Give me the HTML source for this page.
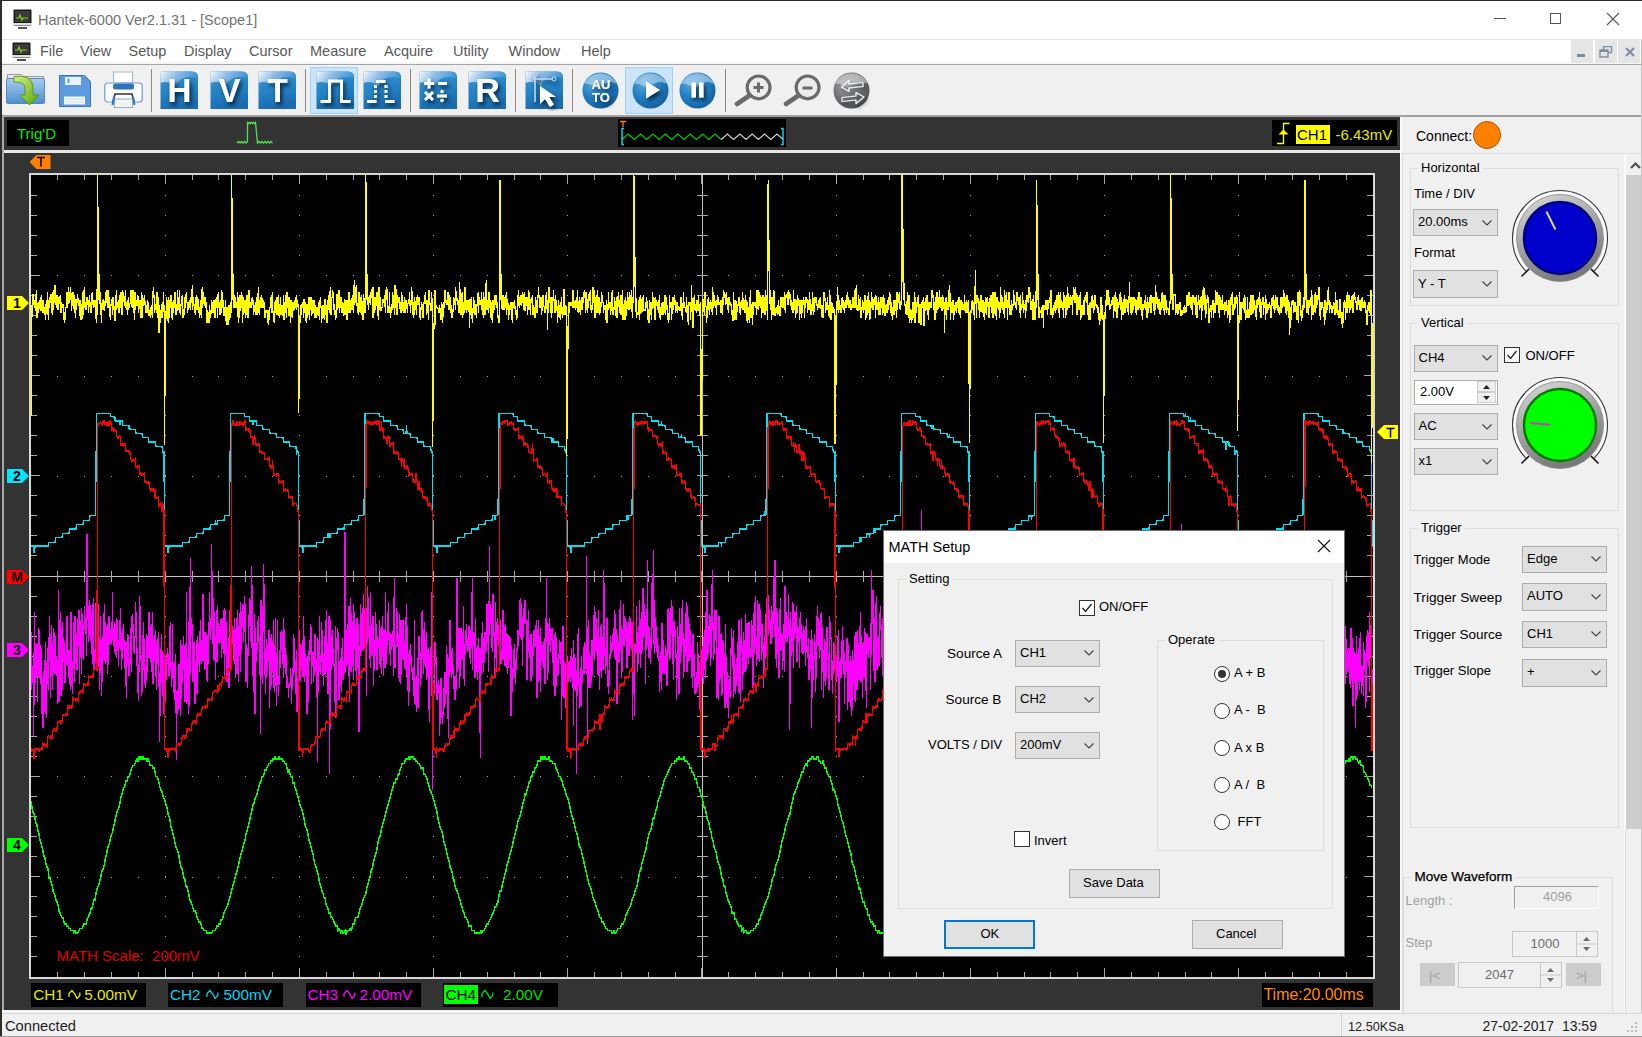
<!DOCTYPE html>
<html><head><meta charset="utf-8"><title>Hantek-6000</title>
<style>
html,body{margin:0;padding:0;width:1642px;height:1037px;overflow:hidden;background:#f0f0f0;}
body{position:relative;font-family:'Liberation Sans', sans-serif;}
.t{position:absolute;white-space:pre;line-height:1.15;font-family:'Liberation Sans', sans-serif;}
</style></head><body>
<div style="position:absolute;left:0px;top:0px;width:1642px;height:1px;background:#2c2c2c"></div>
<div style="position:absolute;left:0px;top:0px;width:2px;height:1037px;background:#2c2c2c"></div>
<div style="position:absolute;left:2px;top:1px;width:1640px;height:39px;background:#fff"></div>
<div style="position:absolute;left:2px;top:39px;width:1640px;height:1px;background:#e3e3e3"></div>
<svg style="position:absolute;left:13px;top:9px" width="19" height="20" viewBox="0 0 19 20">
<rect x="0.5" y="0.5" width="18" height="16" rx="1" fill="#1a1a1a"/><rect x="2" y="2" width="15" height="11" fill="#3a3a3a"/>
<path d="M3 9h3l1-3 2 5 1-2h5" stroke="#7dd321" stroke-width="1.2" fill="none"/><rect x="0" y="14" width="19" height="2" fill="#e0e0e0"/>
<rect x="5" y="18" width="9" height="2" fill="#555"/></svg>
<div class="t" style="left:38px;top:11.9px;font-size:14.5px;color:#737373;">Hantek-6000 Ver2.1.31 - [Scope1]</div>
<div style="position:absolute;left:1494px;top:18px;width:12px;height:1px;background:#555"></div>
<div style="position:absolute;left:1550px;top:13px;width:11px;height:11px;border:1px solid #555;box-sizing:border-box"></div>
<svg style="position:absolute;left:1606px;top:12px" width="14" height="14"><path d="M1 1L13 13M13 1L1 13" stroke="#555" stroke-width="1.1"/></svg>
<div style="position:absolute;left:2px;top:40px;width:1640px;height:24px;background:linear-gradient(#fff 85%,#f3f3f3)"></div>
<svg style="position:absolute;left:12px;top:42px" width="19" height="20" viewBox="0 0 19 20">
<rect x="0.5" y="0.5" width="18" height="15" rx="1" fill="#1a1a1a"/><rect x="2" y="2" width="15" height="10" fill="#3a3a3a"/>
<path d="M3 8h3l1-3 2 5 1-2h5" stroke="#7dd321" stroke-width="1.2" fill="none"/><rect x="0" y="13" width="19" height="2" fill="#e0e0e0"/>
<rect x="5" y="17" width="9" height="2" fill="#555"/></svg>
<div class="t" style="left:40px;top:43.4px;font-size:14.5px;color:#585858;">File</div>
<div class="t" style="left:80px;top:43.4px;font-size:14.5px;color:#585858;">View</div>
<div class="t" style="left:128.5px;top:43.4px;font-size:14.5px;color:#585858;">Setup</div>
<div class="t" style="left:184px;top:43.4px;font-size:14.5px;color:#585858;">Display</div>
<div class="t" style="left:249px;top:43.4px;font-size:14.5px;color:#585858;">Cursor</div>
<div class="t" style="left:310px;top:43.4px;font-size:14.5px;color:#585858;">Measure</div>
<div class="t" style="left:384px;top:43.4px;font-size:14.5px;color:#585858;">Acquire</div>
<div class="t" style="left:453px;top:43.4px;font-size:14.5px;color:#585858;">Utility</div>
<div class="t" style="left:508.5px;top:43.4px;font-size:14.5px;color:#585858;">Window</div>
<div class="t" style="left:581px;top:43.4px;font-size:14.5px;color:#585858;">Help</div>
<div style="position:absolute;left:1571px;top:40px;width:22px;height:23px;background:#e6e6e6"></div>
<div style="position:absolute;left:1595px;top:40px;width:22px;height:23px;background:#e6e6e6"></div>
<div style="position:absolute;left:1618px;top:40px;width:22px;height:23px;background:#e6e6e6"></div>
<div style="position:absolute;left:1577px;top:54px;width:8px;height:2.5px;background:#7b8da0"></div>
<svg style="position:absolute;left:1599px;top:46px" width="14" height="14"><rect x="4.5" y="0.5" width="8" height="6" fill="none" stroke="#7b8da0" stroke-width="1.4"/><rect x="1" y="4" width="8" height="7" fill="#e6e6e6" stroke="#7b8da0" stroke-width="1.4"/><rect x="1" y="4" width="8" height="2" fill="#7b8da0"/></svg>
<svg style="position:absolute;left:1625px;top:47px" width="10" height="10"><path d="M1 1L9 9M9 1L1 9" stroke="#7b8da0" stroke-width="2.2"/></svg>
<div style="position:absolute;left:2px;top:64px;width:1640px;height:52px;background:#f0f0f0"></div>
<div style="position:absolute;left:2px;top:64px;width:1640px;height:1px;background:#a5a5a5"></div>
<div style="position:absolute;left:2px;top:115px;width:1640px;height:2px;background:#a0a0a0"></div>
<div style="position:absolute;left:151px;top:69px;width:1px;height:43px;background:#8a8a8a"></div>
<div style="position:absolute;left:305px;top:69px;width:1px;height:43px;background:#8a8a8a"></div>
<div style="position:absolute;left:410px;top:69px;width:1px;height:43px;background:#8a8a8a"></div>
<div style="position:absolute;left:515px;top:69px;width:1px;height:43px;background:#8a8a8a"></div>
<div style="position:absolute;left:571.5px;top:69px;width:1px;height:43px;background:#8a8a8a"></div>
<div style="position:absolute;left:725px;top:69px;width:1px;height:43px;background:#8a8a8a"></div>
<svg style="position:absolute;left:5px;top:72px" width="42" height="36" viewBox="0 0 42 36">
<defs><linearGradient id="fold" x1="0" y1="0" x2="0" y2="1"><stop offset="0" stop-color="#a8cdee"/><stop offset="1" stop-color="#4d8fd1"/></linearGradient>
<linearGradient id="arr" x1="0" y1="0" x2="1" y2="1"><stop offset="0" stop-color="#d6f08a"/><stop offset="1" stop-color="#5aa800"/></linearGradient></defs>
<path d="M2.5 2.5h14l2 2h20v5h-36z" fill="#e8e8e8" stroke="#9a9a9a"/>
<rect x="1.5" y="6.5" width="38" height="25" rx="1.5" fill="url(#fold)" stroke="#5b86b8"/>
<path d="M9 4.5Q27 2 28 15V23H34L24.5 33L15 23H20V15.5Q19.5 9.5 9 10z" fill="url(#arr)" stroke="#4c8f00" stroke-width="0.8"/>
</svg>
<svg style="position:absolute;left:59px;top:75px" width="33" height="33" viewBox="0 0 33 33">
<path d="M0.5 0.5h25l6 6v25h-31z" fill="#5d9be0" stroke="#3a74c4"/>
<rect x="6" y="2" width="16" height="8" fill="#eaf2fb"/><rect x="8.5" y="3.5" width="2" height="4.5" fill="#5d9be0"/>
<rect x="5" y="21.5" width="21" height="8" fill="#f4f8fc"/><path d="M6 24h19M6 27h19" stroke="#c8d8ea" stroke-width="0.8"/>
</svg>
<svg style="position:absolute;left:104px;top:71px" width="39" height="38" viewBox="0 0 39 38">
<rect x="9.5" y="1" width="19" height="11" fill="#fff" stroke="#9bb8d8"/>
<rect x="0.8" y="12" width="37.4" height="19" rx="3" fill="#fbfbfb" stroke="#6c9fd4" stroke-width="1.2"/>
<rect x="9" y="12.5" width="21" height="6" rx="2.5" fill="#2d73bf"/>
<path d="M9 31l2-8h17l2 8" fill="#fff" stroke="#333" stroke-width="1.6"/>
<rect x="10.5" y="28" width="18" height="8.5" fill="#f3f3f3" stroke="#8fb0d6"/>
<path d="M10 26l-1.5 8M29 26l1.5 8" stroke="#2d73bf" stroke-width="2"/>
</svg>
<div style="position:absolute;left:310px;top:67px;width:48px;height:47px;background:#cce4f7;border:1px solid #99d1ff;box-sizing:border-box"></div>
<div style="position:absolute;left:625px;top:67px;width:48px;height:47px;background:#cce4f7;border:1px solid #99d1ff;box-sizing:border-box"></div>
<svg width="0" height="0" style="position:absolute"><defs>
<linearGradient id="sqbg" x1="0" y1="0" x2="0.3" y2="1"><stop offset="0" stop-color="#3d95d6"/><stop offset="0.6" stop-color="#2381c4"/><stop offset="1" stop-color="#1a6cb0"/></linearGradient>
<linearGradient id="sqhl" x1="0" y1="0" x2="1" y2="0.3"><stop offset="0" stop-color="#f4f8fc"/><stop offset="0.45" stop-color="#8dbde6"/><stop offset="1" stop-color="#3a93d4"/></linearGradient>
<filter id="gsh" x="-30%" y="-30%" width="160%" height="160%"><feGaussianBlur in="SourceAlpha" stdDeviation="2"/><feOffset dx="2.2" dy="2.8" result="b"/><feFlood flood-color="#041e36" flood-opacity="0.95"/><feComposite in2="b" operator="in"/><feMerge><feMergeNode/><feMergeNode in="SourceGraphic"/></feMerge></filter>
<radialGradient id="cbg" cx="0.35" cy="0.3" r="0.8"><stop offset="0" stop-color="#5aaae0"/><stop offset="0.5" stop-color="#2480c3"/><stop offset="1" stop-color="#0f5a9a"/></radialGradient>
</defs></svg>
<svg style="position:absolute;left:160px;top:71px" width="40" height="40" viewBox="0 0 40 40"><path d="M0.5 1.5Q0.5 0.5 1.5 0.5H32Q38 0.5 38 6.5V38H0.5z" fill="url(#sqbg)"/><path d="M0.5 1.5Q0.5 0.5 1.5 0.5H32Q38 0.5 38 6.5V7Q20 3 16 15Q8 9 0.5 12z" fill="url(#sqhl)"/><g filter="url(#gsh)"><text x="19.5" y="30.5" text-anchor="middle" font-family="Liberation Sans" font-weight="bold" font-size="33" fill="#fff">H</text></g></svg>
<svg style="position:absolute;left:209.5px;top:71px" width="40" height="40" viewBox="0 0 40 40"><path d="M0.5 1.5Q0.5 0.5 1.5 0.5H32Q38 0.5 38 6.5V38H0.5z" fill="url(#sqbg)"/><path d="M0.5 1.5Q0.5 0.5 1.5 0.5H32Q38 0.5 38 6.5V7Q20 3 16 15Q8 9 0.5 12z" fill="url(#sqhl)"/><g filter="url(#gsh)"><text x="19.5" y="30.5" text-anchor="middle" font-family="Liberation Sans" font-weight="bold" font-size="33" fill="#fff">V</text></g></svg>
<svg style="position:absolute;left:258px;top:71px" width="40" height="40" viewBox="0 0 40 40"><path d="M0.5 1.5Q0.5 0.5 1.5 0.5H32Q38 0.5 38 6.5V38H0.5z" fill="url(#sqbg)"/><path d="M0.5 1.5Q0.5 0.5 1.5 0.5H32Q38 0.5 38 6.5V7Q20 3 16 15Q8 9 0.5 12z" fill="url(#sqhl)"/><g filter="url(#gsh)"><text x="19.5" y="30.5" text-anchor="middle" font-family="Liberation Sans" font-weight="bold" font-size="33" fill="#fff">T</text></g></svg>
<svg style="position:absolute;left:316px;top:71px" width="40" height="40" viewBox="0 0 40 40"><path d="M0.5 1.5Q0.5 0.5 1.5 0.5H32Q38 0.5 38 6.5V38H0.5z" fill="url(#sqbg)"/><path d="M0.5 1.5Q0.5 0.5 1.5 0.5H32Q38 0.5 38 6.5V7Q20 3 16 15Q8 9 0.5 12z" fill="url(#sqhl)"/><g filter="url(#gsh)"><path d="M4.5 30.5h9V10h12v20.5h9" stroke="#fff" stroke-width="3" fill="none"/></g></svg>
<svg style="position:absolute;left:363px;top:71px" width="40" height="40" viewBox="0 0 40 40"><path d="M0.5 1.5Q0.5 0.5 1.5 0.5H32Q38 0.5 38 6.5V38H0.5z" fill="url(#sqbg)"/><path d="M0.5 1.5Q0.5 0.5 1.5 0.5H32Q38 0.5 38 6.5V7Q20 3 16 15Q8 9 0.5 12z" fill="url(#sqhl)"/><g filter="url(#gsh)"><path d="M4 30.5h9.5M22 30.5h9.5M13 10.5h9.5" stroke="#fff" stroke-width="3" fill="none"/><path d="M12.5 14v14M23 14v14" stroke="#fff" stroke-width="3" stroke-dasharray="3 2" fill="none"/></g></svg>
<svg style="position:absolute;left:419px;top:71px" width="40" height="40" viewBox="0 0 40 40"><path d="M0.5 1.5Q0.5 0.5 1.5 0.5H32Q38 0.5 38 6.5V38H0.5z" fill="url(#sqbg)"/><path d="M0.5 1.5Q0.5 0.5 1.5 0.5H32Q38 0.5 38 6.5V7Q20 3 16 15Q8 9 0.5 12z" fill="url(#sqhl)"/><g filter="url(#gsh)"><path d="M5 12.5h10M10 7.5v10M19 12.5h9M6 21l8 8M14 21l-8 8M18 25h10" stroke="#fff" stroke-width="3" fill="none"/><circle cx="23" cy="20.5" r="1.8" fill="#fff"/><circle cx="23" cy="29.5" r="1.8" fill="#fff"/></g></svg>
<svg style="position:absolute;left:468px;top:71px" width="40" height="40" viewBox="0 0 40 40"><path d="M0.5 1.5Q0.5 0.5 1.5 0.5H32Q38 0.5 38 6.5V38H0.5z" fill="url(#sqbg)"/><path d="M0.5 1.5Q0.5 0.5 1.5 0.5H32Q38 0.5 38 6.5V7Q20 3 16 15Q8 9 0.5 12z" fill="url(#sqhl)"/><g filter="url(#gsh)"><text x="19.5" y="31" text-anchor="middle" font-family="Liberation Sans" font-weight="bold" font-size="34" fill="#fff">R</text></g></svg>
<svg style="position:absolute;left:525px;top:71px" width="40" height="40" viewBox="0 0 40 40"><path d="M0.5 1.5Q0.5 0.5 1.5 0.5H32Q38 0.5 38 6.5V38H0.5z" fill="url(#sqbg)"/><path d="M0.5 1.5Q0.5 0.5 1.5 0.5H32Q38 0.5 38 6.5V7Q20 3 16 15Q8 9 0.5 12z" fill="url(#sqhl)"/><g filter="url(#gsh)"><path d="M8 8h20M10 4v27" stroke="#b8d4ea" stroke-width="1.6" fill="none"/><circle cx="10" cy="4" r="2" fill="none" stroke="#b8d4ea"/><circle cx="29" cy="8" r="2" fill="none" stroke="#b8d4ea"/><path d="M15 15v18l5-5 5 8 4-2.5-5-7.5h7z" fill="#fff"/></g></svg>
<svg width="0" height="0" style="position:absolute"><defs><radialGradient id="cgray" cx="0.4" cy="0.35" r="0.75"><stop offset="0" stop-color="#b0b0b0"/><stop offset="0.6" stop-color="#6e6e6e"/><stop offset="1" stop-color="#4a4a4a"/></radialGradient></defs></svg>
<svg style="position:absolute;left:582px;top:72px" width="40" height="40" viewBox="0 0 40 40"><circle cx="18.5" cy="18.5" r="18" fill="url(#cbg)"/><path d="M2 12A18 18 0 0 1 35 12Q25 6 16 17Q8 11 2 12z" fill="#cfe4f5" opacity="0.55"/><g filter="url(#gsh)"><text x="19" y="17" text-anchor="middle" font-family="Liberation Sans" font-weight="bold" font-size="13" fill="#fff">AU</text><text x="19" y="29.5" text-anchor="middle" font-family="Liberation Sans" font-weight="bold" font-size="13" fill="#fff">TO</text></g></svg>
<svg style="position:absolute;left:631.5px;top:72px" width="40" height="40" viewBox="0 0 40 40"><circle cx="18.5" cy="18.5" r="18" fill="url(#cbg)"/><path d="M2 12A18 18 0 0 1 35 12Q25 6 16 17Q8 11 2 12z" fill="#cfe4f5" opacity="0.55"/><g filter="url(#gsh)"><path d="M14 9.5v17l14-8.5z" fill="#fff"/></g></svg>
<svg style="position:absolute;left:679px;top:72px" width="40" height="40" viewBox="0 0 40 40"><circle cx="18.5" cy="18.5" r="18" fill="url(#cbg)"/><path d="M2 12A18 18 0 0 1 35 12Q25 6 16 17Q8 11 2 12z" fill="#cfe4f5" opacity="0.55"/><g filter="url(#gsh)"><rect x="12.5" y="10.5" width="4.5" height="15" fill="#fff"/><rect x="20" y="10.5" width="4.5" height="15" fill="#fff"/></g></svg>
<svg style="position:absolute;left:734px;top:73px" width="42" height="36"><circle cx="24.6" cy="14.4" r="11.4" fill="#ececec" stroke="#6a6a6a" stroke-width="3.2"/><path d="M19.5 14.5h10M24.5 9.5v10" stroke="#6a6a6a" stroke-width="3"/><path d="M15.5 22.5L3 31" stroke="#6a6a6a" stroke-width="4.6" stroke-linecap="round"/></svg>
<svg style="position:absolute;left:783px;top:73px" width="42" height="36"><circle cx="24.6" cy="14.4" r="11.4" fill="#ececec" stroke="#6a6a6a" stroke-width="3.2"/><path d="M19.5 15h10" stroke="#6a6a6a" stroke-width="3"/><path d="M15.5 22.5L3 31" stroke="#6a6a6a" stroke-width="4.6" stroke-linecap="round"/></svg>
<svg style="position:absolute;left:833px;top:72px" width="40" height="40" viewBox="0 0 40 40"><circle cx="18.5" cy="18.5" r="18" fill="url(#cgray)"/><path d="M2 12A18 18 0 0 1 35 12Q25 6 16 17Q8 11 2 12z" fill="#e0e0e0" opacity="0.55"/><g filter="url(#gsh)"><path d="M8.5 15L16 8.5V12L30 10.5V14.5L16 16V19.5z" fill="none" stroke="#f4f4f4" stroke-width="1.2" stroke-linejoin="round"/><path d="M31 25L23 31.5V28L9 29.5V25.5L23 24V20.5z" fill="none" stroke="#f4f4f4" stroke-width="1.2" stroke-linejoin="round"/></g></svg>
<div style="position:absolute;left:2px;top:117px;width:1400px;height:896px;background:#333"></div>
<div style="position:absolute;left:2px;top:117px;width:2px;height:895px;background:#a9a9a9"></div>
<div style="position:absolute;left:4px;top:150px;width:1397px;height:3px;background:#e6e6e6"></div>
<div style="position:absolute;left:1400px;top:117px;width:2px;height:896px;background:#f8f8f8"></div>
<div style="position:absolute;left:2px;top:1010px;width:1400px;height:3px;background:#f4f4f4"></div>
<div style="position:absolute;left:7px;top:120px;width:62px;height:26px;background:#000"></div>
<div class="t" style="left:17px;top:125.4px;font-size:15px;color:#00ee00;">Trig'D</div>
<svg style="position:absolute;left:236px;top:121px" width="40" height="25"><path d="M1 22l1.5-1.5 1.5 1.5 1.5-1.5 1.5 1.5 1.5-1.5 1.5 1.5 1.5-1.5L11.5 1.5l1 1 1-1 1 1 1-1 1 1 1-1 1 1 1-1L21.5 22l1.5-1.5 1.5 1.5 1.5-1.5 1.5 1.5 1.5-1.5 1.5 1.5 1.5-1.5 1.5 1.5 1.5-1.5 1.5 1.5" stroke="#55e055" stroke-width="1.3" fill="none"/></svg>
<div style="position:absolute;left:618px;top:119px;width:168px;height:28px;background:#000"></div>
<svg style="position:absolute;left:0;top:0" width="1642" height="200"><path d="M622.0 139.5L628.2 134L634.4 139.5L640.6 134L646.8 139.5L653.0 134L659.2 139.5L665.4 134L671.6 139.5L677.8 134L684.0 139.5L690.2 134L696.4 139.5L702.6 134L708.8 139.5L715.0 134L721.2 139.5" stroke="#00cc00" stroke-width="1.2" fill="none"/><path d="M721.2 139.5L727.4 134L733.6 139.5L739.8 134L746.0 139.5L752.2 134L758.4 139.5L764.6 134L770.8 139.5L777.0 134L783.2 139.5" stroke="#d0d0d0" stroke-width="1.2" fill="none"/><path d="M624 128.5h-2v16h2M781 128.5h2v16h-2" stroke="#00e5ff" stroke-width="1.4" fill="none"/><path d="M620 121.5h6M623 121.5v5.5" stroke="#ff7f00" stroke-width="1.3"/></svg>
<div style="position:absolute;left:1272px;top:120px;width:125px;height:26px;background:#000"></div>
<svg style="position:absolute;left:1276px;top:122px" width="16" height="24"><path d="M1 21.5h6.5V1.5h6" stroke="#ffff00" stroke-width="1.3" fill="none"/><path d="M2.5 12.5l5-5 5 5z" fill="#ffff00"/></svg>
<div style="position:absolute;left:1295.5px;top:125px;width:34.5px;height:19px;background:#ffff00"></div>
<div class="t" style="left:1297px;top:126.2px;font-size:15px;color:#000;">CH1</div>
<div class="t" style="left:1335.5px;top:126.2px;font-size:15px;color:#e8e800;">-6.43mV</div>
<svg style="position:absolute;left:28px;top:154px" width="24" height="16"><path d="M1.5 8L8.5 1h14v14h-14z" fill="#ff8000"/><path d="M9 3.5h8M13 3.5v9" stroke="#000" stroke-width="1.5"/></svg>
<svg style="position:absolute;left:0;top:0" width="1642" height="1037" shape-rendering="crispEdges"><rect x="30" y="174" width="1344" height="804" fill="#000"/>
<line x1="702.5" y1="175" x2="702.5" y2="977" stroke="#c4c4c4" stroke-width="1"/>
<line x1="31" y1="576.5" x2="1373" y2="576.5" stroke="#c4c4c4" stroke-width="1"/>
<path d="M57.5 175v5M57.5 977v-5M57.5 571v11M84.5 175v5M84.5 977v-5M84.5 571v11M111.5 175v5M111.5 977v-5M111.5 571v11M138.5 175v5M138.5 977v-5M138.5 571v11M165.5 175v9M165.5 977v-9M165.5 571v11M192.5 175v5M192.5 977v-5M192.5 571v11M218.5 175v5M218.5 977v-5M218.5 571v11M245.5 175v5M245.5 977v-5M245.5 571v11M272.5 175v5M272.5 977v-5M272.5 571v11M299.5 175v9M299.5 977v-9M299.5 571v11M326.5 175v5M326.5 977v-5M326.5 571v11M353.5 175v5M353.5 977v-5M353.5 571v11M379.5 175v5M379.5 977v-5M379.5 571v11M406.5 175v5M406.5 977v-5M406.5 571v11M433.5 175v9M433.5 977v-9M433.5 571v11M460.5 175v5M460.5 977v-5M460.5 571v11M487.5 175v5M487.5 977v-5M487.5 571v11M514.5 175v5M514.5 977v-5M514.5 571v11M540.5 175v5M540.5 977v-5M540.5 571v11M567.5 175v9M567.5 977v-9M567.5 571v11M594.5 175v5M594.5 977v-5M594.5 571v11M621.5 175v5M621.5 977v-5M621.5 571v11M648.5 175v5M648.5 977v-5M648.5 571v11M675.5 175v5M675.5 977v-5M675.5 571v11M701.5 175v9M701.5 977v-9M701.5 571v11M728.5 175v5M728.5 977v-5M728.5 571v11M755.5 175v5M755.5 977v-5M755.5 571v11M782.5 175v5M782.5 977v-5M782.5 571v11M809.5 175v5M809.5 977v-5M809.5 571v11M836.5 175v9M836.5 977v-9M836.5 571v11M863.5 175v5M863.5 977v-5M863.5 571v11M889.5 175v5M889.5 977v-5M889.5 571v11M916.5 175v5M916.5 977v-5M916.5 571v11M943.5 175v5M943.5 977v-5M943.5 571v11M970.5 175v9M970.5 977v-9M970.5 571v11M997.5 175v5M997.5 977v-5M997.5 571v11M1024.5 175v5M1024.5 977v-5M1024.5 571v11M1050.5 175v5M1050.5 977v-5M1050.5 571v11M1077.5 175v5M1077.5 977v-5M1077.5 571v11M1104.5 175v9M1104.5 977v-9M1104.5 571v11M1131.5 175v5M1131.5 977v-5M1131.5 571v11M1158.5 175v5M1158.5 977v-5M1158.5 571v11M1185.5 175v5M1185.5 977v-5M1185.5 571v11M1211.5 175v5M1211.5 977v-5M1211.5 571v11M1238.5 175v9M1238.5 977v-9M1238.5 571v11M1265.5 175v5M1265.5 977v-5M1265.5 571v11M1292.5 175v5M1292.5 977v-5M1292.5 571v11M1319.5 175v5M1319.5 977v-5M1319.5 571v11M1346.5 175v5M1346.5 977v-5M1346.5 571v11M31 195.5h6M1373 195.5h-6M697 195.5h11M31 215.5h6M1373 215.5h-6M697 215.5h11M31 235.5h6M1373 235.5h-6M697 235.5h11M31 255.5h6M1373 255.5h-6M697 255.5h11M31 275.5h9M1373 275.5h-9M697 275.5h11M31 295.5h6M1373 295.5h-6M697 295.5h11M31 315.5h6M1373 315.5h-6M697 315.5h11M31 335.5h6M1373 335.5h-6M697 335.5h11M31 355.5h6M1373 355.5h-6M697 355.5h11M31 375.5h9M1373 375.5h-9M697 375.5h11M31 395.5h6M1373 395.5h-6M697 395.5h11M31 415.5h6M1373 415.5h-6M697 415.5h11M31 435.5h6M1373 435.5h-6M697 435.5h11M31 455.5h6M1373 455.5h-6M697 455.5h11M31 475.5h9M1373 475.5h-9M697 475.5h11M31 495.5h6M1373 495.5h-6M697 495.5h11M31 515.5h6M1373 515.5h-6M697 515.5h11M31 535.5h6M1373 535.5h-6M697 535.5h11M31 555.5h6M1373 555.5h-6M697 555.5h11M31 576.5h9M1373 576.5h-9M697 576.5h11M31 596.5h6M1373 596.5h-6M697 596.5h11M31 616.5h6M1373 616.5h-6M697 616.5h11M31 636.5h6M1373 636.5h-6M697 636.5h11M31 656.5h6M1373 656.5h-6M697 656.5h11M31 676.5h9M1373 676.5h-9M697 676.5h11M31 696.5h6M1373 696.5h-6M697 696.5h11M31 716.5h6M1373 716.5h-6M697 716.5h11M31 736.5h6M1373 736.5h-6M697 736.5h11M31 756.5h6M1373 756.5h-6M697 756.5h11M31 776.5h9M1373 776.5h-9M697 776.5h11M31 796.5h6M1373 796.5h-6M697 796.5h11M31 816.5h6M1373 816.5h-6M697 816.5h11M31 836.5h6M1373 836.5h-6M697 836.5h11M31 856.5h6M1373 856.5h-6M697 856.5h11M31 876.5h9M1373 876.5h-9M697 876.5h11M31 896.5h6M1373 896.5h-6M697 896.5h11M31 916.5h6M1373 916.5h-6M697 916.5h11M31 936.5h6M1373 936.5h-6M697 936.5h11M31 956.5h6M1373 956.5h-6M697 956.5h11" stroke="#a8a8a8" stroke-width="1" fill="none"/>
<path d="M57.0 275h1M57.0 376h1M57.0 476h1M57.0 576h1M57.0 676h1M57.0 776h1M57.0 877h1M84.0 275h1M84.0 376h1M84.0 476h1M84.0 576h1M84.0 676h1M84.0 776h1M84.0 877h1M111.0 275h1M111.0 376h1M111.0 476h1M111.0 576h1M111.0 676h1M111.0 776h1M111.0 877h1M138.0 275h1M138.0 376h1M138.0 476h1M138.0 576h1M138.0 676h1M138.0 776h1M138.0 877h1M165.0 275h1M165.0 376h1M165.0 476h1M165.0 576h1M165.0 676h1M165.0 776h1M165.0 877h1M192.0 275h1M192.0 376h1M192.0 476h1M192.0 576h1M192.0 676h1M192.0 776h1M192.0 877h1M218.0 275h1M218.0 376h1M218.0 476h1M218.0 576h1M218.0 676h1M218.0 776h1M218.0 877h1M245.0 275h1M245.0 376h1M245.0 476h1M245.0 576h1M245.0 676h1M245.0 776h1M245.0 877h1M272.0 275h1M272.0 376h1M272.0 476h1M272.0 576h1M272.0 676h1M272.0 776h1M272.0 877h1M299.0 275h1M299.0 376h1M299.0 476h1M299.0 576h1M299.0 676h1M299.0 776h1M299.0 877h1M326.0 275h1M326.0 376h1M326.0 476h1M326.0 576h1M326.0 676h1M326.0 776h1M326.0 877h1M353.0 275h1M353.0 376h1M353.0 476h1M353.0 576h1M353.0 676h1M353.0 776h1M353.0 877h1M379.0 275h1M379.0 376h1M379.0 476h1M379.0 576h1M379.0 676h1M379.0 776h1M379.0 877h1M406.0 275h1M406.0 376h1M406.0 476h1M406.0 576h1M406.0 676h1M406.0 776h1M406.0 877h1M433.0 275h1M433.0 376h1M433.0 476h1M433.0 576h1M433.0 676h1M433.0 776h1M433.0 877h1M460.0 275h1M460.0 376h1M460.0 476h1M460.0 576h1M460.0 676h1M460.0 776h1M460.0 877h1M487.0 275h1M487.0 376h1M487.0 476h1M487.0 576h1M487.0 676h1M487.0 776h1M487.0 877h1M514.0 275h1M514.0 376h1M514.0 476h1M514.0 576h1M514.0 676h1M514.0 776h1M514.0 877h1M540.0 275h1M540.0 376h1M540.0 476h1M540.0 576h1M540.0 676h1M540.0 776h1M540.0 877h1M567.0 275h1M567.0 376h1M567.0 476h1M567.0 576h1M567.0 676h1M567.0 776h1M567.0 877h1M594.0 275h1M594.0 376h1M594.0 476h1M594.0 576h1M594.0 676h1M594.0 776h1M594.0 877h1M621.0 275h1M621.0 376h1M621.0 476h1M621.0 576h1M621.0 676h1M621.0 776h1M621.0 877h1M648.0 275h1M648.0 376h1M648.0 476h1M648.0 576h1M648.0 676h1M648.0 776h1M648.0 877h1M675.0 275h1M675.0 376h1M675.0 476h1M675.0 576h1M675.0 676h1M675.0 776h1M675.0 877h1M701.0 275h1M701.0 376h1M701.0 476h1M701.0 576h1M701.0 676h1M701.0 776h1M701.0 877h1M728.0 275h1M728.0 376h1M728.0 476h1M728.0 576h1M728.0 676h1M728.0 776h1M728.0 877h1M755.0 275h1M755.0 376h1M755.0 476h1M755.0 576h1M755.0 676h1M755.0 776h1M755.0 877h1M782.0 275h1M782.0 376h1M782.0 476h1M782.0 576h1M782.0 676h1M782.0 776h1M782.0 877h1M809.0 275h1M809.0 376h1M809.0 476h1M809.0 576h1M809.0 676h1M809.0 776h1M809.0 877h1M836.0 275h1M836.0 376h1M836.0 476h1M836.0 576h1M836.0 676h1M836.0 776h1M836.0 877h1M863.0 275h1M863.0 376h1M863.0 476h1M863.0 576h1M863.0 676h1M863.0 776h1M863.0 877h1M889.0 275h1M889.0 376h1M889.0 476h1M889.0 576h1M889.0 676h1M889.0 776h1M889.0 877h1M916.0 275h1M916.0 376h1M916.0 476h1M916.0 576h1M916.0 676h1M916.0 776h1M916.0 877h1M943.0 275h1M943.0 376h1M943.0 476h1M943.0 576h1M943.0 676h1M943.0 776h1M943.0 877h1M970.0 275h1M970.0 376h1M970.0 476h1M970.0 576h1M970.0 676h1M970.0 776h1M970.0 877h1M997.0 275h1M997.0 376h1M997.0 476h1M997.0 576h1M997.0 676h1M997.0 776h1M997.0 877h1M1024.0 275h1M1024.0 376h1M1024.0 476h1M1024.0 576h1M1024.0 676h1M1024.0 776h1M1024.0 877h1M1050.0 275h1M1050.0 376h1M1050.0 476h1M1050.0 576h1M1050.0 676h1M1050.0 776h1M1050.0 877h1M1077.0 275h1M1077.0 376h1M1077.0 476h1M1077.0 576h1M1077.0 676h1M1077.0 776h1M1077.0 877h1M1104.0 275h1M1104.0 376h1M1104.0 476h1M1104.0 576h1M1104.0 676h1M1104.0 776h1M1104.0 877h1M1131.0 275h1M1131.0 376h1M1131.0 476h1M1131.0 576h1M1131.0 676h1M1131.0 776h1M1131.0 877h1M1158.0 275h1M1158.0 376h1M1158.0 476h1M1158.0 576h1M1158.0 676h1M1158.0 776h1M1158.0 877h1M1185.0 275h1M1185.0 376h1M1185.0 476h1M1185.0 576h1M1185.0 676h1M1185.0 776h1M1185.0 877h1M1211.0 275h1M1211.0 376h1M1211.0 476h1M1211.0 576h1M1211.0 676h1M1211.0 776h1M1211.0 877h1M1238.0 275h1M1238.0 376h1M1238.0 476h1M1238.0 576h1M1238.0 676h1M1238.0 776h1M1238.0 877h1M1265.0 275h1M1265.0 376h1M1265.0 476h1M1265.0 576h1M1265.0 676h1M1265.0 776h1M1265.0 877h1M1292.0 275h1M1292.0 376h1M1292.0 476h1M1292.0 576h1M1292.0 676h1M1292.0 776h1M1292.0 877h1M1319.0 275h1M1319.0 376h1M1319.0 476h1M1319.0 576h1M1319.0 676h1M1319.0 776h1M1319.0 877h1M1346.0 275h1M1346.0 376h1M1346.0 476h1M1346.0 576h1M1346.0 676h1M1346.0 776h1M1346.0 877h1M165 195.0v1M299 195.0v1M433 195.0v1M567 195.0v1M702 195.0v1M836 195.0v1M970 195.0v1M1104 195.0v1M1238 195.0v1M165 215.0v1M299 215.0v1M433 215.0v1M567 215.0v1M702 215.0v1M836 215.0v1M970 215.0v1M1104 215.0v1M1238 215.0v1M165 235.0v1M299 235.0v1M433 235.0v1M567 235.0v1M702 235.0v1M836 235.0v1M970 235.0v1M1104 235.0v1M1238 235.0v1M165 255.0v1M299 255.0v1M433 255.0v1M567 255.0v1M702 255.0v1M836 255.0v1M970 255.0v1M1104 255.0v1M1238 255.0v1M165 275.0v1M299 275.0v1M433 275.0v1M567 275.0v1M702 275.0v1M836 275.0v1M970 275.0v1M1104 275.0v1M1238 275.0v1M165 295.0v1M299 295.0v1M433 295.0v1M567 295.0v1M702 295.0v1M836 295.0v1M970 295.0v1M1104 295.0v1M1238 295.0v1M165 315.0v1M299 315.0v1M433 315.0v1M567 315.0v1M702 315.0v1M836 315.0v1M970 315.0v1M1104 315.0v1M1238 315.0v1M165 335.0v1M299 335.0v1M433 335.0v1M567 335.0v1M702 335.0v1M836 335.0v1M970 335.0v1M1104 335.0v1M1238 335.0v1M165 355.0v1M299 355.0v1M433 355.0v1M567 355.0v1M702 355.0v1M836 355.0v1M970 355.0v1M1104 355.0v1M1238 355.0v1M165 375.0v1M299 375.0v1M433 375.0v1M567 375.0v1M702 375.0v1M836 375.0v1M970 375.0v1M1104 375.0v1M1238 375.0v1M165 395.0v1M299 395.0v1M433 395.0v1M567 395.0v1M702 395.0v1M836 395.0v1M970 395.0v1M1104 395.0v1M1238 395.0v1M165 415.0v1M299 415.0v1M433 415.0v1M567 415.0v1M702 415.0v1M836 415.0v1M970 415.0v1M1104 415.0v1M1238 415.0v1M165 435.0v1M299 435.0v1M433 435.0v1M567 435.0v1M702 435.0v1M836 435.0v1M970 435.0v1M1104 435.0v1M1238 435.0v1M165 455.0v1M299 455.0v1M433 455.0v1M567 455.0v1M702 455.0v1M836 455.0v1M970 455.0v1M1104 455.0v1M1238 455.0v1M165 475.0v1M299 475.0v1M433 475.0v1M567 475.0v1M702 475.0v1M836 475.0v1M970 475.0v1M1104 475.0v1M1238 475.0v1M165 495.0v1M299 495.0v1M433 495.0v1M567 495.0v1M702 495.0v1M836 495.0v1M970 495.0v1M1104 495.0v1M1238 495.0v1M165 515.0v1M299 515.0v1M433 515.0v1M567 515.0v1M702 515.0v1M836 515.0v1M970 515.0v1M1104 515.0v1M1238 515.0v1M165 535.0v1M299 535.0v1M433 535.0v1M567 535.0v1M702 535.0v1M836 535.0v1M970 535.0v1M1104 535.0v1M1238 535.0v1M165 555.0v1M299 555.0v1M433 555.0v1M567 555.0v1M702 555.0v1M836 555.0v1M970 555.0v1M1104 555.0v1M1238 555.0v1M165 576.0v1M299 576.0v1M433 576.0v1M567 576.0v1M702 576.0v1M836 576.0v1M970 576.0v1M1104 576.0v1M1238 576.0v1M165 596.0v1M299 596.0v1M433 596.0v1M567 596.0v1M702 596.0v1M836 596.0v1M970 596.0v1M1104 596.0v1M1238 596.0v1M165 616.0v1M299 616.0v1M433 616.0v1M567 616.0v1M702 616.0v1M836 616.0v1M970 616.0v1M1104 616.0v1M1238 616.0v1M165 636.0v1M299 636.0v1M433 636.0v1M567 636.0v1M702 636.0v1M836 636.0v1M970 636.0v1M1104 636.0v1M1238 636.0v1M165 656.0v1M299 656.0v1M433 656.0v1M567 656.0v1M702 656.0v1M836 656.0v1M970 656.0v1M1104 656.0v1M1238 656.0v1M165 676.0v1M299 676.0v1M433 676.0v1M567 676.0v1M702 676.0v1M836 676.0v1M970 676.0v1M1104 676.0v1M1238 676.0v1M165 696.0v1M299 696.0v1M433 696.0v1M567 696.0v1M702 696.0v1M836 696.0v1M970 696.0v1M1104 696.0v1M1238 696.0v1M165 716.0v1M299 716.0v1M433 716.0v1M567 716.0v1M702 716.0v1M836 716.0v1M970 716.0v1M1104 716.0v1M1238 716.0v1M165 736.0v1M299 736.0v1M433 736.0v1M567 736.0v1M702 736.0v1M836 736.0v1M970 736.0v1M1104 736.0v1M1238 736.0v1M165 756.0v1M299 756.0v1M433 756.0v1M567 756.0v1M702 756.0v1M836 756.0v1M970 756.0v1M1104 756.0v1M1238 756.0v1M165 776.0v1M299 776.0v1M433 776.0v1M567 776.0v1M702 776.0v1M836 776.0v1M970 776.0v1M1104 776.0v1M1238 776.0v1M165 796.0v1M299 796.0v1M433 796.0v1M567 796.0v1M702 796.0v1M836 796.0v1M970 796.0v1M1104 796.0v1M1238 796.0v1M165 816.0v1M299 816.0v1M433 816.0v1M567 816.0v1M702 816.0v1M836 816.0v1M970 816.0v1M1104 816.0v1M1238 816.0v1M165 836.0v1M299 836.0v1M433 836.0v1M567 836.0v1M702 836.0v1M836 836.0v1M970 836.0v1M1104 836.0v1M1238 836.0v1M165 856.0v1M299 856.0v1M433 856.0v1M567 856.0v1M702 856.0v1M836 856.0v1M970 856.0v1M1104 856.0v1M1238 856.0v1M165 876.0v1M299 876.0v1M433 876.0v1M567 876.0v1M702 876.0v1M836 876.0v1M970 876.0v1M1104 876.0v1M1238 876.0v1M165 896.0v1M299 896.0v1M433 896.0v1M567 896.0v1M702 896.0v1M836 896.0v1M970 896.0v1M1104 896.0v1M1238 896.0v1M165 916.0v1M299 916.0v1M433 916.0v1M567 916.0v1M702 916.0v1M836 916.0v1M970 916.0v1M1104 916.0v1M1238 916.0v1M165 936.0v1M299 936.0v1M433 936.0v1M567 936.0v1M702 936.0v1M836 936.0v1M970 936.0v1M1104 936.0v1M1238 936.0v1M165 956.0v1M299 956.0v1M433 956.0v1M567 956.0v1M702 956.0v1M836 956.0v1M970 956.0v1M1104 956.0v1M1238 956.0v1" stroke="#a0a0a0" stroke-width="1" fill="none"/></svg>
<svg style="position:absolute;left:0;top:0" width="1642" height="1037" shape-rendering="crispEdges"><polyline points="31.0,800.8 32.0,807.4 33.0,811.8 34.0,814.0 35.0,818.4 36.0,822.8 37.0,825.0 38.0,831.6 39.0,833.8 40.0,840.4 41.0,842.6 42.0,847.0 43.0,851.4 44.0,855.8 45.0,858.0 46.0,864.6 47.0,866.8 48.0,869.0 49.0,877.8 50.0,877.8 51.0,882.2 52.0,884.4 53.0,891.0 54.0,893.2 55.0,895.4 56.0,899.8 57.0,902.0 58.0,904.2 59.0,910.8 60.0,913.0 61.0,915.2 62.0,917.4 63.0,917.4 64.0,921.8 65.0,924.0 66.0,924.0 67.0,926.2 68.0,926.2 69.0,928.4 70.0,928.4 71.0,930.6 72.0,930.6 73.0,930.6 74.0,932.8 75.0,930.6 76.0,932.8 77.0,932.8 78.0,932.8 79.0,930.6 80.0,928.4 81.0,928.4 82.0,928.4 83.0,926.2 84.0,924.0 85.0,924.0 86.0,924.0 87.0,919.6 88.0,917.4 89.0,915.2 90.0,913.0 91.0,908.6 92.0,908.6 93.0,904.2 94.0,899.8 95.0,899.8 96.0,893.2 97.0,888.8 98.0,886.6 99.0,884.4 100.0,880.0 101.0,875.6 102.0,871.2 103.0,869.0 104.0,866.8 105.0,860.2 106.0,855.8 107.0,851.4 108.0,847.0 109.0,844.8 110.0,840.4 111.0,836.0 112.0,833.8 113.0,829.4 114.0,825.0 115.0,820.6 116.0,816.2 117.0,811.8 118.0,809.6 119.0,807.4 120.0,803.0 121.0,796.4 122.0,794.2 123.0,789.8 124.0,787.6 125.0,785.4 126.0,781.0 127.0,781.0 128.0,776.6 129.0,776.6 130.0,774.4 131.0,770.0 132.0,767.8 133.0,765.6 134.0,765.6 135.0,763.4 136.0,761.2 137.0,759.0 138.0,761.2 139.0,756.8 140.0,759.0 141.0,756.8 142.0,759.0 143.0,756.8 144.0,759.0 145.0,759.0 146.0,759.0 147.0,761.2 148.0,759.0 149.0,761.2 150.0,765.6 151.0,765.6 152.0,765.6 153.0,767.8 154.0,767.8 155.0,772.2 156.0,776.6 157.0,776.6 158.0,778.8 159.0,783.2 160.0,787.6 161.0,789.8 162.0,792.0 163.0,796.4 164.0,798.6 165.0,800.8 166.0,805.2 167.0,807.4 168.0,814.0 169.0,816.2 170.0,820.6 171.0,827.2 172.0,829.4 173.0,833.8 174.0,838.2 175.0,842.6 176.0,847.0 177.0,849.2 178.0,851.4 179.0,855.8 180.0,862.4 181.0,866.8 182.0,869.0 183.0,873.4 184.0,877.8 185.0,880.0 186.0,886.6 187.0,886.6 188.0,891.0 189.0,895.4 190.0,899.8 191.0,902.0 192.0,904.2 193.0,908.6 194.0,910.8 195.0,910.8 196.0,913.0 197.0,917.4 198.0,919.6 199.0,921.8 200.0,921.8 201.0,924.0 202.0,928.4 203.0,928.4 204.0,930.6 205.0,930.6 206.0,930.6 207.0,932.8 208.0,932.8 209.0,932.8 210.0,932.8 211.0,932.8 212.0,932.8 213.0,930.6 214.0,930.6 215.0,930.6 216.0,928.4 217.0,926.2 218.0,926.2 219.0,924.0 220.0,924.0 221.0,919.6 222.0,919.6 223.0,917.4 224.0,913.0 225.0,910.8 226.0,908.6 227.0,906.4 228.0,904.2 229.0,899.8 230.0,897.6 231.0,893.2 232.0,888.8 233.0,884.4 234.0,882.2 235.0,877.8 236.0,873.4 237.0,871.2 238.0,866.8 239.0,862.4 240.0,858.0 241.0,853.6 242.0,851.4 243.0,847.0 244.0,842.6 245.0,840.4 246.0,833.8 247.0,831.6 248.0,827.2 249.0,822.8 250.0,818.4 251.0,814.0 252.0,809.6 253.0,805.2 254.0,803.0 255.0,798.6 256.0,796.4 257.0,794.2 258.0,789.8 259.0,785.4 260.0,783.2 261.0,781.0 262.0,776.6 263.0,776.6 264.0,774.4 265.0,770.0 266.0,770.0 267.0,767.8 268.0,765.6 269.0,763.4 270.0,763.4 271.0,761.2 272.0,761.2 273.0,759.0 274.0,759.0 275.0,756.8 276.0,759.0 277.0,759.0 278.0,759.0 279.0,756.8 280.0,759.0 281.0,759.0 282.0,759.0 283.0,761.2 284.0,761.2 285.0,763.4 286.0,763.4 287.0,767.8 288.0,772.2 289.0,770.0 290.0,774.4 291.0,776.6 292.0,776.6 293.0,783.2 294.0,783.2 295.0,787.6 296.0,789.8 297.0,794.2 298.0,796.4 299.0,800.8 300.0,805.2 301.0,807.4 302.0,809.6 303.0,814.0 304.0,818.4 305.0,825.0 306.0,827.2 307.0,829.4 308.0,833.8 309.0,840.4 310.0,842.6 311.0,847.0 312.0,851.4 313.0,853.6 314.0,860.2 315.0,864.6 316.0,866.8 317.0,871.2 318.0,873.4 319.0,880.0 320.0,884.4 321.0,886.6 322.0,891.0 323.0,893.2 324.0,897.6 325.0,897.6 326.0,904.2 327.0,906.4 328.0,908.6 329.0,913.0 330.0,913.0 331.0,917.4 332.0,917.4 333.0,919.6 334.0,921.8 335.0,924.0 336.0,926.2 337.0,926.2 338.0,930.6 339.0,928.4 340.0,930.6 341.0,932.8 342.0,930.6 343.0,932.8 344.0,932.8 345.0,930.6 346.0,935.0 347.0,930.6 348.0,930.6 349.0,930.6 350.0,928.4 351.0,930.6 352.0,928.4 353.0,924.0 354.0,924.0 355.0,919.6 356.0,917.4 357.0,917.4 358.0,917.4 359.0,913.0 360.0,908.6 361.0,906.4 362.0,904.2 363.0,899.8 364.0,897.6 365.0,895.4 366.0,893.2 367.0,886.6 368.0,884.4 369.0,880.0 370.0,877.8 371.0,871.2 372.0,869.0 373.0,864.6 374.0,860.2 375.0,855.8 376.0,853.6 377.0,849.2 378.0,842.6 379.0,838.2 380.0,836.0 381.0,831.6 382.0,827.2 383.0,822.8 384.0,820.6 385.0,816.2 386.0,811.8 387.0,807.4 388.0,805.2 389.0,800.8 390.0,798.6 391.0,794.2 392.0,789.8 393.0,787.6 394.0,783.2 395.0,783.2 396.0,778.8 397.0,778.8 398.0,774.4 399.0,774.4 400.0,770.0 401.0,767.8 402.0,763.4 403.0,763.4 404.0,763.4 405.0,761.2 406.0,759.0 407.0,759.0 408.0,759.0 409.0,756.8 410.0,759.0 411.0,756.8 412.0,756.8 413.0,756.8 414.0,759.0 415.0,759.0 416.0,761.2 417.0,761.2 418.0,763.4 419.0,763.4 420.0,765.6 421.0,767.8 422.0,767.8 423.0,767.8 424.0,774.4 425.0,774.4 426.0,776.6 427.0,778.8 428.0,783.2 429.0,785.4 430.0,789.8 431.0,792.0 432.0,794.2 433.0,798.6 434.0,800.8 435.0,805.2 436.0,807.4 437.0,811.8 438.0,818.4 439.0,822.8 440.0,827.2 441.0,829.4 442.0,831.6 443.0,836.0 444.0,842.6 445.0,844.8 446.0,849.2 447.0,853.6 448.0,858.0 449.0,860.2 450.0,866.8 451.0,869.0 452.0,871.2 453.0,877.8 454.0,880.0 455.0,886.6 456.0,888.8 457.0,891.0 458.0,893.2 459.0,897.6 460.0,899.8 461.0,904.2 462.0,906.4 463.0,910.8 464.0,913.0 465.0,917.4 466.0,917.4 467.0,919.6 468.0,921.8 469.0,926.2 470.0,926.2 471.0,926.2 472.0,930.6 473.0,930.6 474.0,930.6 475.0,932.8 476.0,932.8 477.0,932.8 478.0,932.8 479.0,932.8 480.0,932.8 481.0,930.6 482.0,932.8 483.0,930.6 484.0,930.6 485.0,928.4 486.0,926.2 487.0,924.0 488.0,924.0 489.0,921.8 490.0,919.6 491.0,917.4 492.0,915.2 493.0,913.0 494.0,910.8 495.0,906.4 496.0,906.4 497.0,904.2 498.0,902.0 499.0,895.4 500.0,891.0 501.0,891.0 502.0,886.6 503.0,882.2 504.0,877.8 505.0,873.4 506.0,871.2 507.0,864.6 508.0,862.4 509.0,858.0 510.0,853.6 511.0,851.4 512.0,847.0 513.0,842.6 514.0,838.2 515.0,833.8 516.0,829.4 517.0,827.2 518.0,820.6 519.0,818.4 520.0,816.2 521.0,811.8 522.0,807.4 523.0,803.0 524.0,800.8 525.0,794.2 526.0,794.2 527.0,789.8 528.0,787.6 529.0,783.2 530.0,781.0 531.0,776.6 532.0,776.6 533.0,772.2 534.0,772.2 535.0,767.8 536.0,767.8 537.0,765.6 538.0,761.2 539.0,761.2 540.0,761.2 541.0,756.8 542.0,759.0 543.0,756.8 544.0,759.0 545.0,756.8 546.0,759.0 547.0,759.0 548.0,759.0 549.0,756.8 550.0,761.2 551.0,761.2 552.0,761.2 553.0,763.4 554.0,763.4 555.0,763.4 556.0,767.8 557.0,770.0 558.0,772.2 559.0,776.6 560.0,776.6 561.0,778.8 562.0,781.0 563.0,785.4 564.0,787.6 565.0,789.8 566.0,794.2 567.0,796.4 568.0,798.6 569.0,803.0 570.0,807.4 571.0,811.8 572.0,816.2 573.0,818.4 574.0,822.8 575.0,827.2 576.0,831.6 577.0,833.8 578.0,838.2 579.0,844.8 580.0,847.0 581.0,849.2 582.0,853.6 583.0,858.0 584.0,862.4 585.0,866.8 586.0,871.2 587.0,875.6 588.0,880.0 589.0,884.4 590.0,886.6 591.0,888.8 592.0,893.2 593.0,897.6 594.0,899.8 595.0,902.0 596.0,906.4 597.0,908.6 598.0,910.8 599.0,915.2 600.0,917.4 601.0,917.4 602.0,921.8 603.0,921.8 604.0,924.0 605.0,926.2 606.0,928.4 607.0,928.4 608.0,930.6 609.0,930.6 610.0,930.6 611.0,930.6 612.0,932.8 613.0,932.8 614.0,930.6 615.0,932.8 616.0,932.8 617.0,930.6 618.0,928.4 619.0,928.4 620.0,928.4 621.0,926.2 622.0,924.0 623.0,924.0 624.0,921.8 625.0,919.6 626.0,915.2 627.0,913.0 628.0,910.8 629.0,908.6 630.0,906.4 631.0,904.2 632.0,899.8 633.0,897.6 634.0,895.4 635.0,891.0 636.0,888.8 637.0,886.6 638.0,880.0 639.0,875.6 640.0,871.2 641.0,869.0 642.0,862.4 643.0,860.2 644.0,855.8 645.0,851.4 646.0,849.2 647.0,842.6 648.0,838.2 649.0,833.8 650.0,831.6 651.0,829.4 652.0,825.0 653.0,818.4 654.0,818.4 655.0,814.0 656.0,809.6 657.0,807.4 658.0,800.8 659.0,798.6 660.0,796.4 661.0,792.0 662.0,787.6 663.0,785.4 664.0,781.0 665.0,778.8 666.0,776.6 667.0,774.4 668.0,772.2 669.0,770.0 670.0,767.8 671.0,765.6 672.0,763.4 673.0,763.4 674.0,763.4 675.0,761.2 676.0,761.2 677.0,759.0 678.0,759.0 679.0,756.8 680.0,759.0 681.0,759.0 682.0,759.0 683.0,759.0 684.0,756.8 685.0,761.2 686.0,761.2 687.0,761.2 688.0,763.4 689.0,763.4 690.0,767.8 691.0,767.8 692.0,772.2 693.0,772.2 694.0,774.4 695.0,778.8 696.0,778.8 697.0,783.2 698.0,787.6 699.0,787.6 700.0,789.8 701.0,796.4 702.0,796.4 703.0,803.0 704.0,807.4 705.0,807.4 706.0,811.8 707.0,818.4 708.0,820.6 709.0,822.8 710.0,829.4 711.0,831.6 712.0,838.2 713.0,840.4 714.0,847.0 715.0,849.2 716.0,851.4 717.0,858.0 718.0,862.4 719.0,864.6 720.0,866.8 721.0,873.4 722.0,877.8 723.0,880.0 724.0,886.6 725.0,886.6 726.0,893.2 727.0,895.4 728.0,899.8 729.0,902.0 730.0,904.2 731.0,906.4 732.0,913.0 733.0,913.0 734.0,913.0 735.0,919.6 736.0,919.6 737.0,921.8 738.0,924.0 739.0,926.2 740.0,926.2 741.0,926.2 742.0,930.6 743.0,928.4 744.0,932.8 745.0,930.6 746.0,930.6 747.0,932.8 748.0,932.8 749.0,932.8 750.0,932.8 751.0,930.6 752.0,930.6 753.0,930.6 754.0,928.4 755.0,928.4 756.0,926.2 757.0,924.0 758.0,924.0 759.0,919.6 760.0,919.6 761.0,915.2 762.0,913.0 763.0,910.8 764.0,906.4 765.0,904.2 766.0,902.0 767.0,899.8 768.0,897.6 769.0,893.2 770.0,888.8 771.0,886.6 772.0,880.0 773.0,877.8 774.0,875.6 775.0,869.0 776.0,864.6 777.0,862.4 778.0,860.2 779.0,855.8 780.0,851.4 781.0,847.0 782.0,840.4 783.0,838.2 784.0,833.8 785.0,829.4 786.0,825.0 787.0,822.8 788.0,818.4 789.0,816.2 790.0,814.0 791.0,807.4 792.0,803.0 793.0,798.6 794.0,794.2 795.0,792.0 796.0,789.8 797.0,787.6 798.0,783.2 799.0,781.0 800.0,778.8 801.0,774.4 802.0,772.2 803.0,772.2 804.0,767.8 805.0,765.6 806.0,763.4 807.0,765.6 808.0,761.2 809.0,761.2 810.0,759.0 811.0,759.0 812.0,756.8 813.0,756.8 814.0,759.0 815.0,759.0 816.0,759.0 817.0,756.8 818.0,756.8 819.0,761.2 820.0,761.2 821.0,763.4 822.0,763.4 823.0,761.2 824.0,765.6 825.0,767.8 826.0,767.8 827.0,772.2 828.0,774.4 829.0,776.6 830.0,776.6 831.0,781.0 832.0,783.2 833.0,789.8 834.0,789.8 835.0,792.0 836.0,796.4 837.0,798.6 838.0,805.2 839.0,807.4 840.0,811.8 841.0,816.2 842.0,820.6 843.0,822.8 844.0,827.2 845.0,831.6 846.0,836.0 847.0,838.2 848.0,842.6 849.0,847.0 850.0,851.4 851.0,853.6 852.0,862.4 853.0,864.6 854.0,866.8 855.0,871.2 856.0,875.6 857.0,880.0 858.0,882.2 859.0,888.8 860.0,888.8 861.0,893.2 862.0,897.6 863.0,902.0 864.0,902.0 865.0,906.4 866.0,908.6 867.0,908.6 868.0,915.2 869.0,915.2 870.0,919.6 871.0,921.8 872.0,921.8 873.0,924.0 874.0,926.2 875.0,926.2 876.0,930.6 877.0,930.6 878.0,932.8 879.0,930.6 880.0,932.8 881.0,932.8 882.0,932.8 883.0,932.8 884.0,930.6 885.0,930.6 886.0,930.6 887.0,928.4 888.0,928.4 889.0,928.4 890.0,928.4 891.0,926.2 892.0,921.8 893.0,921.8 894.0,921.8 895.0,917.4 896.0,915.2 897.0,910.8 898.0,910.8 899.0,906.4 900.0,902.0 901.0,902.0 902.0,899.8 903.0,893.2 904.0,893.2 905.0,886.6 906.0,884.4 907.0,880.0 908.0,875.6 909.0,871.2 910.0,869.0 911.0,862.4 912.0,860.2 913.0,855.8 914.0,851.4 915.0,849.2 916.0,847.0 917.0,840.4 918.0,836.0 919.0,831.6 920.0,829.4 921.0,825.0 922.0,820.6 923.0,816.2 924.0,811.8 925.0,809.6 926.0,807.4 927.0,800.8 928.0,796.4 929.0,792.0 930.0,792.0 931.0,787.6 932.0,783.2 933.0,783.2 934.0,778.8 935.0,774.4 936.0,774.4 937.0,774.4 938.0,770.0 939.0,767.8 940.0,765.6 941.0,765.6 942.0,763.4 943.0,763.4 944.0,761.2 945.0,759.0 946.0,759.0 947.0,759.0 948.0,756.8 949.0,759.0 950.0,756.8 951.0,759.0 952.0,759.0 953.0,756.8 954.0,759.0 955.0,761.2 956.0,763.4 957.0,763.4 958.0,763.4 959.0,767.8 960.0,767.8 961.0,770.0 962.0,770.0 963.0,774.4 964.0,778.8 965.0,778.8 966.0,783.2 967.0,785.4 968.0,787.6 969.0,792.0 970.0,792.0 971.0,796.4 972.0,803.0 973.0,805.2 974.0,809.6 975.0,814.0 976.0,816.2 977.0,820.6 978.0,822.8 979.0,829.4 980.0,831.6 981.0,836.0 982.0,840.4 983.0,844.8 984.0,849.2 985.0,851.4 986.0,858.0 987.0,864.6 988.0,864.6 989.0,869.0 990.0,873.4 991.0,877.8 992.0,882.2 993.0,884.4 994.0,888.8 995.0,891.0 996.0,895.4 997.0,899.8 998.0,902.0 999.0,902.0 1000.0,908.6 1001.0,910.8 1002.0,913.0 1003.0,915.2 1004.0,919.6 1005.0,919.6 1006.0,921.8 1007.0,924.0 1008.0,926.2 1009.0,926.2 1010.0,930.6 1011.0,928.4 1012.0,932.8 1013.0,928.4 1014.0,932.8 1015.0,932.8 1016.0,935.0 1017.0,935.0 1018.0,930.6 1019.0,930.6 1020.0,930.6 1021.0,930.6 1022.0,930.6 1023.0,928.4 1024.0,926.2 1025.0,926.2 1026.0,926.2 1027.0,921.8 1028.0,919.6 1029.0,915.2 1030.0,917.4 1031.0,913.0 1032.0,910.8 1033.0,908.6 1034.0,904.2 1035.0,904.2 1036.0,899.8 1037.0,895.4 1038.0,893.2 1039.0,888.8 1040.0,884.4 1041.0,882.2 1042.0,877.8 1043.0,875.6 1044.0,869.0 1045.0,866.8 1046.0,862.4 1047.0,858.0 1048.0,853.6 1049.0,849.2 1050.0,847.0 1051.0,842.6 1052.0,836.0 1053.0,833.8 1054.0,831.6 1055.0,825.0 1056.0,822.8 1057.0,818.4 1058.0,816.2 1059.0,811.8 1060.0,805.2 1061.0,803.0 1062.0,800.8 1063.0,794.2 1064.0,794.2 1065.0,789.8 1066.0,785.4 1067.0,783.2 1068.0,781.0 1069.0,778.8 1070.0,776.6 1071.0,770.0 1072.0,770.0 1073.0,770.0 1074.0,765.6 1075.0,763.4 1076.0,763.4 1077.0,763.4 1078.0,761.2 1079.0,761.2 1080.0,761.2 1081.0,759.0 1082.0,756.8 1083.0,756.8 1084.0,759.0 1085.0,756.8 1086.0,759.0 1087.0,759.0 1088.0,761.2 1089.0,761.2 1090.0,761.2 1091.0,763.4 1092.0,765.6 1093.0,765.6 1094.0,767.8 1095.0,770.0 1096.0,772.2 1097.0,772.2 1098.0,774.4 1099.0,778.8 1100.0,778.8 1101.0,785.4 1102.0,785.4 1103.0,789.8 1104.0,794.2 1105.0,796.4 1106.0,800.8 1107.0,803.0 1108.0,807.4 1109.0,811.8 1110.0,816.2 1111.0,818.4 1112.0,820.6 1113.0,827.2 1114.0,831.6 1115.0,836.0 1116.0,838.2 1117.0,844.8 1118.0,847.0 1119.0,851.4 1120.0,855.8 1121.0,860.2 1122.0,866.8 1123.0,866.8 1124.0,873.4 1125.0,875.6 1126.0,880.0 1127.0,882.2 1128.0,886.6 1129.0,888.8 1130.0,895.4 1131.0,897.6 1132.0,899.8 1133.0,904.2 1134.0,906.4 1135.0,908.6 1136.0,910.8 1137.0,915.2 1138.0,917.4 1139.0,919.6 1140.0,921.8 1141.0,924.0 1142.0,926.2 1143.0,926.2 1144.0,928.4 1145.0,928.4 1146.0,930.6 1147.0,930.6 1148.0,932.8 1149.0,932.8 1150.0,932.8 1151.0,932.8 1152.0,930.6 1153.0,930.6 1154.0,935.0 1155.0,930.6 1156.0,930.6 1157.0,928.4 1158.0,926.2 1159.0,928.4 1160.0,926.2 1161.0,924.0 1162.0,921.8 1163.0,919.6 1164.0,917.4 1165.0,915.2 1166.0,913.0 1167.0,910.8 1168.0,908.6 1169.0,904.2 1170.0,902.0 1171.0,897.6 1172.0,895.4 1173.0,891.0 1174.0,888.8 1175.0,884.4 1176.0,880.0 1177.0,877.8 1178.0,871.2 1179.0,866.8 1180.0,864.6 1181.0,860.2 1182.0,855.8 1183.0,851.4 1184.0,849.2 1185.0,844.8 1186.0,840.4 1187.0,833.8 1188.0,831.6 1189.0,827.2 1190.0,822.8 1191.0,820.6 1192.0,816.2 1193.0,811.8 1194.0,807.4 1195.0,805.2 1196.0,803.0 1197.0,796.4 1198.0,794.2 1199.0,789.8 1200.0,787.6 1201.0,783.2 1202.0,783.2 1203.0,781.0 1204.0,776.6 1205.0,774.4 1206.0,772.2 1207.0,770.0 1208.0,770.0 1209.0,765.6 1210.0,763.4 1211.0,763.4 1212.0,761.2 1213.0,761.2 1214.0,761.2 1215.0,756.8 1216.0,759.0 1217.0,759.0 1218.0,759.0 1219.0,756.8 1220.0,756.8 1221.0,759.0 1222.0,759.0 1223.0,761.2 1224.0,761.2 1225.0,761.2 1226.0,761.2 1227.0,765.6 1228.0,767.8 1229.0,767.8 1230.0,770.0 1231.0,772.2 1232.0,774.4 1233.0,778.8 1234.0,781.0 1235.0,783.2 1236.0,787.6 1237.0,787.6 1238.0,792.0 1239.0,796.4 1240.0,798.6 1241.0,800.8 1242.0,805.2 1243.0,809.6 1244.0,811.8 1245.0,816.2 1246.0,820.6 1247.0,825.0 1248.0,829.4 1249.0,831.6 1250.0,836.0 1251.0,842.6 1252.0,844.8 1253.0,849.2 1254.0,853.6 1255.0,855.8 1256.0,862.4 1257.0,862.4 1258.0,869.0 1259.0,873.4 1260.0,877.8 1261.0,882.2 1262.0,884.4 1263.0,888.8 1264.0,891.0 1265.0,897.6 1266.0,899.8 1267.0,902.0 1268.0,904.2 1269.0,906.4 1270.0,910.8 1271.0,913.0 1272.0,917.4 1273.0,915.2 1274.0,921.8 1275.0,921.8 1276.0,924.0 1277.0,924.0 1278.0,928.4 1279.0,930.6 1280.0,930.6 1281.0,930.6 1282.0,932.8 1283.0,930.6 1284.0,930.6 1285.0,932.8 1286.0,930.6 1287.0,932.8 1288.0,932.8 1289.0,932.8 1290.0,930.6 1291.0,930.6 1292.0,928.4 1293.0,926.2 1294.0,926.2 1295.0,924.0 1296.0,921.8 1297.0,919.6 1298.0,919.6 1299.0,915.2 1300.0,913.0 1301.0,913.0 1302.0,908.6 1303.0,904.2 1304.0,902.0 1305.0,899.8 1306.0,895.4 1307.0,893.2 1308.0,888.8 1309.0,886.6 1310.0,882.2 1311.0,875.6 1312.0,873.4 1313.0,871.2 1314.0,866.8 1315.0,862.4 1316.0,860.2 1317.0,855.8 1318.0,849.2 1319.0,849.2 1320.0,842.6 1321.0,838.2 1322.0,836.0 1323.0,831.6 1324.0,825.0 1325.0,820.6 1326.0,820.6 1327.0,816.2 1328.0,809.6 1329.0,807.4 1330.0,805.2 1331.0,800.8 1332.0,796.4 1333.0,792.0 1334.0,789.8 1335.0,785.4 1336.0,785.4 1337.0,781.0 1338.0,778.8 1339.0,776.6 1340.0,772.2 1341.0,772.2 1342.0,770.0 1343.0,765.6 1344.0,763.4 1345.0,763.4 1346.0,761.2 1347.0,761.2 1348.0,761.2 1349.0,759.0 1350.0,761.2 1351.0,756.8 1352.0,756.8 1353.0,759.0 1354.0,756.8 1355.0,756.8 1356.0,759.0 1357.0,759.0 1358.0,761.2 1359.0,763.4 1360.0,761.2 1361.0,765.6 1362.0,765.6 1363.0,765.6 1364.0,772.2 1365.0,772.2 1366.0,774.4 1367.0,776.6 1368.0,778.8 1369.0,781.0 1370.0,785.4 1371.0,785.4 1372.0,787.6" fill="none" stroke="#00ff00" stroke-width="1.5"/>
<polyline points="31.0,686.0 31.4,632.0 31.8,690.0 32.2,666.0 32.6,680.0 33.0,668.0 33.4,666.0 33.8,736.0 34.2,632.0 34.6,612.0 35.0,652.0 35.4,682.0 35.8,682.0 36.2,660.0 36.6,644.0 37.0,646.0 37.4,702.0 37.8,644.0 38.2,660.0 38.6,628.0 39.0,678.0 39.4,662.0 39.8,630.0 40.2,684.0 40.6,650.0 41.0,648.0 41.4,670.0 41.8,692.0 42.2,720.0 42.6,678.0 43.0,728.0 43.4,680.0 43.8,712.0 44.2,660.0 44.6,712.0 45.0,686.0 45.4,642.0 45.8,700.0 46.2,718.0 46.6,662.0 47.0,684.0 47.4,648.0 47.8,682.0 48.2,658.0 48.6,690.0 49.0,646.0 49.4,616.0 49.8,644.0 50.2,664.0 50.6,698.0 51.0,638.0 51.4,626.0 51.8,626.0 52.2,690.0 52.6,680.0 53.0,646.0 53.4,672.0 53.8,628.0 54.2,642.0 54.6,668.0 55.0,674.0 55.4,636.0 55.8,658.0 56.2,676.0 56.6,656.0 57.0,674.0 57.4,676.0 57.8,704.0 58.2,650.0 58.6,590.0 59.0,702.0 59.4,620.0 59.8,674.0 60.2,612.0 60.6,650.0 61.0,696.0 61.4,666.0 61.8,644.0 62.2,622.0 62.6,690.0 63.0,654.0 63.4,650.0 63.8,638.0 64.2,648.0 64.6,682.0 65.0,682.0 65.4,656.0 65.8,670.0 66.2,648.0 66.6,636.0 67.0,616.0 67.4,666.0 67.8,642.0 68.2,670.0 68.6,668.0 69.0,678.0 69.4,650.0 69.8,662.0 70.2,690.0 70.6,632.0 71.0,612.0 71.4,674.0 71.8,664.0 72.2,692.0 72.6,694.0 73.0,662.0 73.4,664.0 73.8,634.0 74.2,618.0 74.6,682.0 75.0,616.0 75.4,642.0 75.8,664.0 76.2,660.0 76.6,634.0 77.0,670.0 77.4,652.0 77.8,638.0 78.2,614.0 78.6,646.0 79.0,610.0 79.4,684.0 79.8,666.0 80.2,628.0 80.6,658.0 81.0,626.0 81.4,608.0 81.8,674.0 82.2,614.0 82.6,624.0 83.0,656.0 83.4,660.0 83.8,630.0 84.2,624.0 84.6,606.0 85.0,624.0 85.4,630.0 85.8,618.0 86.2,638.0 86.6,656.0 87.0,534.0 87.4,594.0 87.8,608.0 88.2,622.0 88.6,642.0 89.0,606.0 89.4,636.0 89.8,600.0 90.2,616.0 90.6,606.0 91.0,636.0 91.4,654.0 91.8,614.0 92.2,614.0 92.6,664.0 93.0,606.0 93.4,598.0 93.8,672.0 94.2,650.0 94.6,670.0 95.0,650.0 95.4,662.0 95.8,636.0 96.2,594.0 96.6,634.0 97.0,654.0 97.4,666.0 97.8,592.0 98.2,636.0 98.6,612.0 99.0,658.0 99.4,690.0 99.8,644.0 100.2,638.0 100.6,616.0 101.0,664.0 101.4,696.0 101.8,640.0 102.2,682.0 102.6,652.0 103.0,636.0 103.4,660.0 103.8,646.0 104.2,604.0 104.6,648.0 105.0,660.0 105.4,664.0 105.8,622.0 106.2,640.0 106.6,658.0 107.0,662.0 107.4,624.0 107.8,674.0 108.2,642.0 108.6,646.0 109.0,616.0 109.4,644.0 109.8,636.0 110.2,634.0 110.6,630.0 111.0,644.0 111.4,622.0 111.8,628.0 112.2,636.0 112.6,592.0 113.0,638.0 113.4,646.0 113.8,642.0 114.2,636.0 114.6,622.0 115.0,652.0 115.4,624.0 115.8,642.0 116.2,658.0 116.6,618.0 117.0,620.0 117.4,638.0 117.8,644.0 118.2,650.0 118.6,666.0 119.0,642.0 119.4,636.0 119.8,620.0 120.2,650.0 120.6,608.0 121.0,640.0 121.4,634.0 121.8,670.0 122.2,634.0 122.6,640.0 123.0,630.0 123.4,624.0 123.8,634.0 124.2,654.0 124.6,668.0 125.0,660.0 125.4,646.0 125.8,642.0 126.2,698.0 126.6,642.0 127.0,664.0 127.4,648.0 127.8,634.0 128.2,638.0 128.6,674.0 129.0,676.0 129.4,664.0 129.8,660.0 130.2,664.0 130.6,628.0 131.0,642.0 131.4,672.0 131.8,624.0 132.2,614.0 132.6,632.0 133.0,624.0 133.4,638.0 133.8,644.0 134.2,654.0 134.6,644.0 135.0,636.0 135.4,638.0 135.8,602.0 136.2,636.0 136.6,652.0 137.0,666.0 137.4,648.0 137.8,664.0 138.2,700.0 138.6,700.0 139.0,664.0 139.4,670.0 139.8,596.0 140.2,632.0 140.6,634.0 141.0,660.0 141.4,664.0 141.8,696.0 142.2,680.0 142.6,652.0 143.0,636.0 143.4,632.0 143.8,622.0 144.2,684.0 144.6,652.0 145.0,670.0 145.4,672.0 145.8,688.0 146.2,662.0 146.6,634.0 147.0,636.0 147.4,672.0 147.8,660.0 148.2,650.0 148.6,646.0 149.0,612.0 149.4,658.0 149.8,616.0 150.2,660.0 150.6,626.0 151.0,662.0 151.4,648.0 151.8,672.0 152.2,612.0 152.6,664.0 153.0,684.0 153.4,674.0 153.8,640.0 154.2,640.0 154.6,662.0 155.0,636.0 155.4,634.0 155.8,630.0 156.2,690.0 156.6,662.0 157.0,642.0 157.4,660.0 157.8,664.0 158.2,632.0 158.6,682.0 159.0,686.0 159.4,686.0 159.8,742.0 160.2,656.0 160.6,650.0 161.0,650.0 161.4,658.0 161.8,634.0 162.2,696.0 162.6,690.0 163.0,660.0 163.4,714.0 163.8,654.0 164.2,682.0 164.6,666.0 165.0,702.0 165.4,694.0 165.8,676.0 166.2,654.0 166.6,680.0 167.0,660.0 167.4,648.0 167.8,658.0 168.2,654.0 168.6,670.0 169.0,676.0 169.4,660.0 169.8,640.0 170.2,622.0 170.6,668.0 171.0,662.0 171.4,686.0 171.8,686.0 172.2,662.0 172.6,624.0 173.0,676.0 173.4,668.0 173.8,666.0 174.2,700.0 174.6,684.0 175.0,666.0 175.4,654.0 175.8,682.0 176.2,722.0 176.6,760.0 177.0,692.0 177.4,690.0 177.8,714.0 178.2,700.0 178.6,698.0 179.0,664.0 179.4,680.0 179.8,680.0 180.2,716.0 180.6,640.0 181.0,646.0 181.4,686.0 181.8,698.0 182.2,646.0 182.6,680.0 183.0,666.0 183.4,668.0 183.8,636.0 184.2,670.0 184.6,646.0 185.0,702.0 185.4,676.0 185.8,644.0 186.2,704.0 186.6,592.0 187.0,678.0 187.4,662.0 187.8,658.0 188.2,714.0 188.6,622.0 189.0,654.0 189.4,674.0 189.8,706.0 190.2,558.0 190.6,674.0 191.0,622.0 191.4,636.0 191.8,618.0 192.2,638.0 192.6,674.0 193.0,682.0 193.4,646.0 193.8,642.0 194.2,692.0 194.6,642.0 195.0,704.0 195.4,662.0 195.8,684.0 196.2,680.0 196.6,640.0 197.0,694.0 197.4,684.0 197.8,636.0 198.2,664.0 198.6,652.0 199.0,648.0 199.4,642.0 199.8,672.0 200.2,620.0 200.6,662.0 201.0,640.0 201.4,664.0 201.8,658.0 202.2,640.0 202.6,660.0 203.0,594.0 203.4,660.0 203.8,644.0 204.2,666.0 204.6,670.0 205.0,632.0 205.4,642.0 205.8,632.0 206.2,680.0 206.6,634.0 207.0,662.0 207.4,682.0 207.8,636.0 208.2,664.0 208.6,638.0 209.0,634.0 209.4,592.0 209.8,616.0 210.2,624.0 210.6,640.0 211.0,626.0 211.4,628.0 211.8,544.0 212.2,644.0 212.6,618.0 213.0,598.0 213.4,660.0 213.8,638.0 214.2,620.0 214.6,612.0 215.0,654.0 215.4,680.0 215.8,638.0 216.2,638.0 216.6,610.0 217.0,662.0 217.4,606.0 217.8,648.0 218.2,624.0 218.6,624.0 219.0,636.0 219.4,644.0 219.8,626.0 220.2,642.0 220.6,640.0 221.0,620.0 221.4,620.0 221.8,658.0 222.2,628.0 222.6,644.0 223.0,618.0 223.4,654.0 223.8,618.0 224.2,608.0 224.6,676.0 225.0,644.0 225.4,642.0 225.8,610.0 226.2,666.0 226.6,622.0 227.0,682.0 227.4,680.0 227.8,680.0 228.2,638.0 228.6,642.0 229.0,688.0 229.4,610.0 229.8,628.0 230.2,638.0 230.6,664.0 231.0,626.0 231.4,630.0 231.8,634.0 232.2,626.0 232.6,644.0 233.0,632.0 233.4,630.0 233.8,648.0 234.2,664.0 234.6,618.0 235.0,638.0 235.4,630.0 235.8,678.0 236.2,666.0 236.6,618.0 237.0,642.0 237.4,610.0 237.8,644.0 238.2,682.0 238.6,626.0 239.0,638.0 239.4,648.0 239.8,656.0 240.2,602.0 240.6,672.0 241.0,644.0 241.4,646.0 241.8,636.0 242.2,604.0 242.6,616.0 243.0,620.0 243.4,630.0 243.8,642.0 244.2,596.0 244.6,632.0 245.0,604.0 245.4,682.0 245.8,654.0 246.2,644.0 246.6,658.0 247.0,680.0 247.4,688.0 247.8,660.0 248.2,644.0 248.6,646.0 249.0,620.0 249.4,602.0 249.8,598.0 250.2,606.0 250.6,606.0 251.0,638.0 251.4,648.0 251.8,566.0 252.2,634.0 252.6,650.0 253.0,676.0 253.4,662.0 253.8,642.0 254.2,706.0 254.6,614.0 255.0,714.0 255.4,628.0 255.8,664.0 256.2,658.0 256.6,644.0 257.0,644.0 257.4,650.0 257.8,638.0 258.2,616.0 258.6,638.0 259.0,638.0 259.4,652.0 259.8,674.0 260.2,674.0 260.6,734.0 261.0,600.0 261.4,678.0 261.8,658.0 262.2,684.0 262.6,606.0 263.0,632.0 263.4,624.0 263.8,564.0 264.2,638.0 264.6,636.0 265.0,672.0 265.4,684.0 265.8,694.0 266.2,640.0 266.6,640.0 267.0,654.0 267.4,664.0 267.8,670.0 268.2,638.0 268.6,640.0 269.0,630.0 269.4,678.0 269.8,708.0 270.2,648.0 270.6,638.0 271.0,686.0 271.4,634.0 271.8,662.0 272.2,672.0 272.6,658.0 273.0,650.0 273.4,620.0 273.8,672.0 274.2,692.0 274.6,646.0 275.0,686.0 275.4,618.0 275.8,662.0 276.2,654.0 276.6,706.0 277.0,672.0 277.4,620.0 277.8,684.0 278.2,676.0 278.6,696.0 279.0,680.0 279.4,678.0 279.8,650.0 280.2,668.0 280.6,632.0 281.0,650.0 281.4,636.0 281.8,630.0 282.2,638.0 282.6,656.0 283.0,658.0 283.4,678.0 283.8,618.0 284.2,656.0 284.6,630.0 285.0,666.0 285.4,674.0 285.8,648.0 286.2,672.0 286.6,688.0 287.0,680.0 287.4,676.0 287.8,682.0 288.2,690.0 288.6,698.0 289.0,684.0 289.4,686.0 289.8,686.0 290.2,682.0 290.6,668.0 291.0,678.0 291.4,704.0 291.8,690.0 292.2,688.0 292.6,680.0 293.0,674.0 293.4,654.0 293.8,634.0 294.2,658.0 294.6,638.0 295.0,666.0 295.4,686.0 295.8,694.0 296.2,692.0 296.6,650.0 297.0,712.0 297.4,682.0 297.8,678.0 298.2,692.0 298.6,662.0 299.0,680.0 299.4,632.0 299.8,630.0 300.2,682.0 300.6,666.0 301.0,668.0 301.4,650.0 301.8,666.0 302.2,640.0 302.6,676.0 303.0,676.0 303.4,616.0 303.8,650.0 304.2,636.0 304.6,682.0 305.0,654.0 305.4,658.0 305.8,654.0 306.2,680.0 306.6,658.0 307.0,714.0 307.4,656.0 307.8,686.0 308.2,702.0 308.6,696.0 309.0,652.0 309.4,648.0 309.8,640.0 310.2,654.0 310.6,624.0 311.0,628.0 311.4,684.0 311.8,660.0 312.2,658.0 312.6,666.0 313.0,652.0 313.4,666.0 313.8,682.0 314.2,654.0 314.6,676.0 315.0,634.0 315.4,638.0 315.8,652.0 316.2,676.0 316.6,682.0 317.0,672.0 317.4,762.0 317.8,638.0 318.2,646.0 318.6,692.0 319.0,666.0 319.4,616.0 319.8,664.0 320.2,672.0 320.6,674.0 321.0,656.0 321.4,652.0 321.8,622.0 322.2,650.0 322.6,636.0 323.0,676.0 323.4,654.0 323.8,686.0 324.2,648.0 324.6,658.0 325.0,636.0 325.4,674.0 325.8,620.0 326.2,672.0 326.6,610.0 327.0,654.0 327.4,646.0 327.8,694.0 328.2,636.0 328.6,694.0 329.0,616.0 329.4,686.0 329.8,774.0 330.2,620.0 330.6,658.0 331.0,658.0 331.4,670.0 331.8,636.0 332.2,664.0 332.6,630.0 333.0,654.0 333.4,662.0 333.8,664.0 334.2,666.0 334.6,674.0 335.0,702.0 335.4,626.0 335.8,718.0 336.2,674.0 336.6,640.0 337.0,638.0 337.4,650.0 337.8,628.0 338.2,652.0 338.6,632.0 339.0,700.0 339.4,668.0 339.8,676.0 340.2,658.0 340.6,686.0 341.0,660.0 341.4,692.0 341.8,668.0 342.2,642.0 342.6,638.0 343.0,678.0 343.4,670.0 343.8,680.0 344.2,656.0 344.6,640.0 345.0,532.0 345.4,672.0 345.8,632.0 346.2,630.0 346.6,666.0 347.0,636.0 347.4,652.0 347.8,624.0 348.2,676.0 348.6,610.0 349.0,606.0 349.4,616.0 349.8,702.0 350.2,598.0 350.6,668.0 351.0,662.0 351.4,672.0 351.8,614.0 352.2,642.0 352.6,642.0 353.0,660.0 353.4,680.0 353.8,604.0 354.2,632.0 354.6,650.0 355.0,626.0 355.4,646.0 355.8,626.0 356.2,684.0 356.6,640.0 357.0,618.0 357.4,668.0 357.8,654.0 358.2,624.0 358.6,634.0 359.0,732.0 359.4,646.0 359.8,658.0 360.2,652.0 360.6,604.0 361.0,634.0 361.4,652.0 361.8,636.0 362.2,608.0 362.6,628.0 363.0,650.0 363.4,612.0 363.8,594.0 364.2,648.0 364.6,628.0 365.0,640.0 365.4,582.0 365.8,644.0 366.2,618.0 366.6,696.0 367.0,608.0 367.4,642.0 367.8,586.0 368.2,624.0 368.6,604.0 369.0,638.0 369.4,634.0 369.8,628.0 370.2,668.0 370.6,592.0 371.0,644.0 371.4,624.0 371.8,656.0 372.2,650.0 372.6,624.0 373.0,616.0 373.4,686.0 373.8,684.0 374.2,640.0 374.6,666.0 375.0,654.0 375.4,624.0 375.8,612.0 376.2,654.0 376.6,642.0 377.0,670.0 377.4,640.0 377.8,636.0 378.2,648.0 378.6,644.0 379.0,642.0 379.4,664.0 379.8,620.0 380.2,648.0 380.6,642.0 381.0,668.0 381.4,626.0 381.8,674.0 382.2,616.0 382.6,632.0 383.0,630.0 383.4,676.0 383.8,644.0 384.2,660.0 384.6,630.0 385.0,668.0 385.4,592.0 385.8,666.0 386.2,638.0 386.6,664.0 387.0,640.0 387.4,612.0 387.8,632.0 388.2,622.0 388.6,602.0 389.0,640.0 389.4,632.0 389.8,654.0 390.2,636.0 390.6,666.0 391.0,634.0 391.4,640.0 391.8,650.0 392.2,638.0 392.6,632.0 393.0,632.0 393.4,638.0 393.8,676.0 394.2,578.0 394.6,628.0 395.0,668.0 395.4,662.0 395.8,648.0 396.2,646.0 396.6,608.0 397.0,646.0 397.4,612.0 397.8,632.0 398.2,640.0 398.6,678.0 399.0,672.0 399.4,682.0 399.8,614.0 400.2,684.0 400.6,656.0 401.0,620.0 401.4,630.0 401.8,674.0 402.2,620.0 402.6,640.0 403.0,620.0 403.4,654.0 403.8,632.0 404.2,668.0 404.6,650.0 405.0,648.0 405.4,646.0 405.8,670.0 406.2,604.0 406.6,676.0 407.0,636.0 407.4,626.0 407.8,638.0 408.2,706.0 408.6,654.0 409.0,662.0 409.4,692.0 409.8,666.0 410.2,644.0 410.6,664.0 411.0,656.0 411.4,662.0 411.8,672.0 412.2,668.0 412.6,680.0 413.0,678.0 413.4,672.0 413.8,666.0 414.2,704.0 414.6,620.0 415.0,702.0 415.4,688.0 415.8,678.0 416.2,712.0 416.6,676.0 417.0,696.0 417.4,658.0 417.8,708.0 418.2,656.0 418.6,708.0 419.0,636.0 419.4,644.0 419.8,650.0 420.2,662.0 420.6,686.0 421.0,676.0 421.4,656.0 421.8,612.0 422.2,646.0 422.6,610.0 423.0,658.0 423.4,630.0 423.8,674.0 424.2,642.0 424.6,622.0 425.0,652.0 425.4,660.0 425.8,668.0 426.2,632.0 426.6,680.0 427.0,652.0 427.4,678.0 427.8,656.0 428.2,648.0 428.6,710.0 429.0,656.0 429.4,722.0 429.8,688.0 430.2,648.0 430.6,648.0 431.0,670.0 431.4,696.0 431.8,592.0 432.2,700.0 432.6,790.0 433.0,690.0 433.4,680.0 433.8,690.0 434.2,694.0 434.6,690.0 435.0,642.0 435.4,662.0 435.8,652.0 436.2,668.0 436.6,668.0 437.0,700.0 437.4,690.0 437.8,698.0 438.2,680.0 438.6,690.0 439.0,686.0 439.4,694.0 439.8,736.0 440.2,694.0 440.6,696.0 441.0,678.0 441.4,690.0 441.8,710.0 442.2,720.0 442.6,724.0 443.0,714.0 443.4,708.0 443.8,688.0 444.2,700.0 444.6,708.0 445.0,672.0 445.4,698.0 445.8,704.0 446.2,670.0 446.6,646.0 447.0,664.0 447.4,668.0 447.8,654.0 448.2,738.0 448.6,684.0 449.0,674.0 449.4,620.0 449.8,628.0 450.2,620.0 450.6,672.0 451.0,650.0 451.4,652.0 451.8,678.0 452.2,648.0 452.6,666.0 453.0,674.0 453.4,666.0 453.8,684.0 454.2,690.0 454.6,676.0 455.0,700.0 455.4,696.0 455.8,676.0 456.2,690.0 456.6,660.0 457.0,578.0 457.4,620.0 457.8,672.0 458.2,634.0 458.6,668.0 459.0,628.0 459.4,670.0 459.8,688.0 460.2,652.0 460.6,672.0 461.0,628.0 461.4,660.0 461.8,658.0 462.2,658.0 462.6,656.0 463.0,644.0 463.4,606.0 463.8,654.0 464.2,686.0 464.6,650.0 465.0,646.0 465.4,638.0 465.8,654.0 466.2,624.0 466.6,626.0 467.0,646.0 467.4,638.0 467.8,652.0 468.2,646.0 468.6,632.0 469.0,626.0 469.4,638.0 469.8,658.0 470.2,640.0 470.6,664.0 471.0,630.0 471.4,648.0 471.8,646.0 472.2,578.0 472.6,670.0 473.0,638.0 473.4,642.0 473.8,632.0 474.2,636.0 474.6,652.0 475.0,678.0 475.4,618.0 475.8,662.0 476.2,666.0 476.6,672.0 477.0,648.0 477.4,680.0 477.8,672.0 478.2,638.0 478.6,672.0 479.0,652.0 479.4,684.0 479.8,648.0 480.2,758.0 480.6,660.0 481.0,648.0 481.4,650.0 481.8,674.0 482.2,622.0 482.6,644.0 483.0,660.0 483.4,672.0 483.8,638.0 484.2,662.0 484.6,632.0 485.0,636.0 485.4,632.0 485.8,640.0 486.2,652.0 486.6,622.0 487.0,604.0 487.4,642.0 487.8,626.0 488.2,642.0 488.6,672.0 489.0,624.0 489.4,546.0 489.8,632.0 490.2,604.0 490.6,624.0 491.0,614.0 491.4,608.0 491.8,648.0 492.2,616.0 492.6,652.0 493.0,594.0 493.4,634.0 493.8,630.0 494.2,638.0 494.6,678.0 495.0,650.0 495.4,602.0 495.8,608.0 496.2,672.0 496.6,622.0 497.0,636.0 497.4,630.0 497.8,618.0 498.2,646.0 498.6,626.0 499.0,636.0 499.4,598.0 499.8,614.0 500.2,634.0 500.6,630.0 501.0,664.0 501.4,650.0 501.8,664.0 502.2,648.0 502.6,654.0 503.0,610.0 503.4,626.0 503.8,632.0 504.2,666.0 504.6,626.0 505.0,666.0 505.4,624.0 505.8,656.0 506.2,668.0 506.6,652.0 507.0,634.0 507.4,658.0 507.8,674.0 508.2,654.0 508.6,640.0 509.0,636.0 509.4,660.0 509.8,654.0 510.2,638.0 510.6,674.0 511.0,716.0 511.4,646.0 511.8,692.0 512.2,684.0 512.6,692.0 513.0,674.0 513.4,654.0 513.8,666.0 514.2,644.0 514.6,646.0 515.0,670.0 515.4,684.0 515.8,676.0 516.2,654.0 516.6,650.0 517.0,650.0 517.4,642.0 517.8,630.0 518.2,636.0 518.6,646.0 519.0,632.0 519.4,626.0 519.8,610.0 520.2,598.0 520.6,638.0 521.0,606.0 521.4,638.0 521.8,604.0 522.2,650.0 522.6,666.0 523.0,630.0 523.4,636.0 523.8,614.0 524.2,606.0 524.6,624.0 525.0,600.0 525.4,614.0 525.8,620.0 526.2,622.0 526.6,634.0 527.0,680.0 527.4,662.0 527.8,664.0 528.2,610.0 528.6,652.0 529.0,642.0 529.4,640.0 529.8,658.0 530.2,634.0 530.6,680.0 531.0,680.0 531.4,668.0 531.8,634.0 532.2,676.0 532.6,648.0 533.0,656.0 533.4,630.0 533.8,646.0 534.2,630.0 534.6,646.0 535.0,646.0 535.4,634.0 535.8,642.0 536.2,620.0 536.6,646.0 537.0,698.0 537.4,634.0 537.8,664.0 538.2,620.0 538.6,682.0 539.0,658.0 539.4,654.0 539.8,636.0 540.2,692.0 540.6,628.0 541.0,654.0 541.4,656.0 541.8,642.0 542.2,664.0 542.6,646.0 543.0,664.0 543.4,668.0 543.8,652.0 544.2,640.0 544.6,638.0 545.0,684.0 545.4,632.0 545.8,618.0 546.2,638.0 546.6,578.0 547.0,636.0 547.4,658.0 547.8,680.0 548.2,656.0 548.6,636.0 549.0,624.0 549.4,626.0 549.8,618.0 550.2,652.0 550.6,630.0 551.0,634.0 551.4,640.0 551.8,632.0 552.2,628.0 552.6,634.0 553.0,654.0 553.4,686.0 553.8,660.0 554.2,634.0 554.6,676.0 555.0,696.0 555.4,664.0 555.8,632.0 556.2,652.0 556.6,686.0 557.0,660.0 557.4,666.0 557.8,676.0 558.2,668.0 558.6,670.0 559.0,654.0 559.4,658.0 559.8,640.0 560.2,648.0 560.6,650.0 561.0,642.0 561.4,720.0 561.8,686.0 562.2,664.0 562.6,696.0 563.0,626.0 563.4,672.0 563.8,698.0 564.2,694.0 564.6,662.0 565.0,694.0 565.4,708.0 565.8,674.0 566.2,662.0 566.6,710.0 567.0,704.0 567.4,672.0 567.8,656.0 568.2,678.0 568.6,682.0 569.0,670.0 569.4,670.0 569.8,678.0 570.2,656.0 570.6,682.0 571.0,676.0 571.4,674.0 571.8,648.0 572.2,684.0 572.6,688.0 573.0,664.0 573.4,726.0 573.8,640.0 574.2,690.0 574.6,676.0 575.0,658.0 575.4,672.0 575.8,660.0 576.2,700.0 576.6,774.0 577.0,676.0 577.4,680.0 577.8,656.0 578.2,628.0 578.6,662.0 579.0,684.0 579.4,692.0 579.8,708.0 580.2,674.0 580.6,668.0 581.0,706.0 581.4,656.0 581.8,666.0 582.2,682.0 582.6,682.0 583.0,672.0 583.4,670.0 583.8,666.0 584.2,642.0 584.6,674.0 585.0,660.0 585.4,668.0 585.8,668.0 586.2,638.0 586.6,556.0 587.0,648.0 587.4,744.0 587.8,686.0 588.2,620.0 588.6,640.0 589.0,688.0 589.4,662.0 589.8,652.0 590.2,688.0 590.6,656.0 591.0,658.0 591.4,682.0 591.8,642.0 592.2,640.0 592.6,676.0 593.0,650.0 593.4,624.0 593.8,648.0 594.2,606.0 594.6,660.0 595.0,612.0 595.4,614.0 595.8,634.0 596.2,654.0 596.6,618.0 597.0,632.0 597.4,638.0 597.8,668.0 598.2,676.0 598.6,610.0 599.0,668.0 599.4,652.0 599.8,690.0 600.2,626.0 600.6,656.0 601.0,660.0 601.4,678.0 601.8,624.0 602.2,670.0 602.6,668.0 603.0,670.0 603.4,650.0 603.8,570.0 604.2,616.0 604.6,656.0 605.0,654.0 605.4,648.0 605.8,674.0 606.2,646.0 606.6,664.0 607.0,618.0 607.4,636.0 607.8,660.0 608.2,694.0 608.6,682.0 609.0,686.0 609.4,672.0 609.8,662.0 610.2,652.0 610.6,636.0 611.0,654.0 611.4,646.0 611.8,642.0 612.2,644.0 612.6,634.0 613.0,650.0 613.4,628.0 613.8,648.0 614.2,648.0 614.6,610.0 615.0,656.0 615.4,660.0 615.8,614.0 616.2,668.0 616.6,674.0 617.0,704.0 617.4,636.0 617.8,662.0 618.2,642.0 618.6,646.0 619.0,662.0 619.4,642.0 619.8,642.0 620.2,600.0 620.6,628.0 621.0,640.0 621.4,678.0 621.8,626.0 622.2,660.0 622.6,672.0 623.0,638.0 623.4,610.0 623.8,604.0 624.2,646.0 624.6,634.0 625.0,638.0 625.4,628.0 625.8,618.0 626.2,632.0 626.6,634.0 627.0,668.0 627.4,656.0 627.8,646.0 628.2,622.0 628.6,634.0 629.0,656.0 629.4,638.0 629.8,616.0 630.2,622.0 630.6,626.0 631.0,644.0 631.4,650.0 631.8,628.0 632.2,622.0 632.6,720.0 633.0,636.0 633.4,652.0 633.8,618.0 634.2,716.0 634.6,654.0 635.0,644.0 635.4,654.0 635.8,648.0 636.2,652.0 636.6,606.0 637.0,640.0 637.4,642.0 637.8,672.0 638.2,644.0 638.6,626.0 639.0,636.0 639.4,650.0 639.8,600.0 640.2,668.0 640.6,654.0 641.0,630.0 641.4,612.0 641.8,654.0 642.2,644.0 642.6,634.0 643.0,588.0 643.4,624.0 643.8,638.0 644.2,604.0 644.6,614.0 645.0,616.0 645.4,684.0 645.8,648.0 646.2,650.0 646.6,632.0 647.0,630.0 647.4,560.0 647.8,646.0 648.2,636.0 648.6,626.0 649.0,658.0 649.4,648.0 649.8,628.0 650.2,660.0 650.6,664.0 651.0,644.0 651.4,632.0 651.8,620.0 652.2,574.0 652.6,626.0 653.0,628.0 653.4,550.0 653.8,644.0 654.2,600.0 654.6,654.0 655.0,646.0 655.4,626.0 655.8,618.0 656.2,646.0 656.6,652.0 657.0,638.0 657.4,658.0 657.8,642.0 658.2,652.0 658.6,654.0 659.0,656.0 659.4,672.0 659.8,692.0 660.2,658.0 660.6,652.0 661.0,658.0 661.4,690.0 661.8,624.0 662.2,624.0 662.6,674.0 663.0,640.0 663.4,672.0 663.8,658.0 664.2,656.0 664.6,672.0 665.0,674.0 665.4,662.0 665.8,646.0 666.2,660.0 666.6,668.0 667.0,686.0 667.4,638.0 667.8,612.0 668.2,608.0 668.6,618.0 669.0,654.0 669.4,612.0 669.8,660.0 670.2,654.0 670.6,608.0 671.0,634.0 671.4,606.0 671.8,600.0 672.2,620.0 672.6,664.0 673.0,634.0 673.4,680.0 673.8,624.0 674.2,622.0 674.6,622.0 675.0,632.0 675.4,650.0 675.8,658.0 676.2,654.0 676.6,700.0 677.0,672.0 677.4,626.0 677.8,666.0 678.2,666.0 678.6,636.0 679.0,694.0 679.4,608.0 679.8,664.0 680.2,662.0 680.6,632.0 681.0,624.0 681.4,652.0 681.8,640.0 682.2,600.0 682.6,644.0 683.0,636.0 683.4,634.0 683.8,678.0 684.2,658.0 684.6,640.0 685.0,640.0 685.4,654.0 685.8,656.0 686.2,602.0 686.6,662.0 687.0,672.0 687.4,610.0 687.8,606.0 688.2,646.0 688.6,660.0 689.0,660.0 689.4,624.0 689.8,644.0 690.2,630.0 690.6,648.0 691.0,648.0 691.4,678.0 691.8,660.0 692.2,664.0 692.6,688.0 693.0,634.0 693.4,640.0 693.8,674.0 694.2,676.0 694.6,654.0 695.0,694.0 695.4,678.0 695.8,694.0 696.2,692.0 696.6,692.0 697.0,672.0 697.4,688.0 697.8,642.0 698.2,684.0 698.6,676.0 699.0,662.0 699.4,684.0 699.8,710.0 700.2,702.0 700.6,682.0 701.0,704.0 701.4,660.0 701.8,662.0 702.2,646.0 702.6,676.0 703.0,678.0 703.4,636.0 703.8,684.0 704.2,636.0 704.6,630.0 705.0,646.0 705.4,612.0 705.8,678.0 706.2,622.0 706.6,658.0 707.0,590.0 707.4,658.0 707.8,624.0 708.2,630.0 708.6,654.0 709.0,640.0 709.4,638.0 709.8,614.0 710.2,620.0 710.6,666.0 711.0,656.0 711.4,652.0 711.8,638.0 712.2,570.0 712.6,598.0 713.0,628.0 713.4,636.0 713.8,660.0 714.2,638.0 714.6,654.0 715.0,610.0 715.4,636.0 715.8,640.0 716.2,610.0 716.6,650.0 717.0,698.0 717.4,648.0 717.8,686.0 718.2,700.0 718.6,644.0 719.0,616.0 719.4,680.0 719.8,682.0 720.2,668.0 720.6,652.0 721.0,634.0 721.4,696.0 721.8,672.0 722.2,640.0 722.6,694.0 723.0,642.0 723.4,662.0 723.8,644.0 724.2,678.0 724.6,680.0 725.0,708.0 725.4,624.0 725.8,652.0 726.2,668.0 726.6,684.0 727.0,704.0 727.4,700.0 727.8,672.0 728.2,718.0 728.6,684.0 729.0,680.0 729.4,696.0 729.8,678.0 730.2,698.0 730.6,654.0 731.0,654.0 731.4,634.0 731.8,628.0 732.2,658.0 732.6,668.0 733.0,658.0 733.4,630.0 733.8,698.0 734.2,672.0 734.6,654.0 735.0,686.0 735.4,682.0 735.8,694.0 736.2,658.0 736.6,686.0 737.0,674.0 737.4,668.0 737.8,642.0 738.2,692.0 738.6,640.0 739.0,620.0 739.4,672.0 739.8,664.0 740.2,702.0 740.6,684.0 741.0,644.0 741.4,618.0 741.8,644.0 742.2,648.0 742.6,690.0 743.0,670.0 743.4,632.0 743.8,636.0 744.2,650.0 744.6,668.0 745.0,672.0 745.4,614.0 745.8,672.0 746.2,662.0 746.6,624.0 747.0,624.0 747.4,646.0 747.8,634.0 748.2,664.0 748.6,632.0 749.0,622.0 749.4,642.0 749.8,646.0 750.2,658.0 750.6,654.0 751.0,656.0 751.4,642.0 751.8,620.0 752.2,636.0 752.6,644.0 753.0,688.0 753.4,644.0 753.8,658.0 754.2,602.0 754.6,654.0 755.0,612.0 755.4,596.0 755.8,632.0 756.2,650.0 756.6,666.0 757.0,658.0 757.4,624.0 757.8,600.0 758.2,658.0 758.6,650.0 759.0,604.0 759.4,662.0 759.8,638.0 760.2,632.0 760.6,610.0 761.0,626.0 761.4,660.0 761.8,648.0 762.2,624.0 762.6,628.0 763.0,648.0 763.4,662.0 763.8,688.0 764.2,636.0 764.6,670.0 765.0,646.0 765.4,658.0 765.8,614.0 766.2,640.0 766.6,656.0 767.0,598.0 767.4,662.0 767.8,580.0 768.2,634.0 768.6,634.0 769.0,620.0 769.4,610.0 769.8,630.0 770.2,620.0 770.6,624.0 771.0,644.0 771.4,606.0 771.8,614.0 772.2,620.0 772.6,638.0 773.0,616.0 773.4,602.0 773.8,578.0 774.2,636.0 774.6,612.0 775.0,560.0 775.4,620.0 775.8,626.0 776.2,668.0 776.6,608.0 777.0,624.0 777.4,612.0 777.8,620.0 778.2,664.0 778.6,628.0 779.0,678.0 779.4,648.0 779.8,654.0 780.2,598.0 780.6,646.0 781.0,650.0 781.4,634.0 781.8,640.0 782.2,634.0 782.6,670.0 783.0,636.0 783.4,628.0 783.8,624.0 784.2,672.0 784.6,616.0 785.0,586.0 785.4,628.0 785.8,638.0 786.2,632.0 786.6,612.0 787.0,642.0 787.4,616.0 787.8,622.0 788.2,620.0 788.6,594.0 789.0,628.0 789.4,656.0 789.8,730.0 790.2,644.0 790.6,612.0 791.0,646.0 791.4,628.0 791.8,656.0 792.2,642.0 792.6,602.0 793.0,604.0 793.4,668.0 793.8,648.0 794.2,618.0 794.6,632.0 795.0,612.0 795.4,632.0 795.8,612.0 796.2,634.0 796.6,606.0 797.0,662.0 797.4,628.0 797.8,626.0 798.2,632.0 798.6,636.0 799.0,632.0 799.4,668.0 799.8,642.0 800.2,612.0 800.6,638.0 801.0,632.0 801.4,624.0 801.8,644.0 802.2,654.0 802.6,634.0 803.0,636.0 803.4,626.0 803.8,654.0 804.2,644.0 804.6,630.0 805.0,634.0 805.4,626.0 805.8,666.0 806.2,618.0 806.6,652.0 807.0,646.0 807.4,650.0 807.8,658.0 808.2,642.0 808.6,638.0 809.0,680.0 809.4,660.0 809.8,654.0 810.2,670.0 810.6,660.0 811.0,640.0 811.4,728.0 811.8,630.0 812.2,662.0 812.6,698.0 813.0,664.0 813.4,680.0 813.8,662.0 814.2,654.0 814.6,634.0 815.0,644.0 815.4,658.0 815.8,692.0 816.2,644.0 816.6,630.0 817.0,620.0 817.4,606.0 817.8,638.0 818.2,646.0 818.6,618.0 819.0,624.0 819.4,624.0 819.8,658.0 820.2,630.0 820.6,614.0 821.0,624.0 821.4,690.0 821.8,612.0 822.2,666.0 822.6,672.0 823.0,668.0 823.4,650.0 823.8,698.0 824.2,640.0 824.6,640.0 825.0,642.0 825.4,686.0 825.8,660.0 826.2,658.0 826.6,678.0 827.0,628.0 827.4,628.0 827.8,652.0 828.2,660.0 828.6,674.0 829.0,690.0 829.4,680.0 829.8,616.0 830.2,636.0 830.6,632.0 831.0,638.0 831.4,640.0 831.8,680.0 832.2,668.0 832.6,694.0 833.0,668.0 833.4,642.0 833.8,652.0 834.2,654.0 834.6,644.0 835.0,670.0 835.4,646.0 835.8,644.0 836.2,682.0 836.6,656.0 837.0,676.0 837.4,672.0 837.8,656.0 838.2,630.0 838.6,652.0 839.0,722.0 839.4,678.0 839.8,662.0 840.2,678.0 840.6,670.0 841.0,664.0 841.4,646.0 841.8,678.0 842.2,632.0 842.6,626.0 843.0,662.0 843.4,650.0 843.8,640.0 844.2,684.0 844.6,704.0 845.0,662.0 845.4,670.0 845.8,678.0 846.2,658.0 846.6,662.0 847.0,638.0 847.4,710.0 847.8,696.0 848.2,644.0 848.6,690.0 849.0,702.0 849.4,672.0 849.8,686.0 850.2,656.0 850.6,684.0 851.0,704.0 851.4,716.0 851.8,712.0 852.2,650.0 852.6,710.0 853.0,678.0 853.4,668.0 853.8,682.0 854.2,654.0 854.6,636.0 855.0,700.0 855.4,632.0 855.8,702.0 856.2,632.0 856.6,652.0 857.0,690.0 857.4,630.0 857.8,654.0 858.2,644.0 858.6,658.0 859.0,680.0 859.4,634.0 859.8,626.0 860.2,658.0 860.6,612.0 861.0,682.0 861.4,640.0 861.8,636.0 862.2,664.0 862.6,698.0 863.0,672.0 863.4,654.0 863.8,642.0 864.2,678.0 864.6,628.0 865.0,670.0 865.4,682.0 865.8,632.0 866.2,708.0 866.6,672.0 867.0,634.0 867.4,646.0 867.8,640.0 868.2,658.0 868.6,642.0 869.0,638.0 869.4,650.0 869.8,638.0 870.2,650.0 870.6,690.0 871.0,646.0 871.4,570.0 871.8,612.0 872.2,624.0 872.6,594.0 873.0,590.0 873.4,652.0 873.8,670.0 874.2,670.0 874.6,618.0 875.0,682.0 875.4,642.0 875.8,632.0 876.2,596.0 876.6,638.0 877.0,670.0 877.4,654.0 877.8,650.0 878.2,636.0 878.6,648.0 879.0,666.0 879.4,634.0 879.8,640.0 880.2,606.0 880.6,630.0 881.0,626.0 881.4,638.0 881.8,658.0 882.2,626.0 882.6,618.0 883.0,676.0 883.4,632.0 883.8,602.0 884.2,666.0 884.6,622.0 885.0,656.0 885.4,646.0 885.8,634.0 886.2,632.0 886.6,630.0 887.0,598.0 887.4,616.0 887.8,628.0 888.2,602.0 888.6,636.0 889.0,620.0 889.4,642.0 889.8,626.0 890.2,628.0 890.6,600.0 891.0,626.0 891.4,686.0 891.8,596.0 892.2,648.0 892.6,682.0 893.0,654.0 893.4,644.0 893.8,646.0 894.2,644.0 894.6,624.0 895.0,666.0 895.4,646.0 895.8,628.0 896.2,646.0 896.6,632.0 897.0,678.0 897.4,620.0 897.8,670.0 898.2,642.0 898.6,602.0 899.0,634.0 899.4,638.0 899.8,624.0 900.2,628.0 900.6,596.0 901.0,640.0 901.4,656.0 901.8,632.0 902.2,632.0 902.6,648.0 903.0,660.0 903.4,642.0 903.8,600.0 904.2,650.0 904.6,604.0 905.0,616.0 905.4,586.0 905.8,622.0 906.2,610.0 906.6,646.0 907.0,616.0 907.4,634.0 907.8,626.0 908.2,614.0 908.6,620.0 909.0,628.0 909.4,646.0 909.8,634.0 910.2,620.0 910.6,640.0 911.0,606.0 911.4,612.0 911.8,596.0 912.2,640.0 912.6,612.0 913.0,604.0 913.4,632.0 913.8,614.0 914.2,644.0 914.6,634.0 915.0,658.0 915.4,668.0 915.8,588.0 916.2,642.0 916.6,654.0 917.0,616.0 917.4,666.0 917.8,632.0 918.2,652.0 918.6,614.0 919.0,640.0 919.4,650.0 919.8,658.0 920.2,654.0 920.6,644.0 921.0,626.0 921.4,510.0 921.8,596.0 922.2,610.0 922.6,666.0 923.0,630.0 923.4,640.0 923.8,646.0 924.2,632.0 924.6,646.0 925.0,640.0 925.4,604.0 925.8,632.0 926.2,628.0 926.6,618.0 927.0,628.0 927.4,622.0 927.8,570.0 928.2,670.0 928.6,616.0 929.0,632.0 929.4,616.0 929.8,650.0 930.2,628.0 930.6,622.0 931.0,646.0 931.4,620.0 931.8,614.0 932.2,632.0 932.6,654.0 933.0,642.0 933.4,632.0 933.8,624.0 934.2,666.0 934.6,634.0 935.0,630.0 935.4,650.0 935.8,602.0 936.2,644.0 936.6,664.0 937.0,616.0 937.4,638.0 937.8,660.0 938.2,676.0 938.6,640.0 939.0,636.0 939.4,652.0 939.8,664.0 940.2,656.0 940.6,672.0 941.0,650.0 941.4,624.0 941.8,652.0 942.2,628.0 942.6,678.0 943.0,658.0 943.4,670.0 943.8,570.0 944.2,636.0 944.6,666.0 945.0,698.0 945.4,678.0 945.8,680.0 946.2,648.0 946.6,606.0 947.0,690.0 947.4,690.0 947.8,682.0 948.2,642.0 948.6,646.0 949.0,680.0 949.4,646.0 949.8,628.0 950.2,630.0 950.6,632.0 951.0,680.0 951.4,672.0 951.8,698.0 952.2,660.0 952.6,696.0 953.0,646.0 953.4,678.0 953.8,704.0 954.2,688.0 954.6,644.0 955.0,642.0 955.4,668.0 955.8,708.0 956.2,658.0 956.6,626.0 957.0,666.0 957.4,660.0 957.8,692.0 958.2,682.0 958.6,680.0 959.0,666.0 959.4,698.0 959.8,690.0 960.2,678.0 960.6,692.0 961.0,696.0 961.4,670.0 961.8,650.0 962.2,652.0 962.6,660.0 963.0,652.0 963.4,630.0 963.8,670.0 964.2,650.0 964.6,642.0 965.0,700.0 965.4,682.0 965.8,680.0 966.2,652.0 966.6,652.0 967.0,656.0 967.4,696.0 967.8,658.0 968.2,658.0 968.6,652.0 969.0,644.0 969.4,658.0 969.8,656.0 970.2,636.0 970.6,646.0 971.0,638.0 971.4,648.0 971.8,682.0 972.2,658.0 972.6,670.0 973.0,668.0 973.4,766.0 973.8,668.0 974.2,690.0 974.6,646.0 975.0,710.0 975.4,642.0 975.8,714.0 976.2,692.0 976.6,702.0 977.0,678.0 977.4,628.0 977.8,674.0 978.2,676.0 978.6,700.0 979.0,660.0 979.4,670.0 979.8,662.0 980.2,650.0 980.6,672.0 981.0,658.0 981.4,710.0 981.8,684.0 982.2,646.0 982.6,672.0 983.0,636.0 983.4,640.0 983.8,692.0 984.2,630.0 984.6,808.0 985.0,646.0 985.4,682.0 985.8,638.0 986.2,672.0 986.6,602.0 987.0,700.0 987.4,672.0 987.8,674.0 988.2,666.0 988.6,710.0 989.0,654.0 989.4,672.0 989.8,686.0 990.2,684.0 990.6,636.0 991.0,682.0 991.4,642.0 991.8,694.0 992.2,700.0 992.6,644.0 993.0,578.0 993.4,648.0 993.8,644.0 994.2,658.0 994.6,646.0 995.0,640.0 995.4,704.0 995.8,664.0 996.2,642.0 996.6,628.0 997.0,688.0 997.4,652.0 997.8,634.0 998.2,630.0 998.6,632.0 999.0,698.0 999.4,676.0 999.8,642.0 1000.2,694.0 1000.6,706.0 1001.0,738.0 1001.4,658.0 1001.8,662.0 1002.2,652.0 1002.6,624.0 1003.0,650.0 1003.4,694.0 1003.8,650.0 1004.2,636.0 1004.6,628.0 1005.0,602.0 1005.4,670.0 1005.8,638.0 1006.2,664.0 1006.6,692.0 1007.0,636.0 1007.4,650.0 1007.8,674.0 1008.2,670.0 1008.6,636.0 1009.0,622.0 1009.4,718.0 1009.8,682.0 1010.2,778.0 1010.6,646.0 1011.0,630.0 1011.4,662.0 1011.8,676.0 1012.2,668.0 1012.6,656.0 1013.0,622.0 1013.4,584.0 1013.8,642.0 1014.2,618.0 1014.6,694.0 1015.0,668.0 1015.4,666.0 1015.8,608.0 1016.2,638.0 1016.6,676.0 1017.0,654.0 1017.4,600.0 1017.8,648.0 1018.2,650.0 1018.6,674.0 1019.0,630.0 1019.4,642.0 1019.8,664.0 1020.2,656.0 1020.6,612.0 1021.0,594.0 1021.4,584.0 1021.8,614.0 1022.2,608.0 1022.6,624.0 1023.0,634.0 1023.4,606.0 1023.8,598.0 1024.2,618.0 1024.6,654.0 1025.0,654.0 1025.4,612.0 1025.8,708.0 1026.2,638.0 1026.6,660.0 1027.0,600.0 1027.4,684.0 1027.8,658.0 1028.2,650.0 1028.6,618.0 1029.0,668.0 1029.4,632.0 1029.8,670.0 1030.2,664.0 1030.6,652.0 1031.0,638.0 1031.4,696.0 1031.8,662.0 1032.2,650.0 1032.6,680.0 1033.0,686.0 1033.4,666.0 1033.8,662.0 1034.2,636.0 1034.6,668.0 1035.0,642.0 1035.4,632.0 1035.8,660.0 1036.2,650.0 1036.6,654.0 1037.0,618.0 1037.4,596.0 1037.8,646.0 1038.2,622.0 1038.6,626.0 1039.0,598.0 1039.4,650.0 1039.8,638.0 1040.2,614.0 1040.6,628.0 1041.0,618.0 1041.4,660.0 1041.8,666.0 1042.2,726.0 1042.6,668.0 1043.0,612.0 1043.4,638.0 1043.8,618.0 1044.2,614.0 1044.6,654.0 1045.0,644.0 1045.4,666.0 1045.8,696.0 1046.2,616.0 1046.6,588.0 1047.0,654.0 1047.4,626.0 1047.8,638.0 1048.2,666.0 1048.6,644.0 1049.0,618.0 1049.4,658.0 1049.8,632.0 1050.2,662.0 1050.6,666.0 1051.0,660.0 1051.4,658.0 1051.8,676.0 1052.2,632.0 1052.6,632.0 1053.0,644.0 1053.4,654.0 1053.8,658.0 1054.2,632.0 1054.6,628.0 1055.0,678.0 1055.4,636.0 1055.8,632.0 1056.2,636.0 1056.6,634.0 1057.0,620.0 1057.4,626.0 1057.8,600.0 1058.2,676.0 1058.6,634.0 1059.0,636.0 1059.4,636.0 1059.8,632.0 1060.2,632.0 1060.6,628.0 1061.0,610.0 1061.4,676.0 1061.8,616.0 1062.2,640.0 1062.6,622.0 1063.0,646.0 1063.4,630.0 1063.8,664.0 1064.2,618.0 1064.6,640.0 1065.0,604.0 1065.4,606.0 1065.8,646.0 1066.2,652.0 1066.6,614.0 1067.0,630.0 1067.4,632.0 1067.8,606.0 1068.2,638.0 1068.6,624.0 1069.0,630.0 1069.4,632.0 1069.8,636.0 1070.2,612.0 1070.6,624.0 1071.0,674.0 1071.4,618.0 1071.8,630.0 1072.2,632.0 1072.6,616.0 1073.0,638.0 1073.4,662.0 1073.8,616.0 1074.2,658.0 1074.6,638.0 1075.0,648.0 1075.4,586.0 1075.8,638.0 1076.2,630.0 1076.6,636.0 1077.0,586.0 1077.4,638.0 1077.8,610.0 1078.2,598.0 1078.6,624.0 1079.0,622.0 1079.4,626.0 1079.8,600.0 1080.2,630.0 1080.6,650.0 1081.0,662.0 1081.4,668.0 1081.8,644.0 1082.2,600.0 1082.6,658.0 1083.0,656.0 1083.4,664.0 1083.8,678.0 1084.2,666.0 1084.6,696.0 1085.0,650.0 1085.4,638.0 1085.8,664.0 1086.2,724.0 1086.6,666.0 1087.0,700.0 1087.4,690.0 1087.8,638.0 1088.2,694.0 1088.6,690.0 1089.0,650.0 1089.4,676.0 1089.8,542.0 1090.2,688.0 1090.6,710.0 1091.0,660.0 1091.4,720.0 1091.8,676.0 1092.2,674.0 1092.6,692.0 1093.0,668.0 1093.4,656.0 1093.8,646.0 1094.2,690.0 1094.6,682.0 1095.0,684.0 1095.4,690.0 1095.8,692.0 1096.2,640.0 1096.6,672.0 1097.0,708.0 1097.4,634.0 1097.8,660.0 1098.2,614.0 1098.6,682.0 1099.0,612.0 1099.4,664.0 1099.8,658.0 1100.2,668.0 1100.6,630.0 1101.0,610.0 1101.4,700.0 1101.8,692.0 1102.2,668.0 1102.6,626.0 1103.0,666.0 1103.4,660.0 1103.8,636.0 1104.2,672.0 1104.6,662.0 1105.0,654.0 1105.4,658.0 1105.8,704.0 1106.2,686.0 1106.6,686.0 1107.0,652.0 1107.4,690.0 1107.8,686.0 1108.2,674.0 1108.6,630.0 1109.0,698.0 1109.4,662.0 1109.8,636.0 1110.2,630.0 1110.6,626.0 1111.0,670.0 1111.4,672.0 1111.8,666.0 1112.2,664.0 1112.6,706.0 1113.0,666.0 1113.4,648.0 1113.8,614.0 1114.2,642.0 1114.6,654.0 1115.0,672.0 1115.4,654.0 1115.8,660.0 1116.2,654.0 1116.6,672.0 1117.0,672.0 1117.4,710.0 1117.8,690.0 1118.2,684.0 1118.6,664.0 1119.0,692.0 1119.4,684.0 1119.8,682.0 1120.2,656.0 1120.6,666.0 1121.0,652.0 1121.4,674.0 1121.8,650.0 1122.2,690.0 1122.6,676.0 1123.0,668.0 1123.4,702.0 1123.8,626.0 1124.2,638.0 1124.6,686.0 1125.0,700.0 1125.4,646.0 1125.8,656.0 1126.2,684.0 1126.6,688.0 1127.0,652.0 1127.4,642.0 1127.8,612.0 1128.2,662.0 1128.6,668.0 1129.0,620.0 1129.4,686.0 1129.8,630.0 1130.2,642.0 1130.6,672.0 1131.0,656.0 1131.4,624.0 1131.8,646.0 1132.2,686.0 1132.6,648.0 1133.0,690.0 1133.4,678.0 1133.8,650.0 1134.2,668.0 1134.6,644.0 1135.0,650.0 1135.4,662.0 1135.8,632.0 1136.2,642.0 1136.6,632.0 1137.0,646.0 1137.4,604.0 1137.8,622.0 1138.2,646.0 1138.6,670.0 1139.0,640.0 1139.4,624.0 1139.8,656.0 1140.2,612.0 1140.6,642.0 1141.0,654.0 1141.4,626.0 1141.8,630.0 1142.2,612.0 1142.6,630.0 1143.0,662.0 1143.4,654.0 1143.8,662.0 1144.2,598.0 1144.6,562.0 1145.0,610.0 1145.4,674.0 1145.8,614.0 1146.2,632.0 1146.6,636.0 1147.0,630.0 1147.4,616.0 1147.8,672.0 1148.2,672.0 1148.6,626.0 1149.0,630.0 1149.4,648.0 1149.8,636.0 1150.2,672.0 1150.6,634.0 1151.0,654.0 1151.4,634.0 1151.8,642.0 1152.2,624.0 1152.6,646.0 1153.0,678.0 1153.4,670.0 1153.8,640.0 1154.2,614.0 1154.6,634.0 1155.0,662.0 1155.4,670.0 1155.8,630.0 1156.2,602.0 1156.6,660.0 1157.0,606.0 1157.4,652.0 1157.8,648.0 1158.2,632.0 1158.6,692.0 1159.0,650.0 1159.4,638.0 1159.8,662.0 1160.2,624.0 1160.6,630.0 1161.0,678.0 1161.4,690.0 1161.8,630.0 1162.2,624.0 1162.6,622.0 1163.0,672.0 1163.4,660.0 1163.8,644.0 1164.2,622.0 1164.6,660.0 1165.0,654.0 1165.4,662.0 1165.8,644.0 1166.2,634.0 1166.6,658.0 1167.0,618.0 1167.4,632.0 1167.8,628.0 1168.2,630.0 1168.6,634.0 1169.0,632.0 1169.4,606.0 1169.8,664.0 1170.2,672.0 1170.6,646.0 1171.0,606.0 1171.4,618.0 1171.8,614.0 1172.2,612.0 1172.6,656.0 1173.0,628.0 1173.4,668.0 1173.8,650.0 1174.2,648.0 1174.6,626.0 1175.0,638.0 1175.4,620.0 1175.8,630.0 1176.2,656.0 1176.6,646.0 1177.0,668.0 1177.4,658.0 1177.8,606.0 1178.2,636.0 1178.6,632.0 1179.0,668.0 1179.4,668.0 1179.8,630.0 1180.2,694.0 1180.6,648.0 1181.0,660.0 1181.4,592.0 1181.8,524.0 1182.2,614.0 1182.6,662.0 1183.0,628.0 1183.4,630.0 1183.8,638.0 1184.2,684.0 1184.6,634.0 1185.0,662.0 1185.4,618.0 1185.8,602.0 1186.2,592.0 1186.6,632.0 1187.0,640.0 1187.4,660.0 1187.8,604.0 1188.2,666.0 1188.6,632.0 1189.0,632.0 1189.4,648.0 1189.8,624.0 1190.2,646.0 1190.6,622.0 1191.0,648.0 1191.4,658.0 1191.8,652.0 1192.2,686.0 1192.6,606.0 1193.0,682.0 1193.4,640.0 1193.8,628.0 1194.2,644.0 1194.6,630.0 1195.0,636.0 1195.4,650.0 1195.8,634.0 1196.2,678.0 1196.6,612.0 1197.0,644.0 1197.4,634.0 1197.8,644.0 1198.2,616.0 1198.6,614.0 1199.0,610.0 1199.4,656.0 1199.8,642.0 1200.2,680.0 1200.6,652.0 1201.0,604.0 1201.4,648.0 1201.8,668.0 1202.2,662.0 1202.6,670.0 1203.0,660.0 1203.4,676.0 1203.8,690.0 1204.2,672.0 1204.6,666.0 1205.0,636.0 1205.4,624.0 1205.8,628.0 1206.2,624.0 1206.6,656.0 1207.0,694.0 1207.4,670.0 1207.8,636.0 1208.2,654.0 1208.6,686.0 1209.0,614.0 1209.4,660.0 1209.8,668.0 1210.2,632.0 1210.6,626.0 1211.0,640.0 1211.4,622.0 1211.8,628.0 1212.2,648.0 1212.6,650.0 1213.0,658.0 1213.4,634.0 1213.8,682.0 1214.2,610.0 1214.6,672.0 1215.0,680.0 1215.4,578.0 1215.8,646.0 1216.2,678.0 1216.6,642.0 1217.0,700.0 1217.4,682.0 1217.8,684.0 1218.2,634.0 1218.6,684.0 1219.0,680.0 1219.4,644.0 1219.8,682.0 1220.2,660.0 1220.6,680.0 1221.0,664.0 1221.4,618.0 1221.8,618.0 1222.2,660.0 1222.6,612.0 1223.0,680.0 1223.4,646.0 1223.8,686.0 1224.2,652.0 1224.6,654.0 1225.0,708.0 1225.4,662.0 1225.8,680.0 1226.2,680.0 1226.6,686.0 1227.0,666.0 1227.4,636.0 1227.8,744.0 1228.2,678.0 1228.6,694.0 1229.0,680.0 1229.4,644.0 1229.8,678.0 1230.2,678.0 1230.6,684.0 1231.0,684.0 1231.4,634.0 1231.8,680.0 1232.2,666.0 1232.6,710.0 1233.0,662.0 1233.4,704.0 1233.8,656.0 1234.2,650.0 1234.6,692.0 1235.0,666.0 1235.4,666.0 1235.8,698.0 1236.2,724.0 1236.6,682.0 1237.0,690.0 1237.4,662.0 1237.8,654.0 1238.2,686.0 1238.6,666.0 1239.0,636.0 1239.4,660.0 1239.8,680.0 1240.2,628.0 1240.6,692.0 1241.0,652.0 1241.4,652.0 1241.8,646.0 1242.2,650.0 1242.6,670.0 1243.0,656.0 1243.4,648.0 1243.8,602.0 1244.2,684.0 1244.6,656.0 1245.0,682.0 1245.4,670.0 1245.8,626.0 1246.2,652.0 1246.6,646.0 1247.0,644.0 1247.4,672.0 1247.8,666.0 1248.2,644.0 1248.6,698.0 1249.0,654.0 1249.4,668.0 1249.8,700.0 1250.2,644.0 1250.6,658.0 1251.0,644.0 1251.4,646.0 1251.8,618.0 1252.2,634.0 1252.6,674.0 1253.0,678.0 1253.4,656.0 1253.8,692.0 1254.2,704.0 1254.6,646.0 1255.0,678.0 1255.4,640.0 1255.8,630.0 1256.2,646.0 1256.6,662.0 1257.0,646.0 1257.4,664.0 1257.8,662.0 1258.2,656.0 1258.6,670.0 1259.0,670.0 1259.4,650.0 1259.8,682.0 1260.2,658.0 1260.6,756.0 1261.0,704.0 1261.4,658.0 1261.8,688.0 1262.2,616.0 1262.6,664.0 1263.0,664.0 1263.4,632.0 1263.8,666.0 1264.2,624.0 1264.6,642.0 1265.0,646.0 1265.4,636.0 1265.8,644.0 1266.2,616.0 1266.6,660.0 1267.0,678.0 1267.4,618.0 1267.8,664.0 1268.2,632.0 1268.6,604.0 1269.0,632.0 1269.4,636.0 1269.8,636.0 1270.2,628.0 1270.6,668.0 1271.0,656.0 1271.4,642.0 1271.8,664.0 1272.2,654.0 1272.6,630.0 1273.0,648.0 1273.4,646.0 1273.8,632.0 1274.2,660.0 1274.6,654.0 1275.0,612.0 1275.4,648.0 1275.8,634.0 1276.2,634.0 1276.6,634.0 1277.0,670.0 1277.4,602.0 1277.8,660.0 1278.2,642.0 1278.6,686.0 1279.0,628.0 1279.4,642.0 1279.8,636.0 1280.2,622.0 1280.6,618.0 1281.0,666.0 1281.4,632.0 1281.8,614.0 1282.2,680.0 1282.6,622.0 1283.0,632.0 1283.4,610.0 1283.8,682.0 1284.2,644.0 1284.6,678.0 1285.0,640.0 1285.4,636.0 1285.8,614.0 1286.2,650.0 1286.6,592.0 1287.0,628.0 1287.4,624.0 1287.8,592.0 1288.2,664.0 1288.6,648.0 1289.0,596.0 1289.4,632.0 1289.8,644.0 1290.2,630.0 1290.6,648.0 1291.0,640.0 1291.4,650.0 1291.8,644.0 1292.2,582.0 1292.6,660.0 1293.0,668.0 1293.4,660.0 1293.8,656.0 1294.2,650.0 1294.6,640.0 1295.0,666.0 1295.4,650.0 1295.8,604.0 1296.2,660.0 1296.6,612.0 1297.0,606.0 1297.4,684.0 1297.8,638.0 1298.2,654.0 1298.6,650.0 1299.0,600.0 1299.4,666.0 1299.8,600.0 1300.2,604.0 1300.6,636.0 1301.0,642.0 1301.4,642.0 1301.8,646.0 1302.2,616.0 1302.6,614.0 1303.0,630.0 1303.4,628.0 1303.8,668.0 1304.2,620.0 1304.6,610.0 1305.0,652.0 1305.4,632.0 1305.8,618.0 1306.2,680.0 1306.6,680.0 1307.0,618.0 1307.4,620.0 1307.8,632.0 1308.2,644.0 1308.6,684.0 1309.0,584.0 1309.4,638.0 1309.8,622.0 1310.2,620.0 1310.6,636.0 1311.0,616.0 1311.4,638.0 1311.8,634.0 1312.2,620.0 1312.6,598.0 1313.0,636.0 1313.4,666.0 1313.8,606.0 1314.2,674.0 1314.6,614.0 1315.0,640.0 1315.4,624.0 1315.8,614.0 1316.2,610.0 1316.6,630.0 1317.0,634.0 1317.4,604.0 1317.8,656.0 1318.2,578.0 1318.6,642.0 1319.0,662.0 1319.4,606.0 1319.8,622.0 1320.2,604.0 1320.6,590.0 1321.0,648.0 1321.4,660.0 1321.8,622.0 1322.2,612.0 1322.6,644.0 1323.0,634.0 1323.4,630.0 1323.8,616.0 1324.2,650.0 1324.6,676.0 1325.0,554.0 1325.4,658.0 1325.8,660.0 1326.2,664.0 1326.6,662.0 1327.0,646.0 1327.4,622.0 1327.8,634.0 1328.2,668.0 1328.6,614.0 1329.0,636.0 1329.4,668.0 1329.8,644.0 1330.2,664.0 1330.6,686.0 1331.0,666.0 1331.4,692.0 1331.8,628.0 1332.2,618.0 1332.6,648.0 1333.0,660.0 1333.4,638.0 1333.8,604.0 1334.2,668.0 1334.6,676.0 1335.0,630.0 1335.4,664.0 1335.8,622.0 1336.2,660.0 1336.6,700.0 1337.0,628.0 1337.4,684.0 1337.8,644.0 1338.2,686.0 1338.6,650.0 1339.0,718.0 1339.4,652.0 1339.8,676.0 1340.2,656.0 1340.6,706.0 1341.0,682.0 1341.4,636.0 1341.8,680.0 1342.2,648.0 1342.6,662.0 1343.0,694.0 1343.4,648.0 1343.8,622.0 1344.2,684.0 1344.6,686.0 1345.0,656.0 1345.4,684.0 1345.8,626.0 1346.2,674.0 1346.6,658.0 1347.0,672.0 1347.4,650.0 1347.8,666.0 1348.2,666.0 1348.6,670.0 1349.0,648.0 1349.4,684.0 1349.8,664.0 1350.2,688.0 1350.6,652.0 1351.0,628.0 1351.4,636.0 1351.8,654.0 1352.2,688.0 1352.6,638.0 1353.0,706.0 1353.4,670.0 1353.8,648.0 1354.2,682.0 1354.6,652.0 1355.0,680.0 1355.4,676.0 1355.8,728.0 1356.2,636.0 1356.6,664.0 1357.0,694.0 1357.4,696.0 1357.8,676.0 1358.2,648.0 1358.6,662.0 1359.0,678.0 1359.4,690.0 1359.8,638.0 1360.2,668.0 1360.6,632.0 1361.0,676.0 1361.4,694.0 1361.8,666.0 1362.2,668.0 1362.6,686.0 1363.0,680.0 1363.4,696.0 1363.8,642.0 1364.2,670.0 1364.6,664.0 1365.0,654.0 1365.4,654.0 1365.8,708.0 1366.2,686.0 1366.6,660.0 1367.0,638.0 1367.4,630.0 1367.8,648.0 1368.2,664.0 1368.6,666.0 1369.0,632.0 1369.4,692.0 1369.8,612.0 1370.2,658.0 1370.6,650.0 1371.0,648.0 1371.4,680.0 1371.8,670.0 1372.2,670.0 1372.6,694.0" fill="none" stroke="#ff00ff" stroke-width="1.2"/>
<polyline points="31.0,546.0 31.5,546.0 32.0,546.0 32.5,546.0 33.0,546.0 33.5,546.0 34.0,552.0 34.5,552.0 35.0,546.0 35.5,546.0 36.0,546.0 36.5,546.0 37.0,546.0 37.5,546.0 38.0,546.0 38.5,546.0 39.0,546.0 39.5,546.0 40.0,546.0 40.5,546.0 41.0,546.0 41.5,546.0 42.0,546.0 42.5,546.0 43.0,546.0 43.5,546.0 44.0,546.0 44.5,546.0 45.0,546.0 45.5,546.0 46.0,546.0 46.5,546.0 47.0,546.0 47.5,546.6 48.0,546.6 48.5,542.2 49.0,542.2 49.5,542.2 50.0,542.2 50.5,542.2 51.0,542.2 51.5,542.2 52.0,542.2 52.5,542.2 53.0,542.2 53.5,542.2 54.0,542.2 54.5,542.2 55.0,542.2 55.5,537.8 56.0,537.8 56.5,537.8 57.0,537.8 57.5,537.8 58.0,537.8 58.5,537.8 59.0,537.8 59.5,537.8 60.0,537.8 60.5,537.8 61.0,537.8 61.5,537.8 62.0,537.8 62.5,533.4 63.0,533.4 63.5,533.4 64.0,533.4 64.5,533.4 65.0,533.4 65.5,533.4 66.0,533.4 66.5,533.4 67.0,533.4 67.5,533.4 68.0,533.4 68.5,533.4 69.0,533.4 69.5,529.0 70.0,529.0 70.5,529.0 71.0,529.0 71.5,529.0 72.0,529.0 72.5,529.0 73.0,529.0 73.5,529.0 74.0,529.0 74.5,529.0 75.0,529.0 75.5,529.0 76.0,529.0 76.5,524.6 77.0,524.6 77.5,524.6 78.0,524.6 78.5,524.6 79.0,524.6 79.5,524.6 80.0,524.6 80.5,524.6 81.0,524.6 81.5,524.6 82.0,524.6 82.5,524.6 83.0,524.6 83.5,520.2 84.0,520.2 84.5,520.2 85.0,520.2 85.5,520.2 86.0,520.2 86.5,520.2 87.0,520.2 87.5,520.2 88.0,520.2 88.5,520.2 89.0,520.2 89.5,520.2 90.0,515.8 90.5,515.8 91.0,515.8 91.5,515.8 92.0,515.8 92.5,515.8 93.0,515.8 93.5,515.8 94.0,515.8 94.5,515.8 95.0,515.8 95.5,514.0 96.0,470.0 96.5,413.5 97.0,413.5 97.5,413.5 98.0,413.5 98.5,413.5 99.0,413.5 99.5,413.5 100.0,413.5 100.5,413.5 101.0,413.5 101.5,413.5 102.0,413.5 102.5,413.5 103.0,413.5 103.5,413.5 104.0,413.5 104.5,413.5 105.0,413.5 105.5,413.5 106.0,413.5 106.5,413.5 107.0,413.5 107.5,413.5 108.0,413.5 108.5,413.5 109.0,413.5 109.5,413.5 110.0,413.5 110.5,413.5 111.0,416.8 111.5,416.8 112.0,416.8 112.5,416.8 113.0,416.8 113.5,416.8 114.0,416.8 114.5,421.0 115.0,416.8 115.5,421.0 116.0,421.0 116.5,421.0 117.0,421.0 117.5,421.0 118.0,421.0 118.5,421.0 119.0,421.0 119.5,421.0 120.0,425.2 120.5,421.0 121.0,421.0 121.5,421.0 122.0,421.0 122.5,425.2 123.0,425.2 123.5,425.2 124.0,425.2 124.5,425.2 125.0,425.2 125.5,425.2 126.0,425.2 126.5,425.2 127.0,425.2 127.5,425.2 128.0,425.2 128.5,425.2 129.0,429.4 129.5,425.2 130.0,429.4 130.5,429.4 131.0,429.4 131.5,429.4 132.0,429.4 132.5,429.4 133.0,429.4 133.5,429.4 134.0,429.4 134.5,429.4 135.0,429.4 135.5,429.4 136.0,433.6 136.5,433.6 137.0,433.6 137.5,433.6 138.0,433.6 138.5,433.6 139.0,433.6 139.5,433.6 140.0,433.6 140.5,433.6 141.0,433.6 141.5,433.6 142.0,433.6 142.5,437.8 143.0,437.8 143.5,437.8 144.0,437.8 144.5,437.8 145.0,437.8 145.5,437.8 146.0,437.8 146.5,437.8 147.0,437.8 147.5,437.8 148.0,437.8 148.5,437.8 149.0,442.0 149.5,442.0 150.0,442.0 150.5,442.0 151.0,442.0 151.5,442.0 152.0,442.0 152.5,442.0 153.0,442.0 153.5,442.0 154.0,442.0 154.5,442.0 155.0,442.0 155.5,442.0 156.0,446.2 156.5,446.2 157.0,446.2 157.5,446.2 158.0,446.2 158.5,446.2 159.0,446.2 159.5,446.2 160.0,446.2 160.5,446.2 161.0,446.2 161.5,446.2 162.0,446.2 162.5,450.4 163.0,452.0 163.5,452.0 164.0,452.0 164.5,546.0 165.0,546.0 165.5,546.0 166.0,546.0 166.5,546.0 167.0,546.0 167.5,546.0 168.0,552.0 168.5,552.0 169.0,546.0 169.5,546.0 170.0,546.0 170.5,546.0 171.0,546.0 171.5,546.0 172.0,546.0 172.5,546.0 173.0,546.0 173.5,546.0 174.0,546.0 174.5,546.0 175.0,546.0 175.5,546.0 176.0,546.0 176.5,546.0 177.0,546.0 177.5,546.0 178.0,546.0 178.5,546.0 179.0,546.0 179.5,546.0 180.0,546.0 180.5,546.0 181.0,546.0 181.5,546.6 182.0,546.6 182.5,542.2 183.0,542.2 183.5,542.2 184.0,542.2 184.5,542.2 185.0,542.2 185.5,542.2 186.0,542.2 186.5,542.2 187.0,542.2 187.5,542.2 188.0,542.2 188.5,542.2 189.0,542.2 189.5,537.8 190.0,537.8 190.5,537.8 191.0,537.8 191.5,537.8 192.0,537.8 192.5,537.8 193.0,537.8 193.5,537.8 194.0,537.8 194.5,537.8 195.0,537.8 195.5,537.8 196.0,537.8 196.5,533.4 197.0,533.4 197.5,533.4 198.0,533.4 198.5,533.4 199.0,533.4 199.5,533.4 200.0,533.4 200.5,533.4 201.0,533.4 201.5,533.4 202.0,533.4 202.5,533.4 203.0,533.4 203.5,529.0 204.0,529.0 204.5,529.0 205.0,529.0 205.5,529.0 206.0,529.0 206.5,529.0 207.0,529.0 207.5,529.0 208.0,529.0 208.5,529.0 209.0,529.0 209.5,529.0 210.0,529.0 210.5,524.6 211.0,524.6 211.5,524.6 212.0,524.6 212.5,524.6 213.0,524.6 213.5,524.6 214.0,524.6 214.5,524.6 215.0,524.6 215.5,520.2 216.0,524.6 216.5,524.6 217.0,524.6 217.5,520.2 218.0,520.2 218.5,520.2 219.0,520.2 219.5,520.2 220.0,520.2 220.5,520.2 221.0,520.2 221.5,520.2 222.0,520.2 222.5,520.2 223.0,520.2 223.5,520.2 224.0,520.2 224.5,515.8 225.0,515.8 225.5,515.8 226.0,515.8 226.5,515.8 227.0,515.8 227.5,515.8 228.0,515.8 228.5,515.8 229.0,515.8 229.5,514.0 230.0,470.0 230.5,413.5 231.0,413.5 231.5,413.5 232.0,413.5 232.5,413.5 233.0,413.5 233.5,413.5 234.0,413.5 234.5,413.5 235.0,413.5 235.5,413.5 236.0,413.5 236.5,413.5 237.0,413.5 237.5,413.5 238.0,413.5 238.5,413.5 239.0,413.5 239.5,413.5 240.0,413.5 240.5,413.5 241.0,413.5 241.5,413.5 242.0,413.5 242.5,413.5 243.0,413.5 243.5,413.5 244.0,413.5 244.5,413.5 245.0,416.8 245.5,416.8 246.0,416.8 246.5,416.8 247.0,416.8 247.5,416.8 248.0,416.8 248.5,416.8 249.0,416.8 249.5,416.8 250.0,421.0 250.5,421.0 251.0,421.0 251.5,421.0 252.0,421.0 252.5,421.0 253.0,425.2 253.5,421.0 254.0,421.0 254.5,421.0 255.0,421.0 255.5,421.0 256.0,421.0 256.5,425.2 257.0,425.2 257.5,425.2 258.0,425.2 258.5,425.2 259.0,425.2 259.5,425.2 260.0,425.2 260.5,425.2 261.0,425.2 261.5,425.2 262.0,425.2 262.5,425.2 263.0,429.4 263.5,429.4 264.0,429.4 264.5,429.4 265.0,429.4 265.5,429.4 266.0,429.4 266.5,429.4 267.0,429.4 267.5,429.4 268.0,429.4 268.5,429.4 269.0,429.4 269.5,429.4 270.0,433.6 270.5,433.6 271.0,433.6 271.5,433.6 272.0,433.6 272.5,433.6 273.0,433.6 273.5,433.6 274.0,433.6 274.5,433.6 275.0,433.6 275.5,433.6 276.0,433.6 276.5,437.8 277.0,437.8 277.5,437.8 278.0,437.8 278.5,437.8 279.0,437.8 279.5,437.8 280.0,437.8 280.5,437.8 281.0,437.8 281.5,437.8 282.0,437.8 282.5,437.8 283.0,437.8 283.5,442.0 284.0,442.0 284.5,442.0 285.0,442.0 285.5,442.0 286.0,442.0 286.5,442.0 287.0,442.0 287.5,442.0 288.0,442.0 288.5,442.0 289.0,442.0 289.5,442.0 290.0,446.2 290.5,446.2 291.0,446.2 291.5,446.2 292.0,446.2 292.5,446.2 293.0,446.2 293.5,446.2 294.0,446.2 294.5,446.2 295.0,446.2 295.5,446.2 296.0,446.2 296.5,454.6 297.0,450.4 297.5,452.0 298.0,452.0 298.5,452.0 299.0,546.0 299.5,546.0 300.0,546.0 300.5,546.0 301.0,546.0 301.5,546.0 302.0,546.0 302.5,552.0 303.0,552.0 303.5,546.0 304.0,546.0 304.5,546.0 305.0,546.0 305.5,546.0 306.0,546.0 306.5,546.0 307.0,546.0 307.5,546.0 308.0,546.0 308.5,546.0 309.0,546.0 309.5,546.0 310.0,546.0 310.5,546.0 311.0,546.0 311.5,546.0 312.0,546.0 312.5,546.0 313.0,546.0 313.5,546.0 314.0,546.0 314.5,546.0 315.0,546.0 315.5,546.0 316.0,546.6 316.5,542.2 317.0,542.2 317.5,542.2 318.0,542.2 318.5,542.2 319.0,542.2 319.5,542.2 320.0,542.2 320.5,542.2 321.0,542.2 321.5,542.2 322.0,542.2 322.5,542.2 323.0,542.2 323.5,537.8 324.0,537.8 324.5,537.8 325.0,537.8 325.5,537.8 326.0,537.8 326.5,537.8 327.0,537.8 327.5,537.8 328.0,533.4 328.5,537.8 329.0,533.4 329.5,537.8 330.0,537.8 330.5,533.4 331.0,533.4 331.5,533.4 332.0,533.4 332.5,533.4 333.0,533.4 333.5,533.4 334.0,533.4 334.5,533.4 335.0,533.4 335.5,533.4 336.0,533.4 336.5,533.4 337.0,533.4 337.5,529.0 338.0,529.0 338.5,529.0 339.0,529.0 339.5,529.0 340.0,529.0 340.5,529.0 341.0,529.0 341.5,529.0 342.0,529.0 342.5,529.0 343.0,529.0 343.5,529.0 344.0,529.0 344.5,524.6 345.0,524.6 345.5,524.6 346.0,524.6 346.5,524.6 347.0,524.6 347.5,524.6 348.0,524.6 348.5,524.6 349.0,524.6 349.5,524.6 350.0,524.6 350.5,524.6 351.0,524.6 351.5,520.2 352.0,520.2 352.5,520.2 353.0,520.2 353.5,520.2 354.0,520.2 354.5,520.2 355.0,520.2 355.5,520.2 356.0,520.2 356.5,520.2 357.0,520.2 357.5,520.2 358.0,520.2 358.5,515.8 359.0,515.8 359.5,515.8 360.0,515.8 360.5,515.8 361.0,515.8 361.5,515.8 362.0,515.8 362.5,515.8 363.0,515.8 363.5,515.8 364.0,514.0 364.5,470.0 365.0,413.5 365.5,413.5 366.0,413.5 366.5,413.5 367.0,413.5 367.5,413.5 368.0,413.5 368.5,413.5 369.0,413.5 369.5,413.5 370.0,413.5 370.5,413.5 371.0,413.5 371.5,413.5 372.0,413.5 372.5,413.5 373.0,413.5 373.5,413.5 374.0,413.5 374.5,413.5 375.0,413.5 375.5,413.5 376.0,413.5 376.5,413.5 377.0,413.5 377.5,413.5 378.0,413.5 378.5,413.5 379.0,413.5 379.5,416.8 380.0,416.8 380.5,416.8 381.0,416.8 381.5,416.8 382.0,416.8 382.5,416.8 383.0,416.8 383.5,416.8 384.0,421.0 384.5,421.0 385.0,421.0 385.5,421.0 386.0,421.0 386.5,421.0 387.0,421.0 387.5,421.0 388.0,421.0 388.5,421.0 389.0,421.0 389.5,421.0 390.0,421.0 390.5,425.2 391.0,425.2 391.5,425.2 392.0,425.2 392.5,425.2 393.0,425.2 393.5,425.2 394.0,425.2 394.5,425.2 395.0,425.2 395.5,425.2 396.0,425.2 396.5,425.2 397.0,425.2 397.5,429.4 398.0,429.4 398.5,429.4 399.0,429.4 399.5,429.4 400.0,429.4 400.5,429.4 401.0,429.4 401.5,429.4 402.0,429.4 402.5,429.4 403.0,429.4 403.5,433.6 404.0,433.6 404.5,433.6 405.0,433.6 405.5,433.6 406.0,433.6 406.5,425.2 407.0,433.6 407.5,433.6 408.0,433.6 408.5,433.6 409.0,433.6 409.5,433.6 410.0,433.6 410.5,437.8 411.0,437.8 411.5,437.8 412.0,437.8 412.5,437.8 413.0,437.8 413.5,437.8 414.0,437.8 414.5,437.8 415.0,437.8 415.5,437.8 416.0,437.8 416.5,437.8 417.0,437.8 417.5,442.0 418.0,442.0 418.5,442.0 419.0,442.0 419.5,442.0 420.0,442.0 420.5,442.0 421.0,442.0 421.5,442.0 422.0,442.0 422.5,442.0 423.0,442.0 423.5,442.0 424.0,446.2 424.5,446.2 425.0,446.2 425.5,446.2 426.0,446.2 426.5,446.2 427.0,446.2 427.5,446.2 428.0,446.2 428.5,446.2 429.0,446.2 429.5,446.2 430.0,446.2 430.5,446.2 431.0,450.4 431.5,452.0 432.0,452.0 432.5,452.0 433.0,546.0 433.5,546.0 434.0,546.0 434.5,546.0 435.0,546.0 435.5,546.0 436.0,546.0 436.5,552.0 437.0,552.0 437.5,546.0 438.0,546.0 438.5,546.0 439.0,546.0 439.5,546.0 440.0,546.0 440.5,546.0 441.0,546.0 441.5,546.0 442.0,546.0 442.5,546.0 443.0,546.0 443.5,546.0 444.0,546.0 444.5,546.0 445.0,546.0 445.5,546.0 446.0,546.0 446.5,546.0 447.0,546.0 447.5,546.0 448.0,546.0 448.5,546.0 449.0,546.0 449.5,546.0 450.0,546.6 450.5,546.6 451.0,542.2 451.5,542.2 452.0,542.2 452.5,542.2 453.0,542.2 453.5,542.2 454.0,542.2 454.5,542.2 455.0,542.2 455.5,542.2 456.0,542.2 456.5,542.2 457.0,542.2 457.5,542.2 458.0,537.8 458.5,537.8 459.0,537.8 459.5,537.8 460.0,537.8 460.5,537.8 461.0,537.8 461.5,537.8 462.0,537.8 462.5,537.8 463.0,537.8 463.5,537.8 464.0,537.8 464.5,537.8 465.0,533.4 465.5,533.4 466.0,533.4 466.5,533.4 467.0,533.4 467.5,533.4 468.0,533.4 468.5,533.4 469.0,533.4 469.5,533.4 470.0,533.4 470.5,533.4 471.0,533.4 471.5,533.4 472.0,529.0 472.5,529.0 473.0,529.0 473.5,529.0 474.0,529.0 474.5,529.0 475.0,529.0 475.5,529.0 476.0,529.0 476.5,529.0 477.0,529.0 477.5,529.0 478.0,529.0 478.5,524.6 479.0,524.6 479.5,524.6 480.0,524.6 480.5,524.6 481.0,524.6 481.5,524.6 482.0,524.6 482.5,524.6 483.0,524.6 483.5,524.6 484.0,524.6 484.5,524.6 485.0,524.6 485.5,520.2 486.0,520.2 486.5,520.2 487.0,520.2 487.5,520.2 488.0,520.2 488.5,520.2 489.0,520.2 489.5,520.2 490.0,520.2 490.5,520.2 491.0,520.2 491.5,520.2 492.0,520.2 492.5,515.8 493.0,515.8 493.5,515.8 494.0,515.8 494.5,515.8 495.0,520.2 495.5,515.8 496.0,515.8 496.5,515.8 497.0,515.8 497.5,515.8 498.0,514.0 498.5,470.0 499.0,413.5 499.5,413.5 500.0,413.5 500.5,413.5 501.0,413.5 501.5,413.5 502.0,413.5 502.5,413.5 503.0,413.5 503.5,413.5 504.0,413.5 504.5,413.5 505.0,413.5 505.5,413.5 506.0,413.5 506.5,413.5 507.0,413.5 507.5,413.5 508.0,413.5 508.5,413.5 509.0,413.5 509.5,413.5 510.0,413.5 510.5,413.5 511.0,413.5 511.5,413.5 512.0,413.5 512.5,413.5 513.0,413.5 513.5,416.8 514.0,416.8 514.5,416.8 515.0,416.8 515.5,416.8 516.0,416.8 516.5,416.8 517.0,416.8 517.5,416.8 518.0,421.0 518.5,421.0 519.0,421.0 519.5,421.0 520.0,421.0 520.5,421.0 521.0,421.0 521.5,421.0 522.0,421.0 522.5,421.0 523.0,421.0 523.5,421.0 524.0,421.0 524.5,421.0 525.0,425.2 525.5,425.2 526.0,425.2 526.5,425.2 527.0,425.2 527.5,425.2 528.0,425.2 528.5,425.2 529.0,425.2 529.5,425.2 530.0,425.2 530.5,425.2 531.0,425.2 531.5,429.4 532.0,429.4 532.5,429.4 533.0,429.4 533.5,429.4 534.0,429.4 534.5,429.4 535.0,429.4 535.5,429.4 536.0,429.4 536.5,429.4 537.0,429.4 537.5,429.4 538.0,433.6 538.5,433.6 539.0,433.6 539.5,433.6 540.0,433.6 540.5,433.6 541.0,433.6 541.5,433.6 542.0,433.6 542.5,433.6 543.0,433.6 543.5,433.6 544.0,433.6 544.5,433.6 545.0,437.8 545.5,437.8 546.0,437.8 546.5,437.8 547.0,437.8 547.5,437.8 548.0,437.8 548.5,437.8 549.0,437.8 549.5,437.8 550.0,437.8 550.5,437.8 551.0,437.8 551.5,442.0 552.0,442.0 552.5,442.0 553.0,437.8 553.5,442.0 554.0,442.0 554.5,442.0 555.0,442.0 555.5,442.0 556.0,442.0 556.5,442.0 557.0,442.0 557.5,442.0 558.0,442.0 558.5,446.2 559.0,446.2 559.5,446.2 560.0,446.2 560.5,446.2 561.0,446.2 561.5,446.2 562.0,446.2 562.5,446.2 563.0,446.2 563.5,446.2 564.0,446.2 564.5,446.2 565.0,450.4 565.5,452.0 566.0,452.0 566.5,452.0 567.0,546.0 567.5,546.0 568.0,546.0 568.5,546.0 569.0,546.0 569.5,546.0 570.0,546.0 570.5,552.0 571.0,552.0 571.5,546.0 572.0,546.0 572.5,546.0 573.0,546.0 573.5,546.0 574.0,546.0 574.5,546.0 575.0,546.0 575.5,546.0 576.0,546.0 576.5,546.0 577.0,546.0 577.5,546.0 578.0,546.0 578.5,546.0 579.0,546.0 579.5,546.0 580.0,546.0 580.5,546.0 581.0,546.0 581.5,546.0 582.0,546.0 582.5,546.0 583.0,546.0 583.5,546.0 584.0,546.6 584.5,546.6 585.0,542.2 585.5,542.2 586.0,542.2 586.5,542.2 587.0,542.2 587.5,542.2 588.0,542.2 588.5,542.2 589.0,542.2 589.5,542.2 590.0,542.2 590.5,542.2 591.0,542.2 591.5,542.2 592.0,537.8 592.5,537.8 593.0,537.8 593.5,537.8 594.0,537.8 594.5,537.8 595.0,537.8 595.5,537.8 596.0,537.8 596.5,537.8 597.0,537.8 597.5,537.8 598.0,537.8 598.5,537.8 599.0,533.4 599.5,533.4 600.0,533.4 600.5,533.4 601.0,533.4 601.5,533.4 602.0,533.4 602.5,533.4 603.0,533.4 603.5,533.4 604.0,533.4 604.5,533.4 605.0,533.4 605.5,533.4 606.0,529.0 606.5,529.0 607.0,529.0 607.5,529.0 608.0,529.0 608.5,529.0 609.0,529.0 609.5,529.0 610.0,529.0 610.5,529.0 611.0,529.0 611.5,529.0 612.0,529.0 612.5,529.0 613.0,524.6 613.5,524.6 614.0,524.6 614.5,524.6 615.0,524.6 615.5,524.6 616.0,524.6 616.5,524.6 617.0,524.6 617.5,524.6 618.0,524.6 618.5,524.6 619.0,524.6 619.5,524.6 620.0,520.2 620.5,520.2 621.0,520.2 621.5,520.2 622.0,520.2 622.5,520.2 623.0,520.2 623.5,520.2 624.0,520.2 624.5,520.2 625.0,520.2 625.5,520.2 626.0,520.2 626.5,520.2 627.0,515.8 627.5,515.8 628.0,520.2 628.5,515.8 629.0,515.8 629.5,515.8 630.0,515.8 630.5,515.8 631.0,515.8 631.5,515.8 632.0,514.0 632.5,470.0 633.0,413.5 633.5,413.5 634.0,413.5 634.5,413.5 635.0,413.5 635.5,413.5 636.0,413.5 636.5,413.5 637.0,413.5 637.5,413.5 638.0,413.5 638.5,413.5 639.0,413.5 639.5,413.5 640.0,413.5 640.5,413.5 641.0,413.5 641.5,413.5 642.0,413.5 642.5,413.5 643.0,413.5 643.5,413.5 644.0,413.5 644.5,413.5 645.0,413.5 645.5,413.5 646.0,413.5 646.5,413.5 647.0,413.5 647.5,416.8 648.0,416.8 648.5,416.8 649.0,416.8 649.5,416.8 650.0,416.8 650.5,416.8 651.0,416.8 651.5,416.8 652.0,421.0 652.5,421.0 653.0,421.0 653.5,421.0 654.0,421.0 654.5,421.0 655.0,421.0 655.5,421.0 656.0,421.0 656.5,421.0 657.0,421.0 657.5,421.0 658.0,421.0 658.5,421.0 659.0,425.2 659.5,425.2 660.0,425.2 660.5,425.2 661.0,425.2 661.5,421.0 662.0,425.2 662.5,425.2 663.0,425.2 663.5,425.2 664.0,425.2 664.5,425.2 665.0,425.2 665.5,429.4 666.0,429.4 666.5,429.4 667.0,429.4 667.5,429.4 668.0,429.4 668.5,429.4 669.0,429.4 669.5,429.4 670.0,429.4 670.5,429.4 671.0,429.4 671.5,429.4 672.0,429.4 672.5,433.6 673.0,433.6 673.5,433.6 674.0,433.6 674.5,433.6 675.0,433.6 675.5,433.6 676.0,433.6 676.5,433.6 677.0,433.6 677.5,433.6 678.0,433.6 678.5,433.6 679.0,437.8 679.5,437.8 680.0,437.8 680.5,437.8 681.0,437.8 681.5,433.6 682.0,437.8 682.5,437.8 683.0,437.8 683.5,437.8 684.0,437.8 684.5,437.8 685.0,437.8 685.5,442.0 686.0,442.0 686.5,442.0 687.0,442.0 687.5,442.0 688.0,442.0 688.5,442.0 689.0,442.0 689.5,442.0 690.0,442.0 690.5,442.0 691.0,442.0 691.5,442.0 692.0,442.0 692.5,446.2 693.0,446.2 693.5,446.2 694.0,446.2 694.5,446.2 695.0,446.2 695.5,446.2 696.0,446.2 696.5,446.2 697.0,446.2 697.5,446.2 698.0,446.2 698.5,446.2 699.0,450.4 699.5,452.0 700.0,452.0 700.5,452.0 701.0,546.0 701.5,546.0 702.0,546.0 702.5,546.0 703.0,546.0 703.5,546.0 704.0,546.0 704.5,552.0 705.0,552.0 705.5,546.0 706.0,546.0 706.5,546.0 707.0,546.0 707.5,546.0 708.0,546.0 708.5,546.0 709.0,546.0 709.5,546.0 710.0,546.0 710.5,546.0 711.0,546.0 711.5,546.0 712.0,546.0 712.5,546.0 713.0,546.0 713.5,546.0 714.0,546.0 714.5,546.0 715.0,546.0 715.5,546.0 716.0,546.0 716.5,546.0 717.0,546.0 717.5,546.0 718.0,546.6 718.5,546.6 719.0,542.2 719.5,542.2 720.0,542.2 720.5,542.2 721.0,542.2 721.5,546.6 722.0,542.2 722.5,542.2 723.0,542.2 723.5,542.2 724.0,542.2 724.5,542.2 725.0,542.2 725.5,542.2 726.0,537.8 726.5,537.8 727.0,537.8 727.5,537.8 728.0,537.8 728.5,537.8 729.0,537.8 729.5,537.8 730.0,537.8 730.5,537.8 731.0,537.8 731.5,537.8 732.0,537.8 732.5,537.8 733.0,533.4 733.5,533.4 734.0,533.4 734.5,533.4 735.0,533.4 735.5,533.4 736.0,533.4 736.5,533.4 737.0,533.4 737.5,533.4 738.0,533.4 738.5,533.4 739.0,533.4 739.5,533.4 740.0,529.0 740.5,529.0 741.0,529.0 741.5,529.0 742.0,529.0 742.5,529.0 743.0,529.0 743.5,529.0 744.0,529.0 744.5,529.0 745.0,529.0 745.5,529.0 746.0,529.0 746.5,529.0 747.0,524.6 747.5,524.6 748.0,524.6 748.5,524.6 749.0,524.6 749.5,524.6 750.0,524.6 750.5,524.6 751.0,524.6 751.5,524.6 752.0,524.6 752.5,524.6 753.0,524.6 753.5,524.6 754.0,520.2 754.5,520.2 755.0,520.2 755.5,520.2 756.0,520.2 756.5,520.2 757.0,520.2 757.5,520.2 758.0,520.2 758.5,520.2 759.0,520.2 759.5,520.2 760.0,520.2 760.5,520.2 761.0,515.8 761.5,515.8 762.0,515.8 762.5,515.8 763.0,515.8 763.5,515.8 764.0,515.8 764.5,511.4 765.0,515.8 765.5,515.8 766.0,514.0 766.5,470.0 767.0,413.5 767.5,413.5 768.0,413.5 768.5,413.5 769.0,413.5 769.5,413.5 770.0,413.5 770.5,413.5 771.0,413.5 771.5,413.5 772.0,413.5 772.5,413.5 773.0,413.5 773.5,413.5 774.0,413.5 774.5,413.5 775.0,413.5 775.5,413.5 776.0,413.5 776.5,413.5 777.0,413.5 777.5,413.5 778.0,413.5 778.5,413.5 779.0,413.5 779.5,413.5 780.0,413.5 780.5,413.5 781.0,413.5 781.5,416.8 782.0,416.8 782.5,416.8 783.0,416.8 783.5,416.8 784.0,416.8 784.5,416.8 785.0,416.8 785.5,416.8 786.0,416.8 786.5,421.0 787.0,421.0 787.5,421.0 788.0,421.0 788.5,421.0 789.0,421.0 789.5,421.0 790.0,421.0 790.5,421.0 791.0,421.0 791.5,421.0 792.0,421.0 792.5,421.0 793.0,425.2 793.5,425.2 794.0,425.2 794.5,425.2 795.0,425.2 795.5,425.2 796.0,425.2 796.5,425.2 797.0,425.2 797.5,425.2 798.0,425.2 798.5,425.2 799.0,425.2 799.5,425.2 800.0,429.4 800.5,429.4 801.0,429.4 801.5,429.4 802.0,429.4 802.5,429.4 803.0,429.4 803.5,429.4 804.0,429.4 804.5,429.4 805.0,429.4 805.5,429.4 806.0,429.4 806.5,433.6 807.0,433.6 807.5,433.6 808.0,433.6 808.5,433.6 809.0,433.6 809.5,433.6 810.0,433.6 810.5,433.6 811.0,433.6 811.5,433.6 812.0,433.6 812.5,433.6 813.0,437.8 813.5,437.8 814.0,437.8 814.5,437.8 815.0,437.8 815.5,437.8 816.0,437.8 816.5,437.8 817.0,437.8 817.5,437.8 818.0,437.8 818.5,437.8 819.0,437.8 819.5,442.0 820.0,442.0 820.5,442.0 821.0,442.0 821.5,442.0 822.0,442.0 822.5,442.0 823.0,442.0 823.5,442.0 824.0,442.0 824.5,442.0 825.0,442.0 825.5,442.0 826.0,442.0 826.5,446.2 827.0,446.2 827.5,446.2 828.0,446.2 828.5,446.2 829.0,446.2 829.5,446.2 830.0,446.2 830.5,446.2 831.0,446.2 831.5,446.2 832.0,446.2 832.5,446.2 833.0,450.4 833.5,450.4 834.0,452.0 834.5,452.0 835.0,452.0 835.5,546.0 836.0,546.0 836.5,546.0 837.0,546.0 837.5,546.0 838.0,546.0 838.5,546.0 839.0,552.0 839.5,552.0 840.0,546.0 840.5,546.0 841.0,546.0 841.5,546.0 842.0,546.0 842.5,546.0 843.0,546.0 843.5,546.0 844.0,546.0 844.5,546.0 845.0,546.0 845.5,546.0 846.0,546.0 846.5,546.0 847.0,546.0 847.5,546.0 848.0,546.0 848.5,546.0 849.0,546.0 849.5,546.0 850.0,546.0 850.5,546.0 851.0,546.0 851.5,546.0 852.0,546.0 852.5,546.6 853.0,546.6 853.5,542.2 854.0,542.2 854.5,542.2 855.0,542.2 855.5,542.2 856.0,542.2 856.5,542.2 857.0,542.2 857.5,542.2 858.0,542.2 858.5,542.2 859.0,542.2 859.5,542.2 860.0,537.8 860.5,537.8 861.0,542.2 861.5,537.8 862.0,537.8 862.5,537.8 863.0,537.8 863.5,537.8 864.0,537.8 864.5,537.8 865.0,537.8 865.5,537.8 866.0,537.8 866.5,537.8 867.0,533.4 867.5,533.4 868.0,533.4 868.5,533.4 869.0,533.4 869.5,537.8 870.0,533.4 870.5,533.4 871.0,533.4 871.5,533.4 872.0,533.4 872.5,533.4 873.0,533.4 873.5,533.4 874.0,529.0 874.5,529.0 875.0,533.4 875.5,529.0 876.0,529.0 876.5,529.0 877.0,529.0 877.5,529.0 878.0,529.0 878.5,529.0 879.0,529.0 879.5,529.0 880.0,529.0 880.5,529.0 881.0,524.6 881.5,524.6 882.0,524.6 882.5,524.6 883.0,524.6 883.5,524.6 884.0,524.6 884.5,524.6 885.0,524.6 885.5,524.6 886.0,524.6 886.5,524.6 887.0,524.6 887.5,524.6 888.0,520.2 888.5,520.2 889.0,520.2 889.5,520.2 890.0,520.2 890.5,520.2 891.0,520.2 891.5,520.2 892.0,520.2 892.5,520.2 893.0,520.2 893.5,520.2 894.0,520.2 894.5,520.2 895.0,515.8 895.5,515.8 896.0,515.8 896.5,515.8 897.0,515.8 897.5,515.8 898.0,515.8 898.5,515.8 899.0,515.8 899.5,515.8 900.0,515.8 900.5,514.0 901.0,470.0 901.5,413.5 902.0,413.5 902.5,413.5 903.0,413.5 903.5,413.5 904.0,413.5 904.5,413.5 905.0,413.5 905.5,413.5 906.0,413.5 906.5,413.5 907.0,413.5 907.5,413.5 908.0,413.5 908.5,413.5 909.0,413.5 909.5,413.5 910.0,413.5 910.5,413.5 911.0,413.5 911.5,413.5 912.0,413.5 912.5,413.5 913.0,413.5 913.5,413.5 914.0,413.5 914.5,413.5 915.0,413.5 915.5,413.5 916.0,416.8 916.5,416.8 917.0,416.8 917.5,416.8 918.0,416.8 918.5,416.8 919.0,416.8 919.5,416.8 920.0,416.8 920.5,421.0 921.0,421.0 921.5,421.0 922.0,421.0 922.5,421.0 923.0,421.0 923.5,421.0 924.0,421.0 924.5,421.0 925.0,421.0 925.5,421.0 926.0,421.0 926.5,421.0 927.0,425.2 927.5,425.2 928.0,425.2 928.5,425.2 929.0,425.2 929.5,425.2 930.0,425.2 930.5,425.2 931.0,425.2 931.5,429.4 932.0,425.2 932.5,429.4 933.0,425.2 933.5,425.2 934.0,429.4 934.5,429.4 935.0,429.4 935.5,429.4 936.0,429.4 936.5,429.4 937.0,429.4 937.5,429.4 938.0,429.4 938.5,429.4 939.0,429.4 939.5,429.4 940.0,429.4 940.5,433.6 941.0,433.6 941.5,433.6 942.0,433.6 942.5,433.6 943.0,433.6 943.5,433.6 944.0,433.6 944.5,433.6 945.0,433.6 945.5,433.6 946.0,433.6 946.5,433.6 947.0,433.6 947.5,437.8 948.0,437.8 948.5,437.8 949.0,437.8 949.5,433.6 950.0,437.8 950.5,437.8 951.0,437.8 951.5,437.8 952.0,437.8 952.5,437.8 953.0,437.8 953.5,437.8 954.0,442.0 954.5,442.0 955.0,442.0 955.5,442.0 956.0,442.0 956.5,442.0 957.0,442.0 957.5,442.0 958.0,442.0 958.5,442.0 959.0,442.0 959.5,442.0 960.0,442.0 960.5,446.2 961.0,446.2 961.5,446.2 962.0,446.2 962.5,446.2 963.0,446.2 963.5,446.2 964.0,446.2 964.5,446.2 965.0,446.2 965.5,446.2 966.0,446.2 966.5,446.2 967.0,446.2 967.5,450.4 968.0,452.0 968.5,452.0 969.0,452.0 969.5,546.0 970.0,546.0 970.5,546.0 971.0,546.0 971.5,546.0 972.0,546.0 972.5,546.0 973.0,552.0 973.5,552.0 974.0,546.0 974.5,546.0 975.0,546.0 975.5,546.0 976.0,546.0 976.5,546.0 977.0,546.0 977.5,546.0 978.0,546.0 978.5,546.0 979.0,546.0 979.5,546.0 980.0,546.0 980.5,546.0 981.0,546.0 981.5,546.0 982.0,546.0 982.5,546.0 983.0,546.0 983.5,546.0 984.0,546.0 984.5,546.0 985.0,546.0 985.5,546.0 986.0,546.0 986.5,546.6 987.0,542.2 987.5,542.2 988.0,542.2 988.5,542.2 989.0,542.2 989.5,542.2 990.0,542.2 990.5,542.2 991.0,542.2 991.5,542.2 992.0,542.2 992.5,542.2 993.0,542.2 993.5,542.2 994.0,542.2 994.5,537.8 995.0,537.8 995.5,537.8 996.0,537.8 996.5,537.8 997.0,537.8 997.5,537.8 998.0,537.8 998.5,537.8 999.0,537.8 999.5,537.8 1000.0,537.8 1000.5,537.8 1001.0,537.8 1001.5,533.4 1002.0,533.4 1002.5,533.4 1003.0,533.4 1003.5,533.4 1004.0,533.4 1004.5,533.4 1005.0,533.4 1005.5,533.4 1006.0,533.4 1006.5,533.4 1007.0,533.4 1007.5,533.4 1008.0,533.4 1008.5,529.0 1009.0,529.0 1009.5,529.0 1010.0,529.0 1010.5,529.0 1011.0,529.0 1011.5,529.0 1012.0,529.0 1012.5,529.0 1013.0,529.0 1013.5,529.0 1014.0,529.0 1014.5,529.0 1015.0,529.0 1015.5,524.6 1016.0,524.6 1016.5,524.6 1017.0,524.6 1017.5,524.6 1018.0,524.6 1018.5,524.6 1019.0,524.6 1019.5,524.6 1020.0,524.6 1020.5,524.6 1021.0,524.6 1021.5,524.6 1022.0,520.2 1022.5,520.2 1023.0,520.2 1023.5,520.2 1024.0,520.2 1024.5,520.2 1025.0,520.2 1025.5,520.2 1026.0,520.2 1026.5,520.2 1027.0,520.2 1027.5,520.2 1028.0,520.2 1028.5,520.2 1029.0,515.8 1029.5,515.8 1030.0,515.8 1030.5,515.8 1031.0,515.8 1031.5,520.2 1032.0,515.8 1032.5,515.8 1033.0,515.8 1033.5,515.8 1034.0,515.8 1034.5,514.0 1035.0,470.0 1035.5,413.5 1036.0,413.5 1036.5,413.5 1037.0,413.5 1037.5,413.5 1038.0,413.5 1038.5,413.5 1039.0,413.5 1039.5,413.5 1040.0,413.5 1040.5,413.5 1041.0,413.5 1041.5,413.5 1042.0,413.5 1042.5,413.5 1043.0,413.5 1043.5,413.5 1044.0,413.5 1044.5,413.5 1045.0,413.5 1045.5,413.5 1046.0,413.5 1046.5,413.5 1047.0,413.5 1047.5,413.5 1048.0,413.5 1048.5,413.5 1049.0,413.5 1049.5,413.5 1050.0,416.8 1050.5,416.8 1051.0,416.8 1051.5,416.8 1052.0,416.8 1052.5,416.8 1053.0,416.8 1053.5,416.8 1054.0,416.8 1054.5,421.0 1055.0,421.0 1055.5,421.0 1056.0,421.0 1056.5,421.0 1057.0,421.0 1057.5,421.0 1058.0,421.0 1058.5,421.0 1059.0,421.0 1059.5,421.0 1060.0,421.0 1060.5,421.0 1061.0,421.0 1061.5,425.2 1062.0,425.2 1062.5,425.2 1063.0,425.2 1063.5,425.2 1064.0,425.2 1064.5,425.2 1065.0,425.2 1065.5,425.2 1066.0,425.2 1066.5,425.2 1067.0,425.2 1067.5,425.2 1068.0,429.4 1068.5,429.4 1069.0,429.4 1069.5,429.4 1070.0,429.4 1070.5,429.4 1071.0,429.4 1071.5,429.4 1072.0,429.4 1072.5,429.4 1073.0,429.4 1073.5,429.4 1074.0,429.4 1074.5,433.6 1075.0,433.6 1075.5,433.6 1076.0,433.6 1076.5,433.6 1077.0,433.6 1077.5,433.6 1078.0,433.6 1078.5,433.6 1079.0,433.6 1079.5,433.6 1080.0,433.6 1080.5,433.6 1081.0,433.6 1081.5,437.8 1082.0,437.8 1082.5,437.8 1083.0,437.8 1083.5,437.8 1084.0,437.8 1084.5,437.8 1085.0,437.8 1085.5,437.8 1086.0,437.8 1086.5,437.8 1087.0,437.8 1087.5,437.8 1088.0,442.0 1088.5,442.0 1089.0,442.0 1089.5,442.0 1090.0,442.0 1090.5,442.0 1091.0,442.0 1091.5,442.0 1092.0,442.0 1092.5,442.0 1093.0,442.0 1093.5,442.0 1094.0,442.0 1094.5,442.0 1095.0,446.2 1095.5,446.2 1096.0,446.2 1096.5,446.2 1097.0,446.2 1097.5,446.2 1098.0,446.2 1098.5,446.2 1099.0,446.2 1099.5,446.2 1100.0,446.2 1100.5,446.2 1101.0,446.2 1101.5,450.4 1102.0,452.0 1102.5,452.0 1103.0,452.0 1103.5,546.0 1104.0,546.0 1104.5,546.0 1105.0,546.0 1105.5,546.0 1106.0,546.0 1106.5,546.0 1107.0,552.0 1107.5,552.0 1108.0,546.0 1108.5,546.0 1109.0,546.0 1109.5,546.0 1110.0,546.0 1110.5,546.0 1111.0,546.0 1111.5,546.0 1112.0,546.0 1112.5,546.0 1113.0,546.0 1113.5,546.0 1114.0,546.0 1114.5,546.0 1115.0,546.0 1115.5,546.0 1116.0,546.0 1116.5,546.0 1117.0,546.0 1117.5,546.0 1118.0,546.0 1118.5,546.0 1119.0,546.0 1119.5,546.0 1120.0,546.0 1120.5,546.6 1121.0,546.6 1121.5,546.6 1122.0,542.2 1122.5,542.2 1123.0,542.2 1123.5,542.2 1124.0,542.2 1124.5,542.2 1125.0,542.2 1125.5,542.2 1126.0,542.2 1126.5,542.2 1127.0,542.2 1127.5,542.2 1128.0,542.2 1128.5,537.8 1129.0,537.8 1129.5,537.8 1130.0,537.8 1130.5,537.8 1131.0,537.8 1131.5,537.8 1132.0,542.2 1132.5,537.8 1133.0,537.8 1133.5,537.8 1134.0,537.8 1134.5,537.8 1135.0,537.8 1135.5,533.4 1136.0,533.4 1136.5,533.4 1137.0,533.4 1137.5,533.4 1138.0,533.4 1138.5,533.4 1139.0,533.4 1139.5,533.4 1140.0,533.4 1140.5,533.4 1141.0,533.4 1141.5,533.4 1142.0,533.4 1142.5,529.0 1143.0,529.0 1143.5,529.0 1144.0,529.0 1144.5,529.0 1145.0,529.0 1145.5,529.0 1146.0,529.0 1146.5,529.0 1147.0,529.0 1147.5,529.0 1148.0,529.0 1148.5,529.0 1149.0,529.0 1149.5,524.6 1150.0,524.6 1150.5,524.6 1151.0,524.6 1151.5,524.6 1152.0,524.6 1152.5,524.6 1153.0,524.6 1153.5,524.6 1154.0,524.6 1154.5,524.6 1155.0,524.6 1155.5,524.6 1156.0,524.6 1156.5,520.2 1157.0,520.2 1157.5,520.2 1158.0,520.2 1158.5,520.2 1159.0,520.2 1159.5,520.2 1160.0,520.2 1160.5,520.2 1161.0,520.2 1161.5,520.2 1162.0,520.2 1162.5,520.2 1163.0,520.2 1163.5,515.8 1164.0,515.8 1164.5,515.8 1165.0,515.8 1165.5,515.8 1166.0,515.8 1166.5,515.8 1167.0,515.8 1167.5,515.8 1168.0,515.8 1168.5,514.0 1169.0,470.0 1169.5,413.5 1170.0,413.5 1170.5,413.5 1171.0,413.5 1171.5,413.5 1172.0,413.5 1172.5,413.5 1173.0,413.5 1173.5,413.5 1174.0,413.5 1174.5,413.5 1175.0,413.5 1175.5,413.5 1176.0,413.5 1176.5,413.5 1177.0,413.5 1177.5,413.5 1178.0,413.5 1178.5,413.5 1179.0,413.5 1179.5,413.5 1180.0,413.5 1180.5,413.5 1181.0,413.5 1181.5,413.5 1182.0,413.5 1182.5,413.5 1183.0,413.5 1183.5,413.5 1184.0,416.8 1184.5,416.8 1185.0,416.8 1185.5,412.6 1186.0,416.8 1186.5,416.8 1187.0,416.8 1187.5,416.8 1188.0,416.8 1188.5,416.8 1189.0,421.0 1189.5,421.0 1190.0,421.0 1190.5,416.8 1191.0,421.0 1191.5,421.0 1192.0,421.0 1192.5,421.0 1193.0,421.0 1193.5,421.0 1194.0,421.0 1194.5,421.0 1195.0,421.0 1195.5,425.2 1196.0,425.2 1196.5,425.2 1197.0,425.2 1197.5,425.2 1198.0,425.2 1198.5,425.2 1199.0,425.2 1199.5,425.2 1200.0,425.2 1200.5,425.2 1201.0,425.2 1201.5,425.2 1202.0,429.4 1202.5,429.4 1203.0,429.4 1203.5,429.4 1204.0,429.4 1204.5,429.4 1205.0,429.4 1205.5,429.4 1206.0,429.4 1206.5,429.4 1207.0,429.4 1207.5,429.4 1208.0,429.4 1208.5,429.4 1209.0,433.6 1209.5,433.6 1210.0,433.6 1210.5,433.6 1211.0,433.6 1211.5,433.6 1212.0,433.6 1212.5,433.6 1213.0,433.6 1213.5,433.6 1214.0,433.6 1214.5,433.6 1215.0,433.6 1215.5,437.8 1216.0,437.8 1216.5,437.8 1217.0,437.8 1217.5,437.8 1218.0,437.8 1218.5,437.8 1219.0,437.8 1219.5,437.8 1220.0,437.8 1220.5,437.8 1221.0,437.8 1221.5,437.8 1222.0,437.8 1222.5,442.0 1223.0,442.0 1223.5,442.0 1224.0,442.0 1224.5,442.0 1225.0,442.0 1225.5,442.0 1226.0,450.4 1226.5,442.0 1227.0,442.0 1227.5,442.0 1228.0,442.0 1228.5,442.0 1229.0,446.2 1229.5,442.0 1230.0,446.2 1230.5,446.2 1231.0,446.2 1231.5,446.2 1232.0,446.2 1232.5,446.2 1233.0,446.2 1233.5,446.2 1234.0,446.2 1234.5,446.2 1235.0,454.6 1235.5,450.4 1236.0,450.4 1236.5,452.0 1237.0,452.0 1237.5,452.0 1238.0,546.0 1238.5,546.0 1239.0,546.0 1239.5,546.0 1240.0,546.0 1240.5,546.0 1241.0,546.0 1241.5,552.0 1242.0,552.0 1242.5,546.0 1243.0,546.0 1243.5,546.0 1244.0,546.0 1244.5,546.0 1245.0,546.0 1245.5,546.0 1246.0,546.0 1246.5,546.0 1247.0,546.0 1247.5,546.0 1248.0,546.0 1248.5,546.0 1249.0,546.0 1249.5,546.0 1250.0,546.0 1250.5,546.0 1251.0,546.0 1251.5,546.0 1252.0,546.0 1252.5,546.0 1253.0,546.0 1253.5,546.0 1254.0,546.0 1254.5,546.0 1255.0,546.6 1255.5,542.2 1256.0,542.2 1256.5,542.2 1257.0,542.2 1257.5,542.2 1258.0,542.2 1258.5,542.2 1259.0,542.2 1259.5,542.2 1260.0,542.2 1260.5,542.2 1261.0,542.2 1261.5,542.2 1262.0,542.2 1262.5,537.8 1263.0,537.8 1263.5,537.8 1264.0,537.8 1264.5,537.8 1265.0,537.8 1265.5,537.8 1266.0,537.8 1266.5,537.8 1267.0,537.8 1267.5,537.8 1268.0,537.8 1268.5,537.8 1269.0,537.8 1269.5,537.8 1270.0,533.4 1270.5,533.4 1271.0,533.4 1271.5,533.4 1272.0,533.4 1272.5,533.4 1273.0,533.4 1273.5,533.4 1274.0,533.4 1274.5,533.4 1275.0,533.4 1275.5,533.4 1276.0,533.4 1276.5,529.0 1277.0,529.0 1277.5,529.0 1278.0,529.0 1278.5,529.0 1279.0,529.0 1279.5,529.0 1280.0,529.0 1280.5,529.0 1281.0,529.0 1281.5,529.0 1282.0,529.0 1282.5,529.0 1283.0,529.0 1283.5,524.6 1284.0,524.6 1284.5,524.6 1285.0,524.6 1285.5,524.6 1286.0,524.6 1286.5,524.6 1287.0,524.6 1287.5,524.6 1288.0,524.6 1288.5,524.6 1289.0,524.6 1289.5,524.6 1290.0,524.6 1290.5,520.2 1291.0,520.2 1291.5,520.2 1292.0,520.2 1292.5,520.2 1293.0,520.2 1293.5,520.2 1294.0,520.2 1294.5,520.2 1295.0,520.2 1295.5,520.2 1296.0,520.2 1296.5,520.2 1297.0,520.2 1297.5,515.8 1298.0,515.8 1298.5,515.8 1299.0,515.8 1299.5,515.8 1300.0,515.8 1300.5,515.8 1301.0,515.8 1301.5,515.8 1302.0,515.8 1302.5,515.8 1303.0,514.0 1303.5,470.0 1304.0,413.5 1304.5,413.5 1305.0,413.5 1305.5,413.5 1306.0,413.5 1306.5,413.5 1307.0,413.5 1307.5,413.5 1308.0,413.5 1308.5,413.5 1309.0,413.5 1309.5,413.5 1310.0,413.5 1310.5,413.5 1311.0,413.5 1311.5,413.5 1312.0,413.5 1312.5,413.5 1313.0,413.5 1313.5,413.5 1314.0,413.5 1314.5,413.5 1315.0,413.5 1315.5,413.5 1316.0,413.5 1316.5,413.5 1317.0,413.5 1317.5,413.5 1318.0,413.5 1318.5,416.8 1319.0,416.8 1319.5,416.8 1320.0,416.8 1320.5,416.8 1321.0,416.8 1321.5,416.8 1322.0,416.8 1322.5,416.8 1323.0,421.0 1323.5,421.0 1324.0,421.0 1324.5,421.0 1325.0,421.0 1325.5,421.0 1326.0,421.0 1326.5,421.0 1327.0,421.0 1327.5,421.0 1328.0,421.0 1328.5,421.0 1329.0,421.0 1329.5,425.2 1330.0,425.2 1330.5,425.2 1331.0,425.2 1331.5,425.2 1332.0,425.2 1332.5,425.2 1333.0,425.2 1333.5,425.2 1334.0,425.2 1334.5,425.2 1335.0,425.2 1335.5,425.2 1336.0,425.2 1336.5,429.4 1337.0,429.4 1337.5,429.4 1338.0,429.4 1338.5,429.4 1339.0,429.4 1339.5,429.4 1340.0,429.4 1340.5,429.4 1341.0,429.4 1341.5,429.4 1342.0,429.4 1342.5,429.4 1343.0,433.6 1343.5,429.4 1344.0,433.6 1344.5,433.6 1345.0,433.6 1345.5,433.6 1346.0,433.6 1346.5,433.6 1347.0,433.6 1347.5,433.6 1348.0,433.6 1348.5,433.6 1349.0,433.6 1349.5,437.8 1350.0,437.8 1350.5,437.8 1351.0,437.8 1351.5,437.8 1352.0,437.8 1352.5,437.8 1353.0,437.8 1353.5,437.8 1354.0,437.8 1354.5,437.8 1355.0,437.8 1355.5,437.8 1356.0,437.8 1356.5,442.0 1357.0,442.0 1357.5,442.0 1358.0,442.0 1358.5,442.0 1359.0,442.0 1359.5,442.0 1360.0,442.0 1360.5,442.0 1361.0,442.0 1361.5,442.0 1362.0,442.0 1362.5,442.0 1363.0,446.2 1363.5,446.2 1364.0,446.2 1364.5,446.2 1365.0,446.2 1365.5,446.2 1366.0,446.2 1366.5,446.2 1367.0,446.2 1367.5,446.2 1368.0,446.2 1368.5,446.2 1369.0,446.2 1369.5,446.2 1370.0,450.4 1370.5,452.0 1371.0,452.0 1371.5,452.0 1372.0,546.0 1372.5,546.0" fill="none" stroke="#00e0f0" stroke-width="1.3"/>
<polyline points="31.0,749.0 31.5,752.0 32.0,749.0 32.5,750.0 33.0,751.0 33.5,749.0 34.0,759.0 34.5,757.0 35.0,749.0 35.5,749.0 36.0,749.0 36.5,749.0 37.0,749.0 37.5,749.0 38.0,749.0 38.5,750.0 39.0,752.0 39.5,749.0 40.0,749.0 40.5,749.0 41.0,750.0 41.5,749.0 42.0,749.0 42.5,743.5 43.0,744.5 43.5,743.5 44.0,743.5 44.5,745.5 45.0,744.5 45.5,744.5 46.0,745.5 46.5,744.5 47.0,745.5 47.5,738.0 48.0,737.0 48.5,736.0 49.0,737.0 49.5,738.0 50.0,738.0 50.5,736.0 51.0,736.0 51.5,738.0 52.0,737.0 52.5,738.0 53.0,730.5 53.5,730.5 54.0,728.5 54.5,728.5 55.0,729.5 55.5,730.5 56.0,728.5 56.5,730.5 57.0,729.5 57.5,721.0 58.0,723.0 58.5,722.0 59.0,721.0 59.5,721.0 60.0,721.0 60.5,721.0 61.0,723.0 61.5,723.0 62.0,721.0 62.5,721.0 63.0,714.5 63.5,714.5 64.0,715.5 64.5,715.5 65.0,715.5 65.5,714.5 66.0,713.5 66.5,715.5 67.0,715.5 67.5,715.5 68.0,706.0 68.5,706.0 69.0,707.0 69.5,706.0 70.0,708.0 70.5,707.0 71.0,707.0 71.5,708.0 72.0,706.0 72.5,707.0 73.0,698.5 73.5,699.5 74.0,698.5 74.5,698.5 75.0,698.5 75.5,700.5 76.0,699.5 76.5,699.5 77.0,700.5 77.5,699.5 78.0,700.5 78.5,693.0 79.0,693.0 79.5,691.0 80.0,693.0 80.5,691.0 81.0,692.0 81.5,691.0 82.0,692.0 82.5,692.0 83.0,692.0 83.5,683.5 84.0,683.5 84.5,685.5 85.0,685.5 85.5,684.5 86.0,684.5 86.5,685.5 87.0,685.5 87.5,683.5 88.0,684.5 88.5,678.0 89.0,676.0 89.5,677.0 90.0,677.0 90.5,677.0 91.0,678.0 91.5,677.0 92.0,678.0 92.5,677.0 93.0,677.0 93.5,668.5 94.0,669.5 94.5,669.5 95.0,669.5 95.5,668.5 96.0,668.5 96.5,670.5 97.0,670.5 97.5,430.0 98.0,424.0 98.5,424.0 99.0,424.0 99.5,423.0 100.0,423.0 100.5,422.0 101.0,423.0 101.5,424.0 102.0,425.0 102.5,421.0 103.0,424.0 103.5,422.0 104.0,421.0 104.5,424.0 105.0,424.0 105.5,424.0 106.0,422.0 106.5,425.0 107.0,425.0 107.5,425.0 108.0,423.0 108.5,422.0 109.0,425.0 109.5,424.0 110.0,422.0 110.5,421.0 111.0,423.0 111.5,430.5 112.0,430.5 112.5,428.5 113.0,429.5 113.5,430.5 114.0,428.5 114.5,428.5 115.0,430.5 115.5,430.5 116.0,430.5 116.5,436.0 117.0,437.0 117.5,438.0 118.0,436.0 118.5,438.0 119.0,437.0 119.5,436.0 120.0,436.0 120.5,437.0 121.0,445.5 121.5,443.5 122.0,443.5 122.5,445.5 123.0,445.5 123.5,445.5 124.0,443.5 124.5,443.5 125.0,445.5 125.5,443.5 126.0,451.0 126.5,451.0 127.0,452.0 127.5,451.0 128.0,452.0 128.5,451.0 129.0,451.0 129.5,453.0 130.0,453.0 130.5,459.5 131.0,459.5 131.5,460.5 132.0,459.5 132.5,460.5 133.0,459.5 133.5,460.5 134.0,460.5 134.5,460.5 135.0,459.5 135.5,467.0 136.0,466.0 136.5,467.0 137.0,468.0 137.5,466.0 138.0,466.0 138.5,466.0 139.0,467.0 139.5,466.0 140.0,474.5 140.5,474.5 141.0,473.5 141.5,474.5 142.0,473.5 142.5,474.5 143.0,473.5 143.5,473.5 144.0,474.5 144.5,473.5 145.0,482.0 145.5,482.0 146.0,482.0 146.5,482.0 147.0,483.0 147.5,483.0 148.0,483.0 148.5,481.0 149.0,483.0 149.5,488.5 150.0,489.5 150.5,490.5 151.0,488.5 151.5,488.5 152.0,490.5 152.5,489.5 153.0,488.5 153.5,489.5 154.0,489.5 154.5,498.0 155.0,489.5 155.5,496.0 156.0,498.0 156.5,498.0 157.0,497.0 157.5,498.0 158.0,497.0 158.5,497.0 159.0,505.5 159.5,504.5 160.0,505.5 160.5,503.5 161.0,504.5 161.5,505.5 162.0,512.0 162.5,503.5 163.0,504.5 163.5,505.5 164.0,511.0 164.5,749.0 165.0,749.0 165.5,749.0 166.0,749.0 166.5,752.0 167.0,749.0 167.5,749.0 168.0,757.0 168.5,757.0 169.0,749.0 169.5,749.0 170.0,751.0 170.5,749.0 171.0,750.0 171.5,749.0 172.0,749.0 172.5,749.0 173.0,749.0 173.5,749.0 174.0,749.0 174.5,749.0 175.0,749.0 175.5,752.0 176.0,749.0 176.5,743.5 177.0,745.5 177.5,745.5 178.0,745.5 178.5,743.5 179.0,743.5 179.5,743.5 180.0,745.5 180.5,743.5 181.0,743.5 181.5,743.5 182.0,738.0 182.5,736.0 183.0,736.0 183.5,736.0 184.0,736.0 184.5,736.0 185.0,738.0 185.5,738.0 186.0,737.0 186.5,729.5 187.0,728.5 187.5,730.5 188.0,729.5 188.5,728.5 189.0,728.5 189.5,728.5 190.0,730.5 190.5,730.5 191.0,730.5 191.5,729.5 192.0,723.0 192.5,722.0 193.0,722.0 193.5,721.0 194.0,723.0 194.5,721.0 195.0,722.0 195.5,721.0 196.0,723.0 196.5,723.0 197.0,715.5 197.5,714.5 198.0,715.5 198.5,713.5 199.0,713.5 199.5,714.5 200.0,715.5 200.5,715.5 201.0,713.5 201.5,713.5 202.0,708.0 202.5,707.0 203.0,708.0 203.5,707.0 204.0,706.0 204.5,707.0 205.0,708.0 205.5,706.0 206.0,706.0 206.5,707.0 207.0,707.0 207.5,699.5 208.0,700.5 208.5,698.5 209.0,700.5 209.5,700.5 210.0,699.5 210.5,699.5 211.0,699.5 211.5,698.5 212.0,700.5 212.5,693.0 213.0,693.0 213.5,692.0 214.0,692.0 214.5,691.0 215.0,691.0 215.5,691.0 216.0,692.0 216.5,691.0 217.0,692.0 217.5,685.5 218.0,685.5 218.5,685.5 219.0,691.0 219.5,684.5 220.0,683.5 220.5,684.5 221.0,684.5 221.5,685.5 222.0,683.5 222.5,677.0 223.0,678.0 223.5,678.0 224.0,678.0 224.5,678.0 225.0,676.0 225.5,678.0 226.0,678.0 226.5,677.0 227.0,678.0 227.5,678.0 228.0,668.5 228.5,668.5 229.0,668.5 229.5,669.5 230.0,670.5 230.5,668.5 231.0,668.5 231.5,430.0 232.0,424.0 232.5,421.0 233.0,422.0 233.5,421.0 234.0,424.0 234.5,425.0 235.0,423.0 235.5,425.0 236.0,425.0 236.5,421.0 237.0,425.0 237.5,421.0 238.0,424.0 238.5,425.0 239.0,425.0 239.5,422.0 240.0,422.0 240.5,424.0 241.0,425.0 241.5,424.0 242.0,424.0 242.5,423.0 243.0,425.0 243.5,425.0 244.0,423.0 244.5,421.0 245.0,421.0 245.5,421.0 246.0,430.5 246.5,428.5 247.0,429.5 247.5,429.5 248.0,429.5 248.5,430.5 249.0,428.5 249.5,429.5 250.0,430.5 250.5,437.0 251.0,436.0 251.5,437.0 252.0,438.0 252.5,437.0 253.0,444.5 253.5,438.0 254.0,438.0 254.5,436.0 255.0,437.0 255.5,445.5 256.0,443.5 256.5,445.5 257.0,445.5 257.5,445.5 258.0,445.5 258.5,444.5 259.0,443.5 259.5,443.5 260.0,453.0 260.5,451.0 261.0,452.0 261.5,452.0 262.0,453.0 262.5,453.0 263.0,452.0 263.5,453.0 264.0,453.0 264.5,453.0 265.0,459.5 265.5,459.5 266.0,459.5 266.5,459.5 267.0,459.5 267.5,458.5 268.0,459.5 268.5,459.5 269.0,458.5 269.5,466.0 270.0,466.0 270.5,467.0 271.0,466.0 271.5,468.0 272.0,467.0 272.5,460.5 273.0,467.0 273.5,467.0 274.0,475.5 274.5,475.5 275.0,474.5 275.5,474.5 276.0,474.5 276.5,475.5 277.0,473.5 277.5,475.5 278.0,473.5 278.5,474.5 279.0,482.0 279.5,481.0 280.0,483.0 280.5,481.0 281.0,483.0 281.5,481.0 282.0,483.0 282.5,481.0 283.0,481.0 283.5,490.5 284.0,489.5 284.5,490.5 285.0,490.5 285.5,489.5 286.0,490.5 286.5,490.5 287.0,489.5 287.5,490.5 288.0,490.5 288.5,496.0 289.0,498.0 289.5,497.0 290.0,497.0 290.5,497.0 291.0,498.0 291.5,496.0 292.0,498.0 292.5,496.0 293.0,505.5 293.5,505.5 294.0,503.5 294.5,503.5 295.0,503.5 295.5,503.5 296.0,503.5 296.5,503.5 297.0,505.5 297.5,505.5 298.0,511.0 298.5,513.0 299.0,751.0 299.5,749.0 300.0,749.0 300.5,749.0 301.0,749.0 301.5,749.0 302.0,750.0 302.5,757.0 303.0,752.0 303.5,749.0 304.0,749.0 304.5,749.0 305.0,749.0 305.5,749.0 306.0,749.0 306.5,749.0 307.0,749.0 307.5,749.0 308.0,749.0 308.5,749.0 309.0,752.0 309.5,750.0 310.0,752.0 310.5,752.0 311.0,745.5 311.5,745.5 312.0,744.5 312.5,744.5 313.0,745.5 313.5,744.5 314.0,744.5 314.5,743.5 315.0,743.5 315.5,736.0 316.0,738.0 316.5,737.0 317.0,737.0 317.5,737.0 318.0,738.0 318.5,737.0 319.0,738.0 319.5,737.0 320.0,736.0 320.5,736.0 321.0,730.5 321.5,729.5 322.0,728.5 322.5,730.5 323.0,728.5 323.5,730.5 324.0,728.5 324.5,728.5 325.0,728.5 325.5,729.5 326.0,722.0 326.5,721.0 327.0,723.0 327.5,722.0 328.0,723.0 328.5,723.0 329.0,723.0 329.5,721.0 330.0,721.0 330.5,723.0 331.0,715.5 331.5,715.5 332.0,714.5 332.5,713.5 333.0,715.5 333.5,713.5 334.0,713.5 334.5,715.5 335.0,713.5 335.5,714.5 336.0,715.5 336.5,707.0 337.0,707.0 337.5,706.0 338.0,706.0 338.5,707.0 339.0,707.0 339.5,706.0 340.0,707.0 340.5,708.0 341.0,708.0 341.5,698.5 342.0,699.5 342.5,698.5 343.0,699.5 343.5,700.5 344.0,699.5 344.5,698.5 345.0,700.5 345.5,699.5 346.0,700.5 346.5,692.0 347.0,691.0 347.5,692.0 348.0,693.0 348.5,692.0 349.0,693.0 349.5,691.0 350.0,691.0 350.5,691.0 351.0,692.0 351.5,685.5 352.0,684.5 352.5,683.5 353.0,685.5 353.5,683.5 354.0,685.5 354.5,684.5 355.0,685.5 355.5,684.5 356.0,684.5 356.5,683.5 357.0,678.0 357.5,677.0 358.0,678.0 358.5,676.0 359.0,677.0 359.5,678.0 360.0,677.0 360.5,677.0 361.0,678.0 361.5,676.0 362.0,670.5 362.5,669.5 363.0,670.5 363.5,670.5 364.0,668.5 364.5,670.5 365.0,670.5 365.5,669.5 366.0,424.0 366.5,423.0 367.0,421.0 367.5,421.0 368.0,424.0 368.5,422.0 369.0,423.0 369.5,424.0 370.0,422.0 370.5,423.0 371.0,425.0 371.5,422.0 372.0,424.0 372.5,423.0 373.0,425.0 373.5,421.0 374.0,424.0 374.5,423.0 375.0,421.0 375.5,423.0 376.0,422.0 376.5,421.0 377.0,425.0 377.5,422.0 378.0,422.0 378.5,425.0 379.0,422.0 379.5,421.0 380.0,430.5 380.5,430.5 381.0,430.5 381.5,421.0 382.0,429.5 382.5,430.5 383.0,428.5 383.5,430.5 384.0,438.0 384.5,438.0 385.0,438.0 385.5,438.0 386.0,438.0 386.5,438.0 387.0,443.5 387.5,436.0 388.0,438.0 388.5,438.0 389.0,436.0 389.5,445.5 390.0,444.5 390.5,445.5 391.0,443.5 391.5,444.5 392.0,444.5 392.5,443.5 393.0,444.5 393.5,443.5 394.0,452.0 394.5,451.0 395.0,453.0 395.5,453.0 396.0,453.0 396.5,453.0 397.0,451.0 397.5,453.0 398.0,453.0 398.5,458.5 399.0,459.5 399.5,459.5 400.0,458.5 400.5,460.5 401.0,458.5 401.5,467.0 402.0,458.5 402.5,458.5 403.0,459.5 403.5,467.0 404.0,459.5 404.5,468.0 405.0,467.0 405.5,468.0 406.0,466.0 406.5,468.0 407.0,468.0 407.5,466.0 408.0,467.0 408.5,475.5 409.0,474.5 409.5,473.5 410.0,475.5 410.5,474.5 411.0,474.5 411.5,474.5 412.0,473.5 412.5,475.5 413.0,481.0 413.5,482.0 414.0,482.0 414.5,482.0 415.0,483.0 415.5,482.0 416.0,473.5 416.5,481.0 417.0,482.0 417.5,482.0 418.0,489.5 418.5,489.5 419.0,481.0 419.5,490.5 420.0,488.5 420.5,489.5 421.0,488.5 421.5,488.5 422.0,490.5 422.5,497.0 423.0,498.0 423.5,496.0 424.0,498.0 424.5,498.0 425.0,496.0 425.5,498.0 426.0,497.0 426.5,498.0 427.0,498.0 427.5,505.5 428.0,503.5 428.5,505.5 429.0,504.5 429.5,503.5 430.0,505.5 430.5,504.5 431.0,505.5 431.5,505.5 432.0,511.0 432.5,512.0 433.0,749.0 433.5,749.0 434.0,749.0 434.5,749.0 435.0,750.0 435.5,749.0 436.0,752.0 436.5,758.0 437.0,749.0 437.5,750.0 438.0,749.0 438.5,750.0 439.0,751.0 439.5,749.0 440.0,749.0 440.5,749.0 441.0,749.0 441.5,749.0 442.0,749.0 442.5,751.0 443.0,749.0 443.5,749.0 444.0,752.0 444.5,750.0 445.0,745.5 445.5,743.5 446.0,745.5 446.5,745.5 447.0,745.5 447.5,743.5 448.0,743.5 448.5,744.5 449.0,744.5 449.5,743.5 450.0,738.0 450.5,737.0 451.0,736.0 451.5,738.0 452.0,737.0 452.5,736.0 453.0,738.0 453.5,730.5 454.0,737.0 454.5,737.0 455.0,728.5 455.5,729.5 456.0,728.5 456.5,729.5 457.0,730.5 457.5,729.5 458.0,728.5 458.5,729.5 459.0,728.5 459.5,728.5 460.0,723.0 460.5,721.0 461.0,722.0 461.5,721.0 462.0,723.0 462.5,722.0 463.0,723.0 463.5,721.0 464.0,723.0 464.5,714.5 465.0,721.0 465.5,715.5 466.0,714.5 466.5,713.5 467.0,715.5 467.5,715.5 468.0,713.5 468.5,715.5 469.0,713.5 469.5,715.5 470.0,713.5 470.5,708.0 471.0,706.0 471.5,708.0 472.0,708.0 472.5,708.0 473.0,707.0 473.5,706.0 474.0,706.0 474.5,706.0 475.0,706.0 475.5,699.5 476.0,699.5 476.5,698.5 477.0,699.5 477.5,699.5 478.0,699.5 478.5,700.5 479.0,700.5 479.5,698.5 480.0,699.5 480.5,692.0 481.0,692.0 481.5,692.0 482.0,692.0 482.5,693.0 483.0,692.0 483.5,691.0 484.0,693.0 484.5,691.0 485.0,692.0 485.5,693.0 486.0,683.5 486.5,685.5 487.0,685.5 487.5,685.5 488.0,683.5 488.5,683.5 489.0,683.5 489.5,683.5 490.0,684.5 490.5,683.5 491.0,678.0 491.5,683.5 492.0,676.0 492.5,677.0 493.0,677.0 493.5,678.0 494.0,676.0 494.5,678.0 495.0,676.0 495.5,678.0 496.0,668.5 496.5,670.5 497.0,670.5 497.5,668.5 498.0,670.5 498.5,668.5 499.0,670.5 499.5,670.5 500.0,430.0 500.5,423.0 501.0,424.0 501.5,423.0 502.0,425.0 502.5,421.0 503.0,423.0 503.5,422.0 504.0,422.0 504.5,424.0 505.0,421.0 505.5,421.0 506.0,421.0 506.5,421.0 507.0,422.0 507.5,421.0 508.0,425.0 508.5,424.0 509.0,424.0 509.5,425.0 510.0,423.0 510.5,423.0 511.0,423.0 511.5,421.0 512.0,424.0 512.5,424.0 513.0,423.0 513.5,423.0 514.0,429.5 514.5,430.5 515.0,430.5 515.5,428.5 516.0,428.5 516.5,428.5 517.0,429.5 517.5,429.5 518.0,429.5 518.5,428.5 519.0,438.0 519.5,438.0 520.0,438.0 520.5,436.0 521.0,438.0 521.5,438.0 522.0,437.0 522.5,436.0 523.0,438.0 523.5,444.5 524.0,445.5 524.5,443.5 525.0,444.5 525.5,443.5 526.0,444.5 526.5,445.5 527.0,445.5 527.5,444.5 528.0,445.5 528.5,452.0 529.0,453.0 529.5,452.0 530.0,453.0 530.5,453.0 531.0,453.0 531.5,452.0 532.0,451.0 532.5,443.5 533.0,451.0 533.5,460.5 534.0,459.5 534.5,459.5 535.0,460.5 535.5,460.5 536.0,460.5 536.5,458.5 537.0,458.5 537.5,458.5 538.0,467.0 538.5,467.0 539.0,468.0 539.5,468.0 540.0,466.0 540.5,467.0 541.0,467.0 541.5,467.0 542.0,468.0 542.5,475.5 543.0,475.5 543.5,475.5 544.0,473.5 544.5,473.5 545.0,473.5 545.5,475.5 546.0,474.5 546.5,475.5 547.0,474.5 547.5,482.0 548.0,482.0 548.5,482.0 549.0,482.0 549.5,483.0 550.0,481.0 550.5,481.0 551.0,481.0 551.5,481.0 552.0,488.5 552.5,490.5 553.0,488.5 553.5,490.5 554.0,489.5 554.5,490.5 555.0,488.5 555.5,488.5 556.0,488.5 556.5,498.0 557.0,489.5 557.5,497.0 558.0,496.0 558.5,497.0 559.0,496.0 559.5,497.0 560.0,498.0 560.5,498.0 561.0,496.0 561.5,504.5 562.0,503.5 562.5,503.5 563.0,503.5 563.5,503.5 564.0,504.5 564.5,505.5 565.0,505.5 565.5,505.5 566.0,512.0 566.5,512.0 567.0,749.0 567.5,749.0 568.0,752.0 568.5,749.0 569.0,749.0 569.5,749.0 570.0,749.0 570.5,758.0 571.0,757.0 571.5,751.0 572.0,749.0 572.5,749.0 573.0,749.0 573.5,749.0 574.0,749.0 574.5,750.0 575.0,749.0 575.5,749.0 576.0,749.0 576.5,749.0 577.0,749.0 577.5,749.0 578.0,749.0 578.5,749.0 579.0,744.5 579.5,743.5 580.0,745.5 580.5,743.5 581.0,743.5 581.5,744.5 582.0,745.5 582.5,745.5 583.0,743.5 583.5,744.5 584.0,738.0 584.5,737.0 585.0,738.0 585.5,737.0 586.0,737.0 586.5,736.0 587.0,738.0 587.5,738.0 588.0,738.0 588.5,737.0 589.0,730.5 589.5,730.5 590.0,730.5 590.5,730.5 591.0,730.5 591.5,729.5 592.0,729.5 592.5,730.5 593.0,729.5 593.5,729.5 594.0,729.5 594.5,723.0 595.0,721.0 595.5,722.0 596.0,723.0 596.5,721.0 597.0,723.0 597.5,723.0 598.0,723.0 598.5,721.0 599.0,721.0 599.5,714.5 600.0,729.5 600.5,714.5 601.0,714.5 601.5,714.5 602.0,722.0 602.5,715.5 603.0,714.5 603.5,714.5 604.0,714.5 604.5,708.0 605.0,706.0 605.5,707.0 606.0,707.0 606.5,708.0 607.0,708.0 607.5,707.0 608.0,707.0 608.5,707.0 609.0,707.0 609.5,698.5 610.0,699.5 610.5,700.5 611.0,700.5 611.5,698.5 612.0,700.5 612.5,700.5 613.0,699.5 613.5,698.5 614.0,700.5 614.5,698.5 615.0,691.0 615.5,692.0 616.0,691.0 616.5,691.0 617.0,691.0 617.5,692.0 618.0,693.0 618.5,692.0 619.0,693.0 619.5,693.0 620.0,685.5 620.5,685.5 621.0,683.5 621.5,684.5 622.0,685.5 622.5,685.5 623.0,684.5 623.5,683.5 624.0,685.5 624.5,685.5 625.0,676.0 625.5,678.0 626.0,676.0 626.5,678.0 627.0,678.0 627.5,678.0 628.0,678.0 628.5,677.0 629.0,677.0 629.5,676.0 630.0,670.5 630.5,670.5 631.0,669.5 631.5,670.5 632.0,668.5 632.5,670.5 633.0,669.5 633.5,670.5 634.0,430.0 634.5,423.0 635.0,422.0 635.5,421.0 636.0,422.0 636.5,424.0 637.0,425.0 637.5,425.0 638.0,423.0 638.5,424.0 639.0,422.0 639.5,425.0 640.0,423.0 640.5,423.0 641.0,422.0 641.5,425.0 642.0,423.0 642.5,422.0 643.0,423.0 643.5,424.0 644.0,422.0 644.5,423.0 645.0,421.0 645.5,424.0 646.0,422.0 646.5,423.0 647.0,423.0 647.5,421.0 648.0,429.5 648.5,430.5 649.0,428.5 649.5,430.5 650.0,430.5 650.5,429.5 651.0,429.5 651.5,429.5 652.0,430.5 652.5,430.5 653.0,436.0 653.5,436.0 654.0,436.0 654.5,436.0 655.0,437.0 655.5,436.0 656.0,436.0 656.5,437.0 657.0,437.0 657.5,443.5 658.0,444.5 658.5,445.5 659.0,443.5 659.5,444.5 660.0,443.5 660.5,444.5 661.0,445.5 661.5,444.5 662.0,443.5 662.5,453.0 663.0,452.0 663.5,451.0 664.0,453.0 664.5,453.0 665.0,452.0 665.5,452.0 666.0,453.0 666.5,453.0 667.0,460.5 667.5,460.5 668.0,460.5 668.5,458.5 669.0,459.5 669.5,459.5 670.0,458.5 670.5,458.5 671.0,459.5 671.5,460.5 672.0,467.0 672.5,467.0 673.0,468.0 673.5,466.0 674.0,466.0 674.5,468.0 675.0,468.0 675.5,467.0 676.0,466.0 676.5,474.5 677.0,473.5 677.5,475.5 678.0,475.5 678.5,475.5 679.0,475.5 679.5,475.5 680.0,473.5 680.5,473.5 681.0,473.5 681.5,483.0 682.0,482.0 682.5,481.0 683.0,483.0 683.5,482.0 684.0,482.0 684.5,481.0 685.0,483.0 685.5,482.0 686.0,489.5 686.5,490.5 687.0,488.5 687.5,488.5 688.0,490.5 688.5,488.5 689.0,488.5 689.5,490.5 690.0,489.5 690.5,489.5 691.0,496.0 691.5,498.0 692.0,498.0 692.5,498.0 693.0,497.0 693.5,497.0 694.0,497.0 694.5,498.0 695.0,498.0 695.5,505.5 696.0,504.5 696.5,504.5 697.0,503.5 697.5,504.5 698.0,504.5 698.5,505.5 699.0,505.5 699.5,504.5 700.0,504.5 700.5,503.5 701.0,749.0 701.5,752.0 702.0,749.0 702.5,749.0 703.0,749.0 703.5,749.0 704.0,749.0 704.5,757.0 705.0,757.0 705.5,751.0 706.0,752.0 706.5,751.0 707.0,750.0 707.5,750.0 708.0,749.0 708.5,751.0 709.0,749.0 709.5,752.0 710.0,749.0 710.5,749.0 711.0,749.0 711.5,749.0 712.0,749.0 712.5,749.0 713.0,743.5 713.5,745.5 714.0,745.5 714.5,744.5 715.0,751.0 715.5,744.5 716.0,745.5 716.5,745.5 717.0,745.5 717.5,743.5 718.0,738.0 718.5,736.0 719.0,736.0 719.5,736.0 720.0,736.0 720.5,738.0 721.0,736.0 721.5,736.0 722.0,738.0 722.5,737.0 723.0,738.0 723.5,728.5 724.0,728.5 724.5,728.5 725.0,728.5 725.5,729.5 726.0,730.5 726.5,729.5 727.0,729.5 727.5,730.5 728.0,728.5 728.5,722.0 729.0,722.0 729.5,723.0 730.0,721.0 730.5,723.0 731.0,723.0 731.5,715.5 732.0,721.0 732.5,721.0 733.0,723.0 733.5,714.5 734.0,714.5 734.5,715.5 735.0,714.5 735.5,713.5 736.0,713.5 736.5,713.5 737.0,715.5 737.5,714.5 738.0,715.5 738.5,708.0 739.0,707.0 739.5,708.0 740.0,708.0 740.5,707.0 741.0,707.0 741.5,708.0 742.0,708.0 742.5,706.0 743.0,706.0 743.5,708.0 744.0,699.5 744.5,699.5 745.0,699.5 745.5,698.5 746.0,699.5 746.5,700.5 747.0,700.5 747.5,699.5 748.0,698.5 748.5,700.5 749.0,693.0 749.5,692.0 750.0,692.0 750.5,691.0 751.0,692.0 751.5,692.0 752.0,691.0 752.5,693.0 753.0,692.0 753.5,693.0 754.0,685.5 754.5,683.5 755.0,685.5 755.5,683.5 756.0,692.0 756.5,685.5 757.0,685.5 757.5,683.5 758.0,684.5 758.5,685.5 759.0,677.0 759.5,678.0 760.0,677.0 760.5,677.0 761.0,678.0 761.5,676.0 762.0,676.0 762.5,677.0 763.0,676.0 763.5,676.0 764.0,676.0 764.5,669.5 765.0,677.0 765.5,669.5 766.0,669.5 766.5,668.5 767.0,668.5 767.5,669.5 768.0,430.0 768.5,422.0 769.0,421.0 769.5,425.0 770.0,423.0 770.5,422.0 771.0,424.0 771.5,424.0 772.0,425.0 772.5,425.0 773.0,421.0 773.5,425.0 774.0,424.0 774.5,423.0 775.0,425.0 775.5,421.0 776.0,422.0 776.5,421.0 777.0,421.0 777.5,425.0 778.0,422.0 778.5,423.0 779.0,425.0 779.5,423.0 780.0,424.0 780.5,424.0 781.0,423.0 781.5,423.0 782.0,421.0 782.5,428.5 783.0,428.5 783.5,429.5 784.0,428.5 784.5,428.5 785.0,430.5 785.5,429.5 786.0,428.5 786.5,429.5 787.0,438.0 787.5,438.0 788.0,438.0 788.5,436.0 789.0,436.0 789.5,437.0 790.0,438.0 790.5,437.0 791.0,437.0 791.5,445.5 792.0,445.5 792.5,445.5 793.0,445.5 793.5,443.5 794.0,444.5 794.5,452.0 795.0,445.5 795.5,443.5 796.0,445.5 796.5,452.0 797.0,452.0 797.5,452.0 798.0,453.0 798.5,452.0 799.0,444.5 799.5,453.0 800.0,453.0 800.5,451.0 801.0,452.0 801.5,460.5 802.0,460.5 802.5,451.0 803.0,460.5 803.5,452.0 804.0,459.5 804.5,453.0 805.0,458.5 805.5,458.5 806.0,468.0 806.5,468.0 807.0,468.0 807.5,466.0 808.0,468.0 808.5,467.0 809.0,468.0 809.5,468.0 810.0,467.0 810.5,467.0 811.0,474.5 811.5,475.5 812.0,474.5 812.5,474.5 813.0,474.5 813.5,474.5 814.0,473.5 814.5,474.5 815.0,474.5 815.5,481.0 816.0,482.0 816.5,482.0 817.0,481.0 817.5,481.0 818.0,483.0 818.5,481.0 819.0,481.0 819.5,481.0 820.0,483.0 820.5,488.5 821.0,488.5 821.5,488.5 822.0,488.5 822.5,488.5 823.0,489.5 823.5,488.5 824.0,488.5 824.5,490.5 825.0,498.0 825.5,498.0 826.0,498.0 826.5,497.0 827.0,497.0 827.5,497.0 828.0,497.0 828.5,497.0 829.0,497.0 829.5,498.0 830.0,505.5 830.5,504.5 831.0,503.5 831.5,504.5 832.0,503.5 832.5,504.5 833.0,505.5 833.5,503.5 834.0,503.5 834.5,512.0 835.0,512.0 835.5,752.0 836.0,749.0 836.5,749.0 837.0,749.0 837.5,749.0 838.0,749.0 838.5,749.0 839.0,757.0 839.5,749.0 840.0,749.0 840.5,750.0 841.0,749.0 841.5,749.0 842.0,750.0 842.5,749.0 843.0,749.0 843.5,749.0 844.0,749.0 844.5,749.0 845.0,749.0 845.5,749.0 846.0,749.0 846.5,750.0 847.0,749.0 847.5,745.5 848.0,743.5 848.5,744.5 849.0,744.5 849.5,745.5 850.0,743.5 850.5,745.5 851.0,743.5 851.5,744.5 852.0,744.5 852.5,736.0 853.0,737.0 853.5,738.0 854.0,737.0 854.5,738.0 855.0,736.0 855.5,745.5 856.0,737.0 856.5,736.0 857.0,737.0 857.5,730.5 858.0,729.5 858.5,728.5 859.0,728.5 859.5,730.5 860.0,730.5 860.5,728.5 861.0,730.5 861.5,730.5 862.0,728.5 862.5,721.0 863.0,722.0 863.5,721.0 864.0,721.0 864.5,722.0 865.0,722.0 865.5,722.0 866.0,713.5 866.5,721.0 867.0,723.0 867.5,715.5 868.0,715.5 868.5,713.5 869.0,713.5 869.5,714.5 870.0,715.5 870.5,715.5 871.0,714.5 871.5,715.5 872.0,715.5 872.5,713.5 873.0,706.0 873.5,708.0 874.0,707.0 874.5,708.0 875.0,708.0 875.5,706.0 876.0,706.0 876.5,707.0 877.0,706.0 877.5,708.0 878.0,699.5 878.5,699.5 879.0,698.5 879.5,698.5 880.0,700.5 880.5,700.5 881.0,700.5 881.5,700.5 882.0,698.5 882.5,698.5 883.0,691.0 883.5,692.0 884.0,692.0 884.5,691.0 885.0,693.0 885.5,693.0 886.0,699.5 886.5,692.0 887.0,692.0 887.5,693.0 888.0,683.5 888.5,684.5 889.0,684.5 889.5,685.5 890.0,683.5 890.5,684.5 891.0,683.5 891.5,684.5 892.0,683.5 892.5,683.5 893.0,684.5 893.5,676.0 894.0,677.0 894.5,678.0 895.0,678.0 895.5,678.0 896.0,676.0 896.5,678.0 897.0,677.0 897.5,677.0 898.0,676.0 898.5,670.5 899.0,668.5 899.5,669.5 900.0,668.5 900.5,669.5 901.0,669.5 901.5,668.5 902.0,670.5 902.5,430.0 903.0,425.0 903.5,424.0 904.0,423.0 904.5,425.0 905.0,424.0 905.5,424.0 906.0,425.0 906.5,425.0 907.0,422.0 907.5,425.0 908.0,423.0 908.5,421.0 909.0,425.0 909.5,425.0 910.0,421.0 910.5,421.0 911.0,425.0 911.5,425.0 912.0,425.0 912.5,421.0 913.0,421.0 913.5,422.0 914.0,424.0 914.5,422.0 915.0,424.0 915.5,421.0 916.0,423.0 916.5,428.5 917.0,428.5 917.5,430.5 918.0,430.5 918.5,430.5 919.0,429.5 919.5,428.5 920.0,429.5 920.5,428.5 921.0,430.5 921.5,436.0 922.0,437.0 922.5,436.0 923.0,437.0 923.5,438.0 924.0,436.0 924.5,437.0 925.0,438.0 925.5,438.0 926.0,444.5 926.5,444.5 927.0,443.5 927.5,444.5 928.0,445.5 928.5,445.5 929.0,444.5 929.5,443.5 930.0,443.5 930.5,451.0 931.0,453.0 931.5,453.0 932.0,451.0 932.5,453.0 933.0,460.5 933.5,451.0 934.0,453.0 934.5,452.0 935.0,453.0 935.5,458.5 936.0,459.5 936.5,458.5 937.0,458.5 937.5,466.0 938.0,459.5 938.5,459.5 939.0,460.5 939.5,459.5 940.0,467.0 940.5,468.0 941.0,467.0 941.5,460.5 942.0,467.0 942.5,466.0 943.0,468.0 943.5,467.0 944.0,467.0 944.5,468.0 945.0,473.5 945.5,475.5 946.0,474.5 946.5,475.5 947.0,475.5 947.5,473.5 948.0,473.5 948.5,473.5 949.0,474.5 949.5,482.0 950.0,483.0 950.5,481.0 951.0,482.0 951.5,482.0 952.0,482.0 952.5,483.0 953.0,482.0 953.5,482.0 954.0,483.0 954.5,489.5 955.0,489.5 955.5,488.5 956.0,488.5 956.5,490.5 957.0,488.5 957.5,490.5 958.0,489.5 958.5,489.5 959.0,498.0 959.5,496.0 960.0,496.0 960.5,496.0 961.0,497.0 961.5,496.0 962.0,497.0 962.5,498.0 963.0,496.0 963.5,496.0 964.0,504.5 964.5,504.5 965.0,505.5 965.5,505.5 966.0,503.5 966.5,503.5 967.0,503.5 967.5,504.5 968.0,505.5 968.5,511.0 969.0,511.0 969.5,749.0 970.0,749.0 970.5,749.0 971.0,749.0 971.5,752.0 972.0,750.0 972.5,749.0 973.0,757.0 973.5,757.0 974.0,749.0 974.5,749.0 975.0,749.0 975.5,750.0 976.0,749.0 976.5,749.0 977.0,749.0 977.5,751.0 978.0,749.0 978.5,749.0 979.0,750.0 979.5,749.0 980.0,749.0 980.5,749.0 981.0,750.0 981.5,745.5 982.0,745.5 982.5,744.5 983.0,744.5 983.5,743.5 984.0,752.0 984.5,744.5 985.0,745.5 985.5,745.5 986.0,743.5 986.5,737.0 987.0,737.0 987.5,736.0 988.0,738.0 988.5,738.0 989.0,738.0 989.5,737.0 990.0,738.0 990.5,736.0 991.0,736.0 991.5,729.5 992.0,738.0 992.5,730.5 993.0,728.5 993.5,729.5 994.0,728.5 994.5,728.5 995.0,728.5 995.5,723.0 996.0,729.5 996.5,722.0 997.0,722.0 997.5,723.0 998.0,723.0 998.5,722.0 999.0,723.0 999.5,721.0 1000.0,723.0 1000.5,723.0 1001.0,722.0 1001.5,721.0 1002.0,714.5 1002.5,715.5 1003.0,714.5 1003.5,715.5 1004.0,715.5 1004.5,715.5 1005.0,715.5 1005.5,715.5 1006.0,715.5 1006.5,713.5 1007.0,708.0 1007.5,708.0 1008.0,708.0 1008.5,707.0 1009.0,706.0 1009.5,707.0 1010.0,708.0 1010.5,706.0 1011.0,707.0 1011.5,707.0 1012.0,699.5 1012.5,699.5 1013.0,698.5 1013.5,698.5 1014.0,700.5 1014.5,699.5 1015.0,698.5 1015.5,700.5 1016.0,700.5 1016.5,699.5 1017.0,692.0 1017.5,691.0 1018.0,691.0 1018.5,692.0 1019.0,692.0 1019.5,692.0 1020.0,693.0 1020.5,691.0 1021.0,692.0 1021.5,691.0 1022.0,693.0 1022.5,684.5 1023.0,683.5 1023.5,684.5 1024.0,684.5 1024.5,685.5 1025.0,685.5 1025.5,684.5 1026.0,684.5 1026.5,685.5 1027.0,684.5 1027.5,676.0 1028.0,677.0 1028.5,676.0 1029.0,677.0 1029.5,676.0 1030.0,668.5 1030.5,678.0 1031.0,677.0 1031.5,678.0 1032.0,676.0 1032.5,668.5 1033.0,668.5 1033.5,669.5 1034.0,670.5 1034.5,668.5 1035.0,670.5 1035.5,668.5 1036.0,669.5 1036.5,430.0 1037.0,421.0 1037.5,425.0 1038.0,422.0 1038.5,424.0 1039.0,425.0 1039.5,423.0 1040.0,425.0 1040.5,422.0 1041.0,424.0 1041.5,423.0 1042.0,421.0 1042.5,422.0 1043.0,425.0 1043.5,421.0 1044.0,423.0 1044.5,423.0 1045.0,423.0 1045.5,421.0 1046.0,422.0 1046.5,422.0 1047.0,422.0 1047.5,421.0 1048.0,421.0 1048.5,425.0 1049.0,421.0 1049.5,421.0 1050.0,422.0 1050.5,430.5 1051.0,428.5 1051.5,428.5 1052.0,428.5 1052.5,429.5 1053.0,429.5 1053.5,428.5 1054.0,430.5 1054.5,428.5 1055.0,436.0 1055.5,437.0 1056.0,436.0 1056.5,438.0 1057.0,438.0 1057.5,437.0 1058.0,438.0 1058.5,438.0 1059.0,438.0 1059.5,445.5 1060.0,444.5 1060.5,445.5 1061.0,444.5 1061.5,443.5 1062.0,444.5 1062.5,445.5 1063.0,444.5 1063.5,443.5 1064.0,444.5 1064.5,443.5 1065.0,443.5 1065.5,453.0 1066.0,451.0 1066.5,452.0 1067.0,453.0 1067.5,451.0 1068.0,453.0 1068.5,453.0 1069.0,451.0 1069.5,458.5 1070.0,460.5 1070.5,459.5 1071.0,459.5 1071.5,460.5 1072.0,459.5 1072.5,459.5 1073.0,459.5 1073.5,468.0 1074.0,458.5 1074.5,460.5 1075.0,467.0 1075.5,468.0 1076.0,468.0 1076.5,468.0 1077.0,468.0 1077.5,467.0 1078.0,468.0 1078.5,468.0 1079.0,468.0 1079.5,474.5 1080.0,473.5 1080.5,473.5 1081.0,473.5 1081.5,475.5 1082.0,473.5 1082.5,473.5 1083.0,474.5 1083.5,473.5 1084.0,481.0 1084.5,481.0 1085.0,483.0 1085.5,482.0 1086.0,483.0 1086.5,483.0 1087.0,481.0 1087.5,482.0 1088.0,483.0 1088.5,490.5 1089.0,488.5 1089.5,488.5 1090.0,481.0 1090.5,490.5 1091.0,489.5 1091.5,489.5 1092.0,498.0 1092.5,489.5 1093.0,490.5 1093.5,498.0 1094.0,496.0 1094.5,496.0 1095.0,496.0 1095.5,497.0 1096.0,497.0 1096.5,496.0 1097.0,496.0 1097.5,497.0 1098.0,503.5 1098.5,505.5 1099.0,504.5 1099.5,505.5 1100.0,504.5 1100.5,503.5 1101.0,504.5 1101.5,503.5 1102.0,503.5 1102.5,504.5 1103.0,511.0 1103.5,749.0 1104.0,750.0 1104.5,749.0 1105.0,749.0 1105.5,749.0 1106.0,749.0 1106.5,749.0 1107.0,757.0 1107.5,757.0 1108.0,749.0 1108.5,749.0 1109.0,749.0 1109.5,749.0 1110.0,749.0 1110.5,749.0 1111.0,749.0 1111.5,749.0 1112.0,749.0 1112.5,750.0 1113.0,749.0 1113.5,749.0 1114.0,749.0 1114.5,749.0 1115.0,749.0 1115.5,743.5 1116.0,744.5 1116.5,744.5 1117.0,745.5 1117.5,744.5 1118.0,745.5 1118.5,745.5 1119.0,743.5 1119.5,745.5 1120.0,736.0 1120.5,736.0 1121.0,737.0 1121.5,738.0 1122.0,738.0 1122.5,738.0 1123.0,729.5 1123.5,736.0 1124.0,737.0 1124.5,737.0 1125.0,738.0 1125.5,730.5 1126.0,729.5 1126.5,730.5 1127.0,729.5 1127.5,728.5 1128.0,729.5 1128.5,730.5 1129.0,729.5 1129.5,730.5 1130.0,730.5 1130.5,728.5 1131.0,723.0 1131.5,722.0 1132.0,722.0 1132.5,722.0 1133.0,728.5 1133.5,722.0 1134.0,723.0 1134.5,722.0 1135.0,722.0 1135.5,721.0 1136.0,715.5 1136.5,713.5 1137.0,714.5 1137.5,714.5 1138.0,713.5 1138.5,715.5 1139.0,713.5 1139.5,714.5 1140.0,714.5 1140.5,714.5 1141.0,708.0 1141.5,706.0 1142.0,708.0 1142.5,708.0 1143.0,708.0 1143.5,707.0 1144.0,708.0 1144.5,708.0 1145.0,706.0 1145.5,706.0 1146.0,707.0 1146.5,698.5 1147.0,698.5 1147.5,699.5 1148.0,698.5 1148.5,698.5 1149.0,699.5 1149.5,699.5 1150.0,698.5 1150.5,700.5 1151.0,700.5 1151.5,691.0 1152.0,692.0 1152.5,693.0 1153.0,692.0 1153.5,693.0 1154.0,693.0 1154.5,692.0 1155.0,693.0 1155.5,691.0 1156.0,692.0 1156.5,683.5 1157.0,683.5 1157.5,691.0 1158.0,685.5 1158.5,684.5 1159.0,684.5 1159.5,685.5 1160.0,684.5 1160.5,685.5 1161.0,685.5 1161.5,676.0 1162.0,678.0 1162.5,677.0 1163.0,678.0 1163.5,676.0 1164.0,677.0 1164.5,676.0 1165.0,678.0 1165.5,676.0 1166.0,678.0 1166.5,677.0 1167.0,668.5 1167.5,670.5 1168.0,670.5 1168.5,668.5 1169.0,668.5 1169.5,670.5 1170.0,670.5 1170.5,430.0 1171.0,422.0 1171.5,423.0 1172.0,424.0 1172.5,424.0 1173.0,423.0 1173.5,423.0 1174.0,421.0 1174.5,425.0 1175.0,422.0 1175.5,422.0 1176.0,422.0 1176.5,421.0 1177.0,425.0 1177.5,425.0 1178.0,423.0 1178.5,424.0 1179.0,425.0 1179.5,425.0 1180.0,425.0 1180.5,425.0 1181.0,424.0 1181.5,421.0 1182.0,421.0 1182.5,421.0 1183.0,424.0 1183.5,422.0 1184.0,421.0 1184.5,422.0 1185.0,429.5 1185.5,429.5 1186.0,428.5 1186.5,428.5 1187.0,429.5 1187.5,430.5 1188.0,430.5 1188.5,428.5 1189.0,428.5 1189.5,438.0 1190.0,438.0 1190.5,438.0 1191.0,437.0 1191.5,437.0 1192.0,436.0 1192.5,437.0 1193.0,437.0 1193.5,436.0 1194.0,436.0 1194.5,443.5 1195.0,443.5 1195.5,443.5 1196.0,443.5 1196.5,444.5 1197.0,445.5 1197.5,445.5 1198.0,445.5 1198.5,443.5 1199.0,453.0 1199.5,453.0 1200.0,453.0 1200.5,453.0 1201.0,451.0 1201.5,451.0 1202.0,451.0 1202.5,452.0 1203.0,451.0 1203.5,460.5 1204.0,458.5 1204.5,460.5 1205.0,458.5 1205.5,458.5 1206.0,460.5 1206.5,459.5 1207.0,459.5 1207.5,460.5 1208.0,460.5 1208.5,467.0 1209.0,468.0 1209.5,466.0 1210.0,467.0 1210.5,466.0 1211.0,466.0 1211.5,468.0 1212.0,468.0 1212.5,468.0 1213.0,474.5 1213.5,473.5 1214.0,474.5 1214.5,475.5 1215.0,474.5 1215.5,474.5 1216.0,473.5 1216.5,473.5 1217.0,475.5 1217.5,473.5 1218.0,482.0 1218.5,483.0 1219.0,481.0 1219.5,483.0 1220.0,481.0 1220.5,482.0 1221.0,482.0 1221.5,483.0 1222.0,481.0 1222.5,488.5 1223.0,488.5 1223.5,489.5 1224.0,489.5 1224.5,488.5 1225.0,488.5 1225.5,490.5 1226.0,489.5 1226.5,488.5 1227.0,490.5 1227.5,496.0 1228.0,497.0 1228.5,497.0 1229.0,505.5 1229.5,497.0 1230.0,496.0 1230.5,496.0 1231.0,498.0 1231.5,496.0 1232.0,505.5 1232.5,503.5 1233.0,505.5 1233.5,505.5 1234.0,504.5 1234.5,505.5 1235.0,503.5 1235.5,504.5 1236.0,503.5 1236.5,504.5 1237.0,512.0 1237.5,513.0 1238.0,749.0 1238.5,749.0 1239.0,749.0 1239.5,749.0 1240.0,749.0 1240.5,749.0 1241.0,751.0 1241.5,757.0 1242.0,749.0 1242.5,749.0 1243.0,749.0 1243.5,751.0 1244.0,749.0 1244.5,749.0 1245.0,751.0 1245.5,749.0 1246.0,749.0 1246.5,749.0 1247.0,749.0 1247.5,749.0 1248.0,750.0 1248.5,749.0 1249.0,749.0 1249.5,749.0 1250.0,744.5 1250.5,745.5 1251.0,743.5 1251.5,745.5 1252.0,744.5 1252.5,745.5 1253.0,744.5 1253.5,743.5 1254.0,745.5 1254.5,737.0 1255.0,737.0 1255.5,738.0 1256.0,738.0 1256.5,737.0 1257.0,738.0 1257.5,738.0 1258.0,738.0 1258.5,736.0 1259.0,736.0 1259.5,737.0 1260.0,737.0 1260.5,728.5 1261.0,729.5 1261.5,730.5 1262.0,728.5 1262.5,729.5 1263.0,729.5 1263.5,728.5 1264.0,730.5 1264.5,730.5 1265.0,722.0 1265.5,722.0 1266.0,721.0 1266.5,722.0 1267.0,723.0 1267.5,714.5 1268.0,722.0 1268.5,723.0 1269.0,722.0 1269.5,721.0 1270.0,713.5 1270.5,715.5 1271.0,714.5 1271.5,714.5 1272.0,714.5 1272.5,713.5 1273.0,715.5 1273.5,713.5 1274.0,713.5 1274.5,714.5 1275.0,714.5 1275.5,708.0 1276.0,706.0 1276.5,708.0 1277.0,706.0 1277.5,708.0 1278.0,706.0 1278.5,706.0 1279.0,708.0 1279.5,708.0 1280.0,708.0 1280.5,698.5 1281.0,700.5 1281.5,698.5 1282.0,699.5 1282.5,698.5 1283.0,700.5 1283.5,700.5 1284.0,699.5 1284.5,699.5 1285.0,700.5 1285.5,693.0 1286.0,693.0 1286.5,691.0 1287.0,692.0 1287.5,693.0 1288.0,692.0 1288.5,692.0 1289.0,692.0 1289.5,692.0 1290.0,691.0 1290.5,685.5 1291.0,684.5 1291.5,685.5 1292.0,685.5 1292.5,685.5 1293.0,684.5 1293.5,685.5 1294.0,683.5 1294.5,685.5 1295.0,685.5 1295.5,685.5 1296.0,678.0 1296.5,678.0 1297.0,677.0 1297.5,677.0 1298.0,677.0 1298.5,677.0 1299.0,676.0 1299.5,678.0 1300.0,677.0 1300.5,677.0 1301.0,668.5 1301.5,670.5 1302.0,668.5 1302.5,670.5 1303.0,669.5 1303.5,668.5 1304.0,669.5 1304.5,670.5 1305.0,421.0 1305.5,421.0 1306.0,425.0 1306.5,423.0 1307.0,421.0 1307.5,424.0 1308.0,422.0 1308.5,422.0 1309.0,425.0 1309.5,423.0 1310.0,421.0 1310.5,422.0 1311.0,423.0 1311.5,423.0 1312.0,422.0 1312.5,423.0 1313.0,422.0 1313.5,425.0 1314.0,422.0 1314.5,423.0 1315.0,423.0 1315.5,425.0 1316.0,423.0 1316.5,424.0 1317.0,425.0 1317.5,423.0 1318.0,422.0 1318.5,422.0 1319.0,429.5 1319.5,430.5 1320.0,430.5 1320.5,430.5 1321.0,428.5 1321.5,428.5 1322.0,430.5 1322.5,429.5 1323.0,430.5 1323.5,437.0 1324.0,437.0 1324.5,436.0 1325.0,438.0 1325.5,438.0 1326.0,436.0 1326.5,436.0 1327.0,438.0 1327.5,437.0 1328.0,438.0 1328.5,443.5 1329.0,445.5 1329.5,443.5 1330.0,443.5 1330.5,444.5 1331.0,444.5 1331.5,444.5 1332.0,445.5 1332.5,443.5 1333.0,453.0 1333.5,453.0 1334.0,451.0 1334.5,453.0 1335.0,451.0 1335.5,452.0 1336.0,453.0 1336.5,452.0 1337.0,453.0 1337.5,453.0 1338.0,460.5 1338.5,460.5 1339.0,458.5 1339.5,459.5 1340.0,459.5 1340.5,460.5 1341.0,459.5 1341.5,459.5 1342.0,459.5 1342.5,467.0 1343.0,466.0 1343.5,467.0 1344.0,467.0 1344.5,468.0 1345.0,468.0 1345.5,466.0 1346.0,468.0 1346.5,467.0 1347.0,468.0 1347.5,475.5 1348.0,474.5 1348.5,475.5 1349.0,474.5 1349.5,473.5 1350.0,473.5 1350.5,475.5 1351.0,474.5 1351.5,475.5 1352.0,483.0 1352.5,482.0 1353.0,481.0 1353.5,483.0 1354.0,482.0 1354.5,482.0 1355.0,482.0 1355.5,481.0 1356.0,481.0 1356.5,482.0 1357.0,490.5 1357.5,488.5 1358.0,489.5 1358.5,488.5 1359.0,490.5 1359.5,490.5 1360.0,488.5 1360.5,490.5 1361.0,488.5 1361.5,498.0 1362.0,498.0 1362.5,497.0 1363.0,496.0 1363.5,496.0 1364.0,496.0 1364.5,497.0 1365.0,497.0 1365.5,498.0 1366.0,498.0 1366.5,505.5 1367.0,504.5 1367.5,504.5 1368.0,505.5 1368.5,504.5 1369.0,504.5 1369.5,503.5 1370.0,503.5 1370.5,503.5 1371.0,511.0 1371.5,511.0 1372.0,751.0 1372.5,749.0" fill="none" stroke="#ff0000" stroke-width="1.3"/>
<polyline points="31.0,416.0 31.5,340.0 32.0,312.0 32.2,300.0 32.6,295.0 33.0,295.0 33.4,302.5 33.8,297.5 34.2,307.5 34.6,300.0 35.0,302.5 35.4,310.0 35.8,310.0 36.2,290.0 36.6,305.0 37.0,317.5 37.4,305.0 37.8,307.5 38.2,302.5 38.6,312.5 39.0,307.5 39.4,302.5 39.8,300.0 40.2,310.0 40.6,297.5 41.0,310.0 41.4,310.0 41.8,295.0 42.2,312.5 42.6,307.5 43.0,310.0 43.4,300.0 43.8,312.5 44.2,307.5 44.6,315.0 45.0,312.5 45.4,310.0 45.8,320.0 46.2,300.0 46.6,305.0 47.0,307.5 47.4,300.0 47.8,292.5 48.2,320.0 48.6,302.5 49.0,307.5 49.4,307.5 49.8,302.5 50.2,295.0 50.6,302.5 51.0,295.0 51.4,295.0 51.8,305.0 52.2,315.0 52.6,310.0 53.0,292.5 53.4,305.0 53.8,310.0 54.2,285.0 54.6,292.5 55.0,302.5 55.4,285.0 55.8,305.0 56.2,297.5 56.6,295.0 57.0,307.5 57.4,310.0 57.8,295.0 58.2,302.5 58.6,310.0 59.0,302.5 59.4,302.5 59.8,300.0 60.2,295.0 60.6,312.5 61.0,312.5 61.4,302.5 61.8,302.5 62.2,307.5 62.6,305.0 63.0,305.0 63.4,310.0 63.8,312.5 64.2,322.5 64.6,312.5 65.0,320.0 65.4,312.5 65.8,307.5 66.2,307.5 66.6,305.0 67.0,292.5 67.4,307.5 67.8,305.0 68.2,302.5 68.6,287.5 69.0,302.5 69.4,292.5 69.8,300.0 70.2,295.0 70.6,287.5 71.0,295.0 71.4,310.0 71.8,310.0 72.2,297.5 72.6,305.0 73.0,292.5 73.4,302.5 73.8,297.5 74.2,312.5 74.6,295.0 75.0,300.0 75.4,317.5 75.8,300.0 76.2,310.0 76.6,305.0 77.0,300.0 77.4,295.0 77.8,295.0 78.2,305.0 78.6,305.0 79.0,300.0 79.4,307.5 79.8,300.0 80.2,320.0 80.6,300.0 81.0,305.0 81.4,305.0 81.8,320.0 82.2,317.5 82.6,292.5 83.0,307.5 83.4,315.0 83.8,300.0 84.2,287.5 84.6,287.5 85.0,307.5 85.4,310.0 85.8,302.5 86.2,310.0 86.6,300.0 87.0,297.5 87.4,305.0 87.8,297.5 88.2,307.5 88.6,312.5 89.0,305.0 89.4,295.0 89.8,305.0 90.2,302.5 90.6,312.5 91.0,310.0 91.4,312.5 91.8,295.0 92.2,292.5 92.6,302.5 93.0,305.0 93.4,300.0 93.8,307.5 94.2,305.0 94.6,305.0 95.0,300.0 95.4,307.5 95.8,307.5 96.2,322.5 96.6,305.0 97.0,315.0 97.1,300.0 97.3,175.5 97.6,180.0 97.9,205.0 98.2,240.0 98.6,300.0 99.0,274.0 99.4,304.0 99.8,300.0 100.2,302.5 100.6,292.5 101.0,312.5 101.4,322.5 101.8,307.5 102.2,302.5 102.6,300.0 103.0,310.0 103.4,300.0 103.8,300.0 104.2,310.0 104.6,310.0 105.0,305.0 105.4,292.5 105.8,292.5 106.2,302.5 106.6,302.5 107.0,290.0 107.4,295.0 107.8,307.5 108.2,290.0 108.6,297.5 109.0,307.5 109.4,297.5 109.8,305.0 110.2,320.0 110.6,307.5 111.0,305.0 111.4,300.0 111.8,300.0 112.2,305.0 112.6,315.0 113.0,297.5 113.4,310.0 113.8,305.0 114.2,307.5 114.6,320.0 115.0,320.0 115.4,305.0 115.8,312.5 116.2,290.0 116.6,310.0 117.0,302.5 117.4,302.5 117.8,307.5 118.2,300.0 118.6,302.5 119.0,312.5 119.4,305.0 119.8,295.0 120.2,297.5 120.6,307.5 121.0,292.5 121.4,292.5 121.8,315.0 122.2,290.0 122.6,315.0 123.0,297.5 123.4,295.0 123.8,292.5 124.2,305.0 124.6,305.0 125.0,305.0 125.4,290.0 125.8,302.5 126.2,310.0 126.6,305.0 127.0,302.5 127.4,300.0 127.8,315.0 128.2,297.5 128.6,310.0 129.0,307.5 129.4,307.5 129.8,305.0 130.2,302.5 130.6,302.5 131.0,290.0 131.4,302.5 131.8,305.0 132.2,307.5 132.6,305.0 133.0,290.0 133.4,312.5 133.8,300.0 134.2,312.5 134.6,320.0 135.0,292.5 135.4,310.0 135.8,305.0 136.2,305.0 136.6,300.0 137.0,305.0 137.4,305.0 137.8,295.0 138.2,297.5 138.6,312.5 139.0,307.5 139.4,307.5 139.8,302.5 140.2,300.0 140.6,312.5 141.0,317.5 141.4,317.5 141.8,292.5 142.2,302.5 142.6,317.5 143.0,302.5 143.4,302.5 143.8,300.0 144.2,297.5 144.6,295.0 145.0,302.5 145.4,312.5 145.8,307.5 146.2,305.0 146.6,312.5 147.0,312.5 147.4,305.0 147.8,300.0 148.2,310.0 148.6,302.5 149.0,315.0 149.4,315.0 149.8,310.0 150.2,317.5 150.6,310.0 151.0,307.5 151.4,315.0 151.8,305.0 152.2,317.5 152.6,302.5 153.0,292.5 153.4,287.5 153.8,292.5 154.2,300.0 154.6,312.5 155.0,307.5 155.4,307.5 155.8,310.0 156.2,302.5 156.6,312.5 157.0,292.5 157.4,317.5 157.8,307.5 158.2,305.0 158.6,297.5 159.0,332.5 159.4,320.0 159.8,305.0 160.2,322.5 160.6,320.0 161.0,315.0 161.4,317.5 161.8,312.5 162.2,302.5 162.6,317.5 163.0,310.0 163.4,292.5 163.8,300.0 164.2,315.0 164.4,445.0 164.8,400.0 165.4,378.0 165.6,330.0 166.0,316.0 166.2,307.5 166.6,297.5 167.0,305.0 167.4,300.0 167.8,315.0 168.2,322.5 168.6,297.5 169.0,305.0 169.4,317.5 169.8,300.0 170.2,307.5 170.6,302.5 171.0,295.0 171.4,310.0 171.8,312.5 172.2,320.0 172.6,315.0 173.0,302.5 173.4,305.0 173.8,312.5 174.2,297.5 174.6,307.5 175.0,292.5 175.4,315.0 175.8,305.0 176.2,312.5 176.6,315.0 177.0,310.0 177.4,290.0 177.8,300.0 178.2,297.5 178.6,307.5 179.0,310.0 179.4,290.0 179.8,305.0 180.2,315.0 180.6,305.0 181.0,305.0 181.4,305.0 181.8,300.0 182.2,295.0 182.6,302.5 183.0,317.5 183.4,310.0 183.8,310.0 184.2,315.0 184.6,312.5 185.0,297.5 185.4,307.5 185.8,300.0 186.2,292.5 186.6,302.5 187.0,302.5 187.4,305.0 187.8,312.5 188.2,302.5 188.6,302.5 189.0,307.5 189.4,302.5 189.8,300.0 190.2,310.0 190.6,297.5 191.0,300.0 191.4,295.0 191.8,302.5 192.2,285.0 192.6,310.0 193.0,297.5 193.4,300.0 193.8,305.0 194.2,305.0 194.6,312.5 195.0,307.5 195.4,315.0 195.8,297.5 196.2,307.5 196.6,295.0 197.0,310.0 197.4,300.0 197.8,297.5 198.2,302.5 198.6,305.0 199.0,312.5 199.4,307.5 199.8,317.5 200.2,310.0 200.6,310.0 201.0,300.0 201.4,317.5 201.8,295.0 202.2,287.5 202.6,307.5 203.0,302.5 203.4,292.5 203.8,302.5 204.2,297.5 204.6,305.0 205.0,305.0 205.4,297.5 205.8,302.5 206.2,310.0 206.6,302.5 207.0,322.5 207.4,310.0 207.8,315.0 208.2,312.5 208.6,320.0 209.0,322.5 209.4,305.0 209.8,312.5 210.2,310.0 210.6,317.5 211.0,312.5 211.4,310.0 211.8,300.0 212.2,307.5 212.6,312.5 213.0,305.0 213.4,312.5 213.8,300.0 214.2,315.0 214.6,300.0 215.0,317.5 215.4,302.5 215.8,305.0 216.2,297.5 216.6,305.0 217.0,305.0 217.4,317.5 217.8,300.0 218.2,292.5 218.6,307.5 219.0,305.0 219.4,315.0 219.8,310.0 220.2,300.0 220.6,315.0 221.0,307.5 221.4,290.0 221.8,312.5 222.2,292.5 222.6,307.5 223.0,300.0 223.4,305.0 223.8,315.0 224.2,315.0 224.6,307.5 225.0,310.0 225.4,300.0 225.8,307.5 226.2,325.0 226.6,307.5 227.0,325.0 227.4,317.5 227.8,307.5 228.2,325.0 228.6,315.0 229.0,305.0 229.4,320.0 229.8,307.5 230.2,317.5 230.6,302.5 231.0,312.5 231.2,300.0 231.4,175.5 231.7,180.0 232.0,205.0 232.3,240.0 232.7,300.0 233.1,274.0 233.5,304.0 233.8,307.5 234.2,295.0 234.6,307.5 235.0,297.5 235.4,302.5 235.8,307.5 236.2,307.5 236.6,307.5 237.0,302.5 237.4,302.5 237.8,292.5 238.2,322.5 238.6,297.5 239.0,310.0 239.4,295.0 239.8,317.5 240.2,295.0 240.6,300.0 241.0,302.5 241.4,307.5 241.8,292.5 242.2,300.0 242.6,322.5 243.0,312.5 243.4,310.0 243.8,297.5 244.2,310.0 244.6,312.5 245.0,300.0 245.4,317.5 245.8,300.0 246.2,302.5 246.6,315.0 247.0,295.0 247.4,300.0 247.8,317.5 248.2,317.5 248.6,315.0 249.0,290.0 249.4,307.5 249.8,302.5 250.2,305.0 250.6,302.5 251.0,307.5 251.4,302.5 251.8,300.0 252.2,297.5 252.6,305.0 253.0,302.5 253.4,300.0 253.8,315.0 254.2,305.0 254.6,310.0 255.0,307.5 255.4,315.0 255.8,302.5 256.2,315.0 256.6,297.5 257.0,305.0 257.4,305.0 257.8,315.0 258.2,287.5 258.6,292.5 259.0,312.5 259.4,315.0 259.8,310.0 260.2,297.5 260.6,307.5 261.0,305.0 261.4,307.5 261.8,295.0 262.2,307.5 262.6,305.0 263.0,307.5 263.4,300.0 263.8,302.5 264.2,302.5 264.6,317.5 265.0,317.5 265.4,312.5 265.8,312.5 266.2,310.0 266.6,312.5 267.0,312.5 267.4,310.0 267.8,317.5 268.2,325.0 268.6,320.0 269.0,310.0 269.4,320.0 269.8,307.5 270.2,307.5 270.6,305.0 271.0,297.5 271.4,312.5 271.8,305.0 272.2,292.5 272.6,305.0 273.0,312.5 273.4,312.5 273.8,317.5 274.2,322.5 274.6,302.5 275.0,305.0 275.4,300.0 275.8,312.5 276.2,307.5 276.6,315.0 277.0,297.5 277.4,297.5 277.8,312.5 278.2,315.0 278.6,295.0 279.0,315.0 279.4,315.0 279.8,317.5 280.2,300.0 280.6,297.5 281.0,315.0 281.4,305.0 281.8,312.5 282.2,305.0 282.6,307.5 283.0,315.0 283.4,320.0 283.8,295.0 284.2,320.0 284.6,315.0 285.0,312.5 285.4,295.0 285.8,300.0 286.2,315.0 286.6,317.5 287.0,292.5 287.4,300.0 287.8,307.5 288.2,297.5 288.6,315.0 289.0,315.0 289.4,315.0 289.8,297.5 290.2,307.5 290.6,322.5 291.0,312.5 291.4,300.0 291.8,315.0 292.2,317.5 292.6,302.5 293.0,307.5 293.4,310.0 293.8,310.0 294.2,300.0 294.6,310.0 295.0,307.5 295.4,305.0 295.8,307.5 296.2,295.0 296.6,310.0 297.0,300.0 297.4,302.5 297.8,302.5 298.2,307.5 298.3,315.0 298.5,413.0 298.9,400.0 299.5,378.0 299.7,330.0 300.1,316.0 300.6,305.0 301.0,307.5 301.4,315.0 301.8,310.0 302.2,302.5 302.6,307.5 303.0,305.0 303.4,317.5 303.8,300.0 304.2,300.0 304.6,307.5 305.0,312.5 305.4,302.5 305.8,315.0 306.2,322.5 306.6,305.0 307.0,305.0 307.4,315.0 307.8,317.5 308.2,307.5 308.6,297.5 309.0,297.5 309.4,320.0 309.8,302.5 310.2,307.5 310.6,310.0 311.0,297.5 311.4,315.0 311.8,315.0 312.2,310.0 312.6,312.5 313.0,300.0 313.4,305.0 313.8,312.5 314.2,305.0 314.6,300.0 315.0,317.5 315.4,305.0 315.8,307.5 316.2,317.5 316.6,307.5 317.0,315.0 317.4,310.0 317.8,307.5 318.2,310.0 318.6,302.5 319.0,315.0 319.4,320.0 319.8,310.0 320.2,297.5 320.6,302.5 321.0,307.5 321.4,310.0 321.8,322.5 322.2,310.0 322.6,307.5 323.0,305.0 323.4,310.0 323.8,310.0 324.2,320.0 324.6,315.0 325.0,300.0 325.4,300.0 325.8,315.0 326.2,305.0 326.6,310.0 327.0,322.5 327.4,300.0 327.8,305.0 328.2,310.0 328.6,300.0 329.0,295.0 329.4,312.5 329.8,305.0 330.2,287.5 330.6,295.0 331.0,315.0 331.4,297.5 331.8,297.5 332.2,297.5 332.6,290.0 333.0,292.5 333.4,305.0 333.8,310.0 334.2,305.0 334.6,305.0 335.0,315.0 335.4,310.0 335.8,320.0 336.2,312.5 336.6,310.0 337.0,295.0 337.4,295.0 337.8,310.0 338.2,302.5 338.6,297.5 339.0,290.0 339.4,300.0 339.8,312.5 340.2,297.5 340.6,302.5 341.0,300.0 341.4,312.5 341.8,297.5 342.2,312.5 342.6,310.0 343.0,310.0 343.4,315.0 343.8,315.0 344.2,300.0 344.6,300.0 345.0,315.0 345.4,312.5 345.8,302.5 346.2,300.0 346.6,315.0 347.0,320.0 347.4,300.0 347.8,315.0 348.2,307.5 348.6,305.0 349.0,292.5 349.4,312.5 349.8,295.0 350.2,312.5 350.6,300.0 351.0,305.0 351.4,307.5 351.8,310.0 352.2,295.0 352.6,310.0 353.0,307.5 353.4,312.5 353.8,302.5 354.2,280.0 354.6,305.0 355.0,300.0 355.4,302.5 355.8,295.0 356.2,285.0 356.6,295.0 357.0,305.0 357.4,307.5 357.8,307.5 358.2,315.0 358.6,300.0 359.0,292.5 359.4,310.0 359.8,310.0 360.2,312.5 360.6,305.0 361.0,297.5 361.4,315.0 361.8,295.0 362.2,315.0 362.6,312.5 363.0,320.0 363.4,295.0 363.8,295.0 364.2,305.0 364.6,300.0 365.0,312.5 365.4,300.0 365.6,175.5 365.9,180.0 366.2,205.0 366.5,240.0 366.9,300.0 367.3,274.0 367.7,304.0 367.8,295.0 368.2,307.5 368.6,310.0 369.0,297.5 369.4,295.0 369.8,302.5 370.2,295.0 370.6,305.0 371.0,292.5 371.4,292.5 371.8,297.5 372.2,287.5 372.6,300.0 373.0,317.5 373.4,287.5 373.8,297.5 374.2,312.5 374.6,300.0 375.0,297.5 375.4,310.0 375.8,302.5 376.2,305.0 376.6,305.0 377.0,292.5 377.4,310.0 377.8,300.0 378.2,320.0 378.6,295.0 379.0,287.5 379.4,310.0 379.8,295.0 380.2,302.5 380.6,302.5 381.0,310.0 381.4,310.0 381.8,307.5 382.2,307.5 382.6,302.5 383.0,300.0 383.4,300.0 383.8,302.5 384.2,300.0 384.6,295.0 385.0,305.0 385.4,312.5 385.8,290.0 386.2,300.0 386.6,287.5 387.0,290.0 387.4,305.0 387.8,312.5 388.2,310.0 388.6,312.5 389.0,312.5 389.4,292.5 389.8,305.0 390.2,312.5 390.6,317.5 391.0,307.5 391.4,305.0 391.8,312.5 392.2,302.5 392.6,292.5 393.0,297.5 393.4,307.5 393.8,295.0 394.2,307.5 394.6,315.0 395.0,285.0 395.4,307.5 395.8,287.5 396.2,292.5 396.6,297.5 397.0,315.0 397.4,295.0 397.8,300.0 398.2,297.5 398.6,297.5 399.0,302.5 399.4,300.0 399.8,297.5 400.2,312.5 400.6,312.5 401.0,312.5 401.4,305.0 401.8,292.5 402.2,300.0 402.6,302.5 403.0,310.0 403.4,312.5 403.8,310.0 404.2,300.0 404.6,297.5 405.0,312.5 405.4,305.0 405.8,302.5 406.2,300.0 406.6,307.5 407.0,307.5 407.4,312.5 407.8,305.0 408.2,302.5 408.6,300.0 409.0,302.5 409.4,292.5 409.8,300.0 410.2,307.5 410.6,312.5 411.0,302.5 411.4,295.0 411.8,287.5 412.2,300.0 412.6,315.0 413.0,302.5 413.4,302.5 413.8,317.5 414.2,307.5 414.6,297.5 415.0,305.0 415.4,310.0 415.8,305.0 416.2,300.0 416.6,315.0 417.0,297.5 417.4,295.0 417.8,302.5 418.2,305.0 418.6,300.0 419.0,297.5 419.4,307.5 419.8,312.5 420.2,320.0 420.6,307.5 421.0,310.0 421.4,302.5 421.8,305.0 422.2,305.0 422.6,307.5 423.0,317.5 423.4,302.5 423.8,305.0 424.2,302.5 424.6,295.0 425.0,300.0 425.4,292.5 425.8,300.0 426.2,305.0 426.6,315.0 427.0,300.0 427.4,312.5 427.8,312.5 428.2,312.5 428.6,320.0 429.0,290.0 429.4,305.0 429.8,302.5 430.2,305.0 430.6,305.0 431.0,310.0 431.4,310.0 431.8,292.5 432.2,312.5 432.5,315.0 432.7,447.0 433.1,400.0 433.7,378.0 433.9,330.0 434.3,316.0 434.6,292.5 435.0,290.0 435.4,325.0 435.8,307.5 436.2,307.5 436.6,305.0 437.0,307.5 437.4,307.5 437.8,307.5 438.2,310.0 438.6,312.5 439.0,310.0 439.4,307.5 439.8,305.0 440.2,315.0 440.6,312.5 441.0,320.0 441.4,310.0 441.8,302.5 442.2,307.5 442.6,322.5 443.0,315.0 443.4,307.5 443.8,302.5 444.2,307.5 444.6,295.0 445.0,290.0 445.4,302.5 445.8,300.0 446.2,302.5 446.6,300.0 447.0,305.0 447.4,297.5 447.8,292.5 448.2,292.5 448.6,302.5 449.0,310.0 449.4,297.5 449.8,295.0 450.2,302.5 450.6,312.5 451.0,310.0 451.4,305.0 451.8,317.5 452.2,317.5 452.6,317.5 453.0,310.0 453.4,310.0 453.8,297.5 454.2,300.0 454.6,302.5 455.0,302.5 455.4,310.0 455.8,287.5 456.2,300.0 456.6,292.5 457.0,300.0 457.4,305.0 457.8,300.0 458.2,302.5 458.6,300.0 459.0,312.5 459.4,310.0 459.8,282.5 460.2,307.5 460.6,310.0 461.0,315.0 461.4,310.0 461.8,297.5 462.2,292.5 462.6,317.5 463.0,302.5 463.4,315.0 463.8,307.5 464.2,312.5 464.6,287.5 465.0,300.0 465.4,287.5 465.8,310.0 466.2,300.0 466.6,312.5 467.0,307.5 467.4,310.0 467.8,300.0 468.2,302.5 468.6,300.0 469.0,305.0 469.4,327.5 469.8,300.0 470.2,300.0 470.6,305.0 471.0,315.0 471.4,297.5 471.8,307.5 472.2,322.5 472.6,315.0 473.0,312.5 473.4,297.5 473.8,307.5 474.2,300.0 474.6,310.0 475.0,315.0 475.4,305.0 475.8,305.0 476.2,317.5 476.6,310.0 477.0,305.0 477.4,300.0 477.8,297.5 478.2,292.5 478.6,312.5 479.0,300.0 479.4,305.0 479.8,297.5 480.2,305.0 480.6,300.0 481.0,302.5 481.4,292.5 481.8,292.5 482.2,315.0 482.6,302.5 483.0,307.5 483.4,317.5 483.8,292.5 484.2,307.5 484.6,297.5 485.0,315.0 485.4,292.5 485.8,295.0 486.2,280.0 486.6,290.0 487.0,310.0 487.4,300.0 487.8,310.0 488.2,297.5 488.6,312.5 489.0,292.5 489.4,307.5 489.8,307.5 490.2,300.0 490.6,317.5 491.0,307.5 491.4,302.5 491.8,310.0 492.2,322.5 492.6,312.5 493.0,300.0 493.4,312.5 493.8,300.0 494.2,305.0 494.6,310.0 495.0,295.0 495.4,305.0 495.8,300.0 496.2,295.0 496.6,307.5 497.0,302.5 497.4,307.5 497.8,317.5 498.2,317.5 498.6,315.0 499.0,322.5 499.4,317.5 499.5,300.0 499.7,189.0 500.0,180.0 500.3,205.0 500.6,240.0 501.0,300.0 501.4,274.0 501.8,304.0 502.2,310.0 502.6,295.0 503.0,310.0 503.4,295.0 503.8,305.0 504.2,310.0 504.6,302.5 505.0,297.5 505.4,305.0 505.8,307.5 506.2,292.5 506.6,315.0 507.0,307.5 507.4,300.0 507.8,300.0 508.2,312.5 508.6,320.0 509.0,312.5 509.4,315.0 509.8,305.0 510.2,307.5 510.6,310.0 511.0,302.5 511.4,310.0 511.8,310.0 512.2,322.5 512.6,315.0 513.0,302.5 513.4,302.5 513.8,307.5 514.2,300.0 514.6,302.5 515.0,307.5 515.4,312.5 515.8,307.5 516.2,317.5 516.6,320.0 517.0,310.0 517.4,317.5 517.8,312.5 518.2,290.0 518.6,295.0 519.0,302.5 519.4,307.5 519.8,307.5 520.2,295.0 520.6,305.0 521.0,300.0 521.4,305.0 521.8,305.0 522.2,292.5 522.6,300.0 523.0,300.0 523.4,310.0 523.8,300.0 524.2,292.5 524.6,300.0 525.0,310.0 525.4,310.0 525.8,297.5 526.2,305.0 526.6,305.0 527.0,297.5 527.4,302.5 527.8,315.0 528.2,297.5 528.6,290.0 529.0,305.0 529.4,300.0 529.8,292.5 530.2,315.0 530.6,312.5 531.0,300.0 531.4,300.0 531.8,302.5 532.2,295.0 532.6,315.0 533.0,305.0 533.4,307.5 533.8,305.0 534.2,317.5 534.6,307.5 535.0,317.5 535.4,307.5 535.8,297.5 536.2,305.0 536.6,307.5 537.0,312.5 537.4,297.5 537.8,295.0 538.2,297.5 538.6,287.5 539.0,297.5 539.4,295.0 539.8,307.5 540.2,300.0 540.6,307.5 541.0,297.5 541.4,310.0 541.8,315.0 542.2,302.5 542.6,295.0 543.0,300.0 543.4,295.0 543.8,305.0 544.2,307.5 544.6,307.5 545.0,312.5 545.4,300.0 545.8,305.0 546.2,292.5 546.6,302.5 547.0,300.0 547.4,330.0 547.8,300.0 548.2,312.5 548.6,300.0 549.0,287.5 549.4,302.5 549.8,300.0 550.2,300.0 550.6,312.5 551.0,297.5 551.4,300.0 551.8,317.5 552.2,302.5 552.6,302.5 553.0,300.0 553.4,290.0 553.8,297.5 554.2,302.5 554.6,307.5 555.0,312.5 555.4,307.5 555.8,295.0 556.2,310.0 556.6,310.0 557.0,310.0 557.4,310.0 557.8,322.5 558.2,302.5 558.6,300.0 559.0,315.0 559.4,317.5 559.8,305.0 560.2,320.0 560.6,302.5 561.0,307.5 561.4,297.5 561.8,302.5 562.2,317.5 562.6,315.0 563.0,312.5 563.4,315.0 563.8,290.0 564.2,290.0 564.6,312.5 565.0,315.0 565.4,307.5 565.8,305.0 566.2,310.0 566.6,315.0 566.8,456.0 567.2,400.0 567.8,378.0 568.0,330.0 568.4,316.0 568.6,302.5 569.0,312.5 569.4,302.5 569.8,305.0 570.2,302.5 570.6,305.0 571.0,305.0 571.4,305.0 571.8,302.5 572.2,305.0 572.6,307.5 573.0,290.0 573.4,307.5 573.8,300.0 574.2,305.0 574.6,307.5 575.0,307.5 575.4,300.0 575.8,310.0 576.2,302.5 576.6,300.0 577.0,300.0 577.4,290.0 577.8,310.0 578.2,312.5 578.6,307.5 579.0,302.5 579.4,297.5 579.8,300.0 580.2,315.0 580.6,300.0 581.0,310.0 581.4,302.5 581.8,297.5 582.2,310.0 582.6,302.5 583.0,297.5 583.4,302.5 583.8,300.0 584.2,290.0 584.6,295.0 585.0,292.5 585.4,310.0 585.8,312.5 586.2,292.5 586.6,292.5 587.0,310.0 587.4,300.0 587.8,312.5 588.2,295.0 588.6,295.0 589.0,297.5 589.4,300.0 589.8,300.0 590.2,290.0 590.6,305.0 591.0,310.0 591.4,305.0 591.8,312.5 592.2,305.0 592.6,295.0 593.0,287.5 593.4,300.0 593.8,295.0 594.2,305.0 594.6,290.0 595.0,317.5 595.4,302.5 595.8,302.5 596.2,295.0 596.6,310.0 597.0,312.5 597.4,290.0 597.8,307.5 598.2,302.5 598.6,312.5 599.0,297.5 599.4,300.0 599.8,315.0 600.2,302.5 600.6,312.5 601.0,305.0 601.4,300.0 601.8,292.5 602.2,302.5 602.6,302.5 603.0,302.5 603.4,302.5 603.8,312.5 604.2,305.0 604.6,307.5 605.0,305.0 605.4,310.0 605.8,320.0 606.2,307.5 606.6,300.0 607.0,322.5 607.4,307.5 607.8,312.5 608.2,302.5 608.6,292.5 609.0,305.0 609.4,305.0 609.8,307.5 610.2,302.5 610.6,315.0 611.0,310.0 611.4,302.5 611.8,300.0 612.2,290.0 612.6,305.0 613.0,315.0 613.4,307.5 613.8,312.5 614.2,305.0 614.6,297.5 615.0,302.5 615.4,305.0 615.8,315.0 616.2,315.0 616.6,297.5 617.0,317.5 617.4,300.0 617.8,300.0 618.2,295.0 618.6,292.5 619.0,305.0 619.4,312.5 619.8,300.0 620.2,315.0 620.6,305.0 621.0,295.0 621.4,302.5 621.8,312.5 622.2,315.0 622.6,290.0 623.0,320.0 623.4,305.0 623.8,310.0 624.2,302.5 624.6,300.0 625.0,320.0 625.4,297.5 625.8,315.0 626.2,315.0 626.6,305.0 627.0,305.0 627.4,292.5 627.8,305.0 628.2,310.0 628.6,297.5 629.0,300.0 629.4,292.5 629.8,310.0 630.2,305.0 630.6,297.5 631.0,295.0 631.4,297.5 631.8,290.0 632.2,317.5 632.6,312.5 633.0,297.5 633.4,302.5 633.7,300.0 633.9,175.5 634.2,180.0 634.5,205.0 634.8,240.0 635.2,300.0 635.6,274.0 636.0,304.0 636.2,317.5 636.6,307.5 637.0,315.0 637.4,312.5 637.8,312.5 638.2,312.5 638.6,300.0 639.0,315.0 639.4,297.5 639.8,320.0 640.2,300.0 640.6,295.0 641.0,300.0 641.4,305.0 641.8,312.5 642.2,310.0 642.6,305.0 643.0,297.5 643.4,295.0 643.8,310.0 644.2,310.0 644.6,310.0 645.0,310.0 645.4,305.0 645.8,302.5 646.2,307.5 646.6,297.5 647.0,302.5 647.4,320.0 647.8,310.0 648.2,310.0 648.6,310.0 649.0,322.5 649.4,317.5 649.8,300.0 650.2,315.0 650.6,305.0 651.0,302.5 651.4,320.0 651.8,312.5 652.2,300.0 652.6,292.5 653.0,305.0 653.4,307.5 653.8,297.5 654.2,300.0 654.6,305.0 655.0,320.0 655.4,297.5 655.8,307.5 656.2,302.5 656.6,300.0 657.0,302.5 657.4,310.0 657.8,307.5 658.2,300.0 658.6,305.0 659.0,312.5 659.4,295.0 659.8,310.0 660.2,320.0 660.6,310.0 661.0,307.5 661.4,315.0 661.8,305.0 662.2,302.5 662.6,305.0 663.0,315.0 663.4,310.0 663.8,302.5 664.2,312.5 664.6,305.0 665.0,295.0 665.4,307.5 665.8,315.0 666.2,297.5 666.6,307.5 667.0,305.0 667.4,315.0 667.8,310.0 668.2,322.5 668.6,317.5 669.0,320.0 669.4,295.0 669.8,310.0 670.2,302.5 670.6,305.0 671.0,302.5 671.4,305.0 671.8,320.0 672.2,300.0 672.6,300.0 673.0,297.5 673.4,310.0 673.8,302.5 674.2,295.0 674.6,300.0 675.0,305.0 675.4,300.0 675.8,312.5 676.2,307.5 676.6,310.0 677.0,302.5 677.4,312.5 677.8,305.0 678.2,310.0 678.6,307.5 679.0,310.0 679.4,307.5 679.8,310.0 680.2,310.0 680.6,297.5 681.0,297.5 681.4,315.0 681.8,300.0 682.2,320.0 682.6,305.0 683.0,307.5 683.4,292.5 683.8,300.0 684.2,307.5 684.6,307.5 685.0,307.5 685.4,310.0 685.8,310.0 686.2,312.5 686.6,297.5 687.0,307.5 687.4,305.0 687.8,310.0 688.2,325.0 688.6,302.5 689.0,302.5 689.4,305.0 689.8,305.0 690.2,302.5 690.6,320.0 691.0,310.0 691.4,285.0 691.8,295.0 692.2,305.0 692.6,302.5 693.0,327.5 693.4,297.5 693.8,302.5 694.2,295.0 694.6,307.5 695.0,310.0 695.4,305.0 695.8,305.0 696.2,312.5 696.6,300.0 697.0,305.0 697.4,300.0 697.8,310.0 698.2,310.0 698.6,295.0 699.0,310.0 699.4,315.0 699.8,312.5 700.2,302.5 700.6,307.5 700.8,315.0 701.0,436.0 701.4,400.0 702.0,378.0 702.2,330.0 702.6,316.0 703.0,300.0 703.4,300.0 703.8,300.0 704.2,315.0 704.6,295.0 705.0,292.5 705.4,300.0 705.8,305.0 706.2,307.5 706.6,322.5 707.0,310.0 707.4,317.5 707.8,305.0 708.2,297.5 708.6,310.0 709.0,305.0 709.4,315.0 709.8,312.5 710.2,300.0 710.6,302.5 711.0,305.0 711.4,305.0 711.8,302.5 712.2,315.0 712.6,287.5 713.0,305.0 713.4,307.5 713.8,292.5 714.2,302.5 714.6,295.0 715.0,305.0 715.4,307.5 715.8,305.0 716.2,300.0 716.6,315.0 717.0,302.5 717.4,295.0 717.8,302.5 718.2,305.0 718.6,297.5 719.0,305.0 719.4,302.5 719.8,302.5 720.2,305.0 720.6,312.5 721.0,300.0 721.4,305.0 721.8,312.5 722.2,297.5 722.6,315.0 723.0,297.5 723.4,305.0 723.8,290.0 724.2,297.5 724.6,292.5 725.0,295.0 725.4,297.5 725.8,305.0 726.2,300.0 726.6,292.5 727.0,300.0 727.4,307.5 727.8,310.0 728.2,305.0 728.6,312.5 729.0,297.5 729.4,305.0 729.8,302.5 730.2,305.0 730.6,302.5 731.0,305.0 731.4,307.5 731.8,307.5 732.2,317.5 732.6,320.0 733.0,320.0 733.4,292.5 733.8,310.0 734.2,310.0 734.6,300.0 735.0,320.0 735.4,305.0 735.8,300.0 736.2,305.0 736.6,320.0 737.0,310.0 737.4,307.5 737.8,305.0 738.2,305.0 738.6,305.0 739.0,297.5 739.4,307.5 739.8,312.5 740.2,302.5 740.6,315.0 741.0,305.0 741.4,300.0 741.8,302.5 742.2,310.0 742.6,292.5 743.0,300.0 743.4,302.5 743.8,310.0 744.2,300.0 744.6,305.0 745.0,312.5 745.4,305.0 745.8,295.0 746.2,312.5 746.6,305.0 747.0,320.0 747.4,322.5 747.8,302.5 748.2,320.0 748.6,310.0 749.0,312.5 749.4,317.5 749.8,322.5 750.2,290.0 750.6,307.5 751.0,317.5 751.4,317.5 751.8,312.5 752.2,302.5 752.6,325.0 753.0,302.5 753.4,315.0 753.8,307.5 754.2,302.5 754.6,302.5 755.0,305.0 755.4,302.5 755.8,307.5 756.2,300.0 756.6,315.0 757.0,290.0 757.4,300.0 757.8,305.0 758.2,310.0 758.6,290.0 759.0,292.5 759.4,297.5 759.8,300.0 760.2,307.5 760.6,295.0 761.0,297.5 761.4,317.5 761.8,302.5 762.2,305.0 762.6,312.5 763.0,295.0 763.4,297.5 763.8,312.5 764.2,305.0 764.6,297.5 765.0,315.0 765.4,292.5 765.8,290.0 766.2,307.5 766.6,302.5 767.0,307.5 767.4,320.0 767.8,300.0 768.0,186.0 768.3,180.0 768.6,205.0 768.9,240.0 769.3,300.0 769.7,274.0 770.1,304.0 770.6,302.5 771.0,305.0 771.4,320.0 771.8,297.5 772.2,312.5 772.6,297.5 773.0,315.0 773.4,310.0 773.8,290.0 774.2,295.0 774.6,315.0 775.0,315.0 775.4,310.0 775.8,312.5 776.2,307.5 776.6,312.5 777.0,310.0 777.4,305.0 777.8,315.0 778.2,310.0 778.6,300.0 779.0,307.5 779.4,312.5 779.8,315.0 780.2,315.0 780.6,297.5 781.0,297.5 781.4,300.0 781.8,302.5 782.2,307.5 782.6,305.0 783.0,297.5 783.4,307.5 783.8,297.5 784.2,310.0 784.6,292.5 785.0,305.0 785.4,312.5 785.8,295.0 786.2,297.5 786.6,295.0 787.0,295.0 787.4,305.0 787.8,300.0 788.2,290.0 788.6,305.0 789.0,297.5 789.4,295.0 789.8,292.5 790.2,297.5 790.6,305.0 791.0,305.0 791.4,300.0 791.8,310.0 792.2,302.5 792.6,310.0 793.0,312.5 793.4,290.0 793.8,297.5 794.2,310.0 794.6,300.0 795.0,300.0 795.4,312.5 795.8,317.5 796.2,305.0 796.6,300.0 797.0,312.5 797.4,300.0 797.8,295.0 798.2,305.0 798.6,305.0 799.0,305.0 799.4,300.0 799.8,320.0 800.2,300.0 800.6,310.0 801.0,300.0 801.4,315.0 801.8,317.5 802.2,300.0 802.6,307.5 803.0,302.5 803.4,305.0 803.8,297.5 804.2,305.0 804.6,317.5 805.0,300.0 805.4,307.5 805.8,297.5 806.2,297.5 806.6,297.5 807.0,300.0 807.4,310.0 807.8,312.5 808.2,300.0 808.6,307.5 809.0,310.0 809.4,300.0 809.8,292.5 810.2,315.0 810.6,305.0 811.0,305.0 811.4,310.0 811.8,315.0 812.2,302.5 812.6,292.5 813.0,300.0 813.4,307.5 813.8,315.0 814.2,305.0 814.6,297.5 815.0,302.5 815.4,300.0 815.8,297.5 816.2,297.5 816.6,302.5 817.0,305.0 817.4,307.5 817.8,310.0 818.2,302.5 818.6,307.5 819.0,300.0 819.4,307.5 819.8,302.5 820.2,297.5 820.6,297.5 821.0,307.5 821.4,312.5 821.8,315.0 822.2,317.5 822.6,305.0 823.0,317.5 823.4,295.0 823.8,292.5 824.2,297.5 824.6,292.5 825.0,300.0 825.4,300.0 825.8,312.5 826.2,302.5 826.6,305.0 827.0,310.0 827.4,297.5 827.8,307.5 828.2,310.0 828.6,305.0 829.0,315.0 829.4,317.5 829.8,290.0 830.2,305.0 830.6,307.5 831.0,320.0 831.4,310.0 831.8,302.5 832.2,305.0 832.6,310.0 833.0,312.5 833.4,307.5 833.8,310.0 834.2,310.0 834.6,322.5 834.9,315.0 835.1,444.0 835.5,400.0 836.1,378.0 836.3,330.0 836.7,316.0 837.0,307.5 837.4,287.5 837.8,292.5 838.2,302.5 838.6,312.5 839.0,300.0 839.4,302.5 839.8,307.5 840.2,310.0 840.6,305.0 841.0,312.5 841.4,310.0 841.8,302.5 842.2,297.5 842.6,307.5 843.0,307.5 843.4,302.5 843.8,300.0 844.2,312.5 844.6,302.5 845.0,307.5 845.4,302.5 845.8,300.0 846.2,307.5 846.6,295.0 847.0,305.0 847.4,302.5 847.8,292.5 848.2,307.5 848.6,300.0 849.0,302.5 849.4,300.0 849.8,307.5 850.2,300.0 850.6,305.0 851.0,310.0 851.4,305.0 851.8,305.0 852.2,305.0 852.6,307.5 853.0,297.5 853.4,297.5 853.8,307.5 854.2,295.0 854.6,307.5 855.0,290.0 855.4,307.5 855.8,300.0 856.2,285.0 856.6,310.0 857.0,305.0 857.4,307.5 857.8,310.0 858.2,310.0 858.6,295.0 859.0,300.0 859.4,305.0 859.8,310.0 860.2,302.5 860.6,297.5 861.0,317.5 861.4,307.5 861.8,312.5 862.2,305.0 862.6,300.0 863.0,307.5 863.4,312.5 863.8,302.5 864.2,310.0 864.6,295.0 865.0,300.0 865.4,295.0 865.8,320.0 866.2,310.0 866.6,317.5 867.0,300.0 867.4,315.0 867.8,310.0 868.2,292.5 868.6,312.5 869.0,300.0 869.4,302.5 869.8,320.0 870.2,315.0 870.6,302.5 871.0,302.5 871.4,307.5 871.8,292.5 872.2,310.0 872.6,302.5 873.0,310.0 873.4,305.0 873.8,307.5 874.2,297.5 874.6,300.0 875.0,300.0 875.4,317.5 875.8,295.0 876.2,300.0 876.6,300.0 877.0,310.0 877.4,307.5 877.8,307.5 878.2,300.0 878.6,297.5 879.0,315.0 879.4,305.0 879.8,302.5 880.2,312.5 880.6,315.0 881.0,297.5 881.4,307.5 881.8,300.0 882.2,297.5 882.6,315.0 883.0,307.5 883.4,312.5 883.8,295.0 884.2,305.0 884.6,315.0 885.0,315.0 885.4,307.5 885.8,307.5 886.2,305.0 886.6,305.0 887.0,312.5 887.4,300.0 887.8,312.5 888.2,302.5 888.6,297.5 889.0,305.0 889.4,295.0 889.8,292.5 890.2,297.5 890.6,312.5 891.0,307.5 891.4,305.0 891.8,302.5 892.2,320.0 892.6,307.5 893.0,315.0 893.4,300.0 893.8,310.0 894.2,300.0 894.6,315.0 895.0,307.5 895.4,300.0 895.8,310.0 896.2,310.0 896.6,317.5 897.0,292.5 897.4,310.0 897.8,305.0 898.2,297.5 898.6,295.0 899.0,295.0 899.4,292.5 899.8,305.0 900.2,310.0 900.6,307.5 901.0,302.5 901.4,297.5 901.8,305.0 901.9,300.0 902.1,175.5 902.4,180.0 902.7,205.0 903.0,240.0 903.4,300.0 903.8,274.0 904.2,304.0 904.6,300.0 905.0,305.0 905.4,305.0 905.8,310.0 906.2,315.0 906.6,307.5 907.0,305.0 907.4,292.5 907.8,305.0 908.2,317.5 908.6,307.5 909.0,295.0 909.4,307.5 909.8,322.5 910.2,310.0 910.6,310.0 911.0,320.0 911.4,310.0 911.8,322.5 912.2,315.0 912.6,312.5 913.0,302.5 913.4,302.5 913.8,317.5 914.2,317.5 914.6,292.5 915.0,322.5 915.4,305.0 915.8,297.5 916.2,312.5 916.6,312.5 917.0,305.0 917.4,300.0 917.8,302.5 918.2,295.0 918.6,315.0 919.0,322.5 919.4,315.0 919.8,305.0 920.2,305.0 920.6,310.0 921.0,325.0 921.4,312.5 921.8,310.0 922.2,300.0 922.6,305.0 923.0,307.5 923.4,297.5 923.8,325.0 924.2,325.0 924.6,302.5 925.0,302.5 925.4,310.0 925.8,310.0 926.2,295.0 926.6,302.5 927.0,310.0 927.4,300.0 927.8,295.0 928.2,320.0 928.6,315.0 929.0,302.5 929.4,310.0 929.8,302.5 930.2,307.5 930.6,302.5 931.0,307.5 931.4,290.0 931.8,292.5 932.2,290.0 932.6,297.5 933.0,295.0 933.4,302.5 933.8,310.0 934.2,305.0 934.6,302.5 935.0,320.0 935.4,297.5 935.8,315.0 936.2,307.5 936.6,295.0 937.0,292.5 937.4,305.0 937.8,310.0 938.2,307.5 938.6,297.5 939.0,302.5 939.4,290.0 939.8,305.0 940.2,307.5 940.6,300.0 941.0,297.5 941.4,310.0 941.8,310.0 942.2,310.0 942.6,295.0 943.0,307.5 943.4,302.5 943.8,297.5 944.2,312.5 944.6,332.5 945.0,310.0 945.4,305.0 945.8,300.0 946.2,297.5 946.6,320.0 947.0,302.5 947.4,310.0 947.8,305.0 948.2,310.0 948.6,290.0 949.0,305.0 949.4,297.5 949.8,285.0 950.2,312.5 950.6,320.0 951.0,310.0 951.4,312.5 951.8,302.5 952.2,310.0 952.6,312.5 953.0,300.0 953.4,320.0 953.8,310.0 954.2,315.0 954.6,305.0 955.0,307.5 955.4,307.5 955.8,302.5 956.2,312.5 956.6,312.5 957.0,302.5 957.4,307.5 957.8,300.0 958.2,305.0 958.6,312.5 959.0,297.5 959.4,315.0 959.8,307.5 960.2,310.0 960.6,317.5 961.0,300.0 961.4,302.5 961.8,307.5 962.2,310.0 962.6,302.5 963.0,307.5 963.4,307.5 963.8,310.0 964.2,302.5 964.6,295.0 965.0,310.0 965.4,312.5 965.8,310.0 966.2,300.0 966.6,312.5 967.0,312.5 967.4,302.5 967.8,310.0 968.2,312.5 968.6,300.0 969.0,315.0 969.2,443.0 969.6,400.0 970.2,378.0 970.4,330.0 970.8,316.0 971.0,310.0 971.4,312.5 971.8,305.0 972.2,300.0 972.6,310.0 973.0,302.5 973.4,305.0 973.8,315.0 974.2,302.5 974.6,320.0 975.0,292.5 975.4,270.0 975.8,300.0 976.2,305.0 976.6,317.5 977.0,295.0 977.4,297.5 977.8,295.0 978.2,305.0 978.6,310.0 979.0,305.0 979.4,310.0 979.8,317.5 980.2,297.5 980.6,302.5 981.0,295.0 981.4,307.5 981.8,310.0 982.2,312.5 982.6,310.0 983.0,300.0 983.4,302.5 983.8,305.0 984.2,320.0 984.6,315.0 985.0,302.5 985.4,312.5 985.8,297.5 986.2,300.0 986.6,315.0 987.0,305.0 987.4,297.5 987.8,305.0 988.2,302.5 988.6,315.0 989.0,317.5 989.4,312.5 989.8,302.5 990.2,297.5 990.6,295.0 991.0,305.0 991.4,312.5 991.8,295.0 992.2,307.5 992.6,317.5 993.0,292.5 993.4,300.0 993.8,317.5 994.2,305.0 994.6,292.5 995.0,297.5 995.4,292.5 995.8,300.0 996.2,320.0 996.6,297.5 997.0,300.0 997.4,307.5 997.8,297.5 998.2,310.0 998.6,307.5 999.0,302.5 999.4,302.5 999.8,317.5 1000.2,300.0 1000.6,287.5 1001.0,305.0 1001.4,295.0 1001.8,300.0 1002.2,310.0 1002.6,297.5 1003.0,307.5 1003.4,302.5 1003.8,302.5 1004.2,317.5 1004.6,290.0 1005.0,300.0 1005.4,305.0 1005.8,307.5 1006.2,292.5 1006.6,305.0 1007.0,302.5 1007.4,320.0 1007.8,310.0 1008.2,297.5 1008.6,307.5 1009.0,292.5 1009.4,305.0 1009.8,315.0 1010.2,312.5 1010.6,305.0 1011.0,315.0 1011.4,300.0 1011.8,307.5 1012.2,310.0 1012.6,307.5 1013.0,305.0 1013.4,302.5 1013.8,290.0 1014.2,305.0 1014.6,302.5 1015.0,302.5 1015.4,302.5 1015.8,302.5 1016.2,310.0 1016.6,307.5 1017.0,292.5 1017.4,297.5 1017.8,300.0 1018.2,300.0 1018.6,305.0 1019.0,297.5 1019.4,307.5 1019.8,297.5 1020.2,317.5 1020.6,295.0 1021.0,310.0 1021.4,305.0 1021.8,310.0 1022.2,302.5 1022.6,292.5 1023.0,302.5 1023.4,312.5 1023.8,305.0 1024.2,305.0 1024.6,307.5 1025.0,310.0 1025.4,300.0 1025.8,317.5 1026.2,295.0 1026.6,307.5 1027.0,300.0 1027.4,297.5 1027.8,295.0 1028.2,302.5 1028.6,302.5 1029.0,287.5 1029.4,297.5 1029.8,290.0 1030.2,297.5 1030.6,307.5 1031.0,310.0 1031.4,305.0 1031.8,305.0 1032.2,300.0 1032.6,300.0 1033.0,320.0 1033.4,300.0 1033.8,295.0 1034.2,317.5 1034.6,305.0 1035.0,320.0 1035.4,305.0 1035.8,312.5 1036.1,300.0 1036.3,186.0 1036.6,180.0 1036.9,205.0 1037.2,240.0 1037.6,300.0 1038.0,274.0 1038.4,304.0 1038.6,312.5 1039.0,317.5 1039.4,307.5 1039.8,312.5 1040.2,312.5 1040.6,312.5 1041.0,310.0 1041.4,317.5 1041.8,312.5 1042.2,305.0 1042.6,317.5 1043.0,312.5 1043.4,327.5 1043.8,307.5 1044.2,305.0 1044.6,307.5 1045.0,310.0 1045.4,300.0 1045.8,307.5 1046.2,310.0 1046.6,307.5 1047.0,300.0 1047.4,315.0 1047.8,310.0 1048.2,307.5 1048.6,302.5 1049.0,300.0 1049.4,302.5 1049.8,297.5 1050.2,300.0 1050.6,315.0 1051.0,290.0 1051.4,315.0 1051.8,305.0 1052.2,317.5 1052.6,310.0 1053.0,315.0 1053.4,305.0 1053.8,310.0 1054.2,310.0 1054.6,307.5 1055.0,302.5 1055.4,300.0 1055.8,312.5 1056.2,302.5 1056.6,295.0 1057.0,307.5 1057.4,305.0 1057.8,307.5 1058.2,292.5 1058.6,312.5 1059.0,295.0 1059.4,317.5 1059.8,305.0 1060.2,292.5 1060.6,300.0 1061.0,307.5 1061.4,300.0 1061.8,302.5 1062.2,302.5 1062.6,310.0 1063.0,307.5 1063.4,317.5 1063.8,292.5 1064.2,302.5 1064.6,307.5 1065.0,305.0 1065.4,317.5 1065.8,297.5 1066.2,315.0 1066.6,310.0 1067.0,295.0 1067.4,310.0 1067.8,287.5 1068.2,307.5 1068.6,297.5 1069.0,300.0 1069.4,307.5 1069.8,297.5 1070.2,300.0 1070.6,295.0 1071.0,305.0 1071.4,297.5 1071.8,297.5 1072.2,300.0 1072.6,315.0 1073.0,295.0 1073.4,300.0 1073.8,287.5 1074.2,292.5 1074.6,297.5 1075.0,302.5 1075.4,295.0 1075.8,287.5 1076.2,307.5 1076.6,310.0 1077.0,315.0 1077.4,307.5 1077.8,295.0 1078.2,310.0 1078.6,297.5 1079.0,302.5 1079.4,310.0 1079.8,307.5 1080.2,292.5 1080.6,320.0 1081.0,317.5 1081.4,305.0 1081.8,317.5 1082.2,307.5 1082.6,305.0 1083.0,315.0 1083.4,300.0 1083.8,307.5 1084.2,315.0 1084.6,300.0 1085.0,297.5 1085.4,300.0 1085.8,295.0 1086.2,302.5 1086.6,295.0 1087.0,292.5 1087.4,297.5 1087.8,315.0 1088.2,305.0 1088.6,320.0 1089.0,310.0 1089.4,320.0 1089.8,307.5 1090.2,302.5 1090.6,320.0 1091.0,305.0 1091.4,305.0 1091.8,300.0 1092.2,295.0 1092.6,307.5 1093.0,307.5 1093.4,310.0 1093.8,312.5 1094.2,297.5 1094.6,310.0 1095.0,295.0 1095.4,302.5 1095.8,305.0 1096.2,305.0 1096.6,307.5 1097.0,305.0 1097.4,312.5 1097.8,307.5 1098.2,307.5 1098.6,317.5 1099.0,320.0 1099.4,315.0 1099.8,325.0 1100.2,310.0 1100.6,310.0 1101.0,297.5 1101.4,307.5 1101.8,315.0 1102.2,320.0 1102.6,305.0 1103.0,320.0 1103.2,315.0 1103.4,443.0 1103.8,400.0 1104.4,378.0 1104.6,330.0 1105.0,316.0 1105.4,300.0 1105.8,310.0 1106.2,297.5 1106.6,305.0 1107.0,290.0 1107.4,297.5 1107.8,302.5 1108.2,305.0 1108.6,290.0 1109.0,300.0 1109.4,297.5 1109.8,310.0 1110.2,305.0 1110.6,307.5 1111.0,305.0 1111.4,305.0 1111.8,300.0 1112.2,305.0 1112.6,297.5 1113.0,297.5 1113.4,307.5 1113.8,317.5 1114.2,295.0 1114.6,307.5 1115.0,300.0 1115.4,305.0 1115.8,292.5 1116.2,317.5 1116.6,297.5 1117.0,300.0 1117.4,317.5 1117.8,300.0 1118.2,307.5 1118.6,302.5 1119.0,305.0 1119.4,295.0 1119.8,300.0 1120.2,292.5 1120.6,310.0 1121.0,300.0 1121.4,297.5 1121.8,320.0 1122.2,302.5 1122.6,312.5 1123.0,302.5 1123.4,315.0 1123.8,312.5 1124.2,295.0 1124.6,305.0 1125.0,312.5 1125.4,302.5 1125.8,300.0 1126.2,300.0 1126.6,307.5 1127.0,302.5 1127.4,305.0 1127.8,300.0 1128.2,315.0 1128.6,300.0 1129.0,302.5 1129.4,282.5 1129.8,297.5 1130.2,297.5 1130.6,312.5 1131.0,310.0 1131.4,315.0 1131.8,297.5 1132.2,312.5 1132.6,312.5 1133.0,297.5 1133.4,307.5 1133.8,310.0 1134.2,297.5 1134.6,297.5 1135.0,300.0 1135.4,302.5 1135.8,312.5 1136.2,300.0 1136.6,315.0 1137.0,305.0 1137.4,310.0 1137.8,297.5 1138.2,307.5 1138.6,310.0 1139.0,292.5 1139.4,305.0 1139.8,302.5 1140.2,310.0 1140.6,300.0 1141.0,297.5 1141.4,302.5 1141.8,300.0 1142.2,320.0 1142.6,305.0 1143.0,305.0 1143.4,310.0 1143.8,307.5 1144.2,307.5 1144.6,302.5 1145.0,302.5 1145.4,295.0 1145.8,307.5 1146.2,310.0 1146.6,302.5 1147.0,317.5 1147.4,312.5 1147.8,297.5 1148.2,312.5 1148.6,307.5 1149.0,305.0 1149.4,302.5 1149.8,307.5 1150.2,295.0 1150.6,310.0 1151.0,312.5 1151.4,297.5 1151.8,295.0 1152.2,302.5 1152.6,302.5 1153.0,302.5 1153.4,297.5 1153.8,297.5 1154.2,315.0 1154.6,297.5 1155.0,310.0 1155.4,285.0 1155.8,300.0 1156.2,297.5 1156.6,292.5 1157.0,302.5 1157.4,307.5 1157.8,297.5 1158.2,310.0 1158.6,300.0 1159.0,300.0 1159.4,310.0 1159.8,310.0 1160.2,315.0 1160.6,302.5 1161.0,310.0 1161.4,300.0 1161.8,295.0 1162.2,292.5 1162.6,300.0 1163.0,307.5 1163.4,300.0 1163.8,295.0 1164.2,315.0 1164.6,295.0 1165.0,307.5 1165.4,310.0 1165.8,295.0 1166.2,312.5 1166.6,305.0 1167.0,307.5 1167.4,310.0 1167.8,307.5 1168.2,310.0 1168.6,312.5 1169.0,315.0 1169.4,305.0 1169.8,305.0 1170.2,300.0 1170.4,175.5 1170.7,180.0 1171.0,205.0 1171.3,240.0 1171.7,300.0 1172.1,274.0 1172.5,304.0 1173.0,310.0 1173.4,300.0 1173.8,295.0 1174.2,295.0 1174.6,295.0 1175.0,295.0 1175.4,297.5 1175.8,315.0 1176.2,305.0 1176.6,312.5 1177.0,305.0 1177.4,305.0 1177.8,315.0 1178.2,312.5 1178.6,310.0 1179.0,305.0 1179.4,302.5 1179.8,310.0 1180.2,305.0 1180.6,302.5 1181.0,315.0 1181.4,315.0 1181.8,310.0 1182.2,315.0 1182.6,310.0 1183.0,312.5 1183.4,307.5 1183.8,310.0 1184.2,312.5 1184.6,305.0 1185.0,307.5 1185.4,307.5 1185.8,312.5 1186.2,310.0 1186.6,305.0 1187.0,295.0 1187.4,297.5 1187.8,305.0 1188.2,305.0 1188.6,305.0 1189.0,292.5 1189.4,305.0 1189.8,300.0 1190.2,297.5 1190.6,307.5 1191.0,297.5 1191.4,300.0 1191.8,310.0 1192.2,307.5 1192.6,315.0 1193.0,295.0 1193.4,302.5 1193.8,297.5 1194.2,305.0 1194.6,302.5 1195.0,297.5 1195.4,315.0 1195.8,297.5 1196.2,300.0 1196.6,295.0 1197.0,317.5 1197.4,302.5 1197.8,307.5 1198.2,300.0 1198.6,295.0 1199.0,305.0 1199.4,300.0 1199.8,310.0 1200.2,302.5 1200.6,305.0 1201.0,297.5 1201.4,302.5 1201.8,320.0 1202.2,290.0 1202.6,292.5 1203.0,305.0 1203.4,300.0 1203.8,287.5 1204.2,290.0 1204.6,310.0 1205.0,295.0 1205.4,312.5 1205.8,317.5 1206.2,305.0 1206.6,302.5 1207.0,300.0 1207.4,295.0 1207.8,302.5 1208.2,297.5 1208.6,310.0 1209.0,322.5 1209.4,310.0 1209.8,312.5 1210.2,307.5 1210.6,305.0 1211.0,310.0 1211.4,317.5 1211.8,305.0 1212.2,310.0 1212.6,305.0 1213.0,300.0 1213.4,317.5 1213.8,302.5 1214.2,305.0 1214.6,310.0 1215.0,312.5 1215.4,290.0 1215.8,295.0 1216.2,295.0 1216.6,292.5 1217.0,305.0 1217.4,292.5 1217.8,302.5 1218.2,302.5 1218.6,312.5 1219.0,295.0 1219.4,317.5 1219.8,315.0 1220.2,297.5 1220.6,302.5 1221.0,310.0 1221.4,302.5 1221.8,300.0 1222.2,302.5 1222.6,295.0 1223.0,310.0 1223.4,307.5 1223.8,310.0 1224.2,302.5 1224.6,315.0 1225.0,302.5 1225.4,305.0 1225.8,310.0 1226.2,310.0 1226.6,300.0 1227.0,310.0 1227.4,305.0 1227.8,317.5 1228.2,310.0 1228.6,305.0 1229.0,300.0 1229.4,307.5 1229.8,322.5 1230.2,312.5 1230.6,297.5 1231.0,305.0 1231.4,302.5 1231.8,302.5 1232.2,292.5 1232.6,305.0 1233.0,315.0 1233.4,305.0 1233.8,312.5 1234.2,302.5 1234.6,305.0 1235.0,297.5 1235.4,307.5 1235.8,307.5 1236.2,295.0 1236.6,302.5 1237.0,297.5 1237.3,315.0 1237.5,431.0 1237.9,400.0 1238.5,378.0 1238.7,330.0 1239.1,316.0 1239.4,292.5 1239.8,312.5 1240.2,302.5 1240.6,307.5 1241.0,320.0 1241.4,302.5 1241.8,302.5 1242.2,302.5 1242.6,302.5 1243.0,307.5 1243.4,305.0 1243.8,310.0 1244.2,295.0 1244.6,297.5 1245.0,312.5 1245.4,297.5 1245.8,320.0 1246.2,312.5 1246.6,310.0 1247.0,317.5 1247.4,297.5 1247.8,307.5 1248.2,312.5 1248.6,315.0 1249.0,317.5 1249.4,302.5 1249.8,310.0 1250.2,315.0 1250.6,312.5 1251.0,295.0 1251.4,312.5 1251.8,315.0 1252.2,310.0 1252.6,310.0 1253.0,295.0 1253.4,310.0 1253.8,312.5 1254.2,305.0 1254.6,300.0 1255.0,310.0 1255.4,305.0 1255.8,307.5 1256.2,320.0 1256.6,302.5 1257.0,300.0 1257.4,305.0 1257.8,307.5 1258.2,297.5 1258.6,302.5 1259.0,297.5 1259.4,300.0 1259.8,292.5 1260.2,317.5 1260.6,302.5 1261.0,317.5 1261.4,307.5 1261.8,302.5 1262.2,305.0 1262.6,300.0 1263.0,297.5 1263.4,315.0 1263.8,302.5 1264.2,307.5 1264.6,302.5 1265.0,307.5 1265.4,295.0 1265.8,320.0 1266.2,300.0 1266.6,300.0 1267.0,312.5 1267.4,312.5 1267.8,305.0 1268.2,305.0 1268.6,310.0 1269.0,307.5 1269.4,302.5 1269.8,305.0 1270.2,307.5 1270.6,305.0 1271.0,317.5 1271.4,305.0 1271.8,302.5 1272.2,297.5 1272.6,305.0 1273.0,305.0 1273.4,300.0 1273.8,295.0 1274.2,312.5 1274.6,302.5 1275.0,310.0 1275.4,305.0 1275.8,295.0 1276.2,302.5 1276.6,307.5 1277.0,297.5 1277.4,297.5 1277.8,307.5 1278.2,312.5 1278.6,305.0 1279.0,312.5 1279.4,307.5 1279.8,315.0 1280.2,305.0 1280.6,297.5 1281.0,312.5 1281.4,307.5 1281.8,297.5 1282.2,297.5 1282.6,307.5 1283.0,305.0 1283.4,297.5 1283.8,290.0 1284.2,300.0 1284.6,300.0 1285.0,305.0 1285.4,312.5 1285.8,302.5 1286.2,295.0 1286.6,315.0 1287.0,310.0 1287.4,297.5 1287.8,295.0 1288.2,310.0 1288.6,302.5 1289.0,317.5 1289.4,302.5 1289.8,335.0 1290.2,307.5 1290.6,315.0 1291.0,307.5 1291.4,320.0 1291.8,305.0 1292.2,300.0 1292.6,305.0 1293.0,300.0 1293.4,312.5 1293.8,312.5 1294.2,310.0 1294.6,302.5 1295.0,310.0 1295.4,305.0 1295.8,302.5 1296.2,315.0 1296.6,310.0 1297.0,320.0 1297.4,302.5 1297.8,292.5 1298.2,305.0 1298.6,322.5 1299.0,292.5 1299.4,297.5 1299.8,290.0 1300.2,310.0 1300.6,292.5 1301.0,315.0 1301.4,320.0 1301.8,320.0 1302.2,312.5 1302.6,315.0 1303.0,305.0 1303.4,310.0 1303.8,297.5 1304.2,307.5 1304.4,300.0 1304.6,190.0 1304.9,180.0 1305.2,205.0 1305.5,240.0 1305.9,300.0 1306.3,274.0 1306.7,304.0 1307.0,312.5 1307.4,300.0 1307.8,312.5 1308.2,310.0 1308.6,315.0 1309.0,300.0 1309.4,305.0 1309.8,307.5 1310.2,302.5 1310.6,302.5 1311.0,297.5 1311.4,320.0 1311.8,290.0 1312.2,305.0 1312.6,300.0 1313.0,315.0 1313.4,305.0 1313.8,315.0 1314.2,305.0 1314.6,297.5 1315.0,295.0 1315.4,292.5 1315.8,312.5 1316.2,297.5 1316.6,305.0 1317.0,295.0 1317.4,305.0 1317.8,297.5 1318.2,297.5 1318.6,300.0 1319.0,287.5 1319.4,300.0 1319.8,300.0 1320.2,320.0 1320.6,305.0 1321.0,302.5 1321.4,307.5 1321.8,310.0 1322.2,302.5 1322.6,307.5 1323.0,307.5 1323.4,310.0 1323.8,307.5 1324.2,320.0 1324.6,325.0 1325.0,300.0 1325.4,320.0 1325.8,307.5 1326.2,312.5 1326.6,302.5 1327.0,310.0 1327.4,300.0 1327.8,302.5 1328.2,287.5 1328.6,292.5 1329.0,302.5 1329.4,312.5 1329.8,307.5 1330.2,302.5 1330.6,305.0 1331.0,307.5 1331.4,312.5 1331.8,305.0 1332.2,310.0 1332.6,312.5 1333.0,307.5 1333.4,302.5 1333.8,305.0 1334.2,310.0 1334.6,315.0 1335.0,307.5 1335.4,292.5 1335.8,315.0 1336.2,307.5 1336.6,302.5 1337.0,300.0 1337.4,315.0 1337.8,310.0 1338.2,312.5 1338.6,310.0 1339.0,317.5 1339.4,307.5 1339.8,300.0 1340.2,300.0 1340.6,317.5 1341.0,317.5 1341.4,320.0 1341.8,312.5 1342.2,327.5 1342.6,312.5 1343.0,322.5 1343.4,302.5 1343.8,310.0 1344.2,300.0 1344.6,305.0 1345.0,302.5 1345.4,320.0 1345.8,312.5 1346.2,302.5 1346.6,295.0 1347.0,312.5 1347.4,292.5 1347.8,307.5 1348.2,300.0 1348.6,307.5 1349.0,295.0 1349.4,307.5 1349.8,312.5 1350.2,300.0 1350.6,310.0 1351.0,307.5 1351.4,305.0 1351.8,300.0 1352.2,295.0 1352.6,305.0 1353.0,312.5 1353.4,302.5 1353.8,300.0 1354.2,292.5 1354.6,300.0 1355.0,297.5 1355.4,302.5 1355.8,300.0 1356.2,302.5 1356.6,307.5 1357.0,310.0 1357.4,300.0 1357.8,302.5 1358.2,295.0 1358.6,297.5 1359.0,302.5 1359.4,310.0 1359.8,302.5 1360.2,300.0 1360.6,302.5 1361.0,310.0 1361.4,310.0 1361.8,302.5 1362.2,297.5 1362.6,302.5 1363.0,307.5 1363.4,305.0 1363.8,302.5 1364.2,305.0 1364.6,300.0 1365.0,307.5 1365.4,302.5 1365.8,312.5 1366.2,310.0 1366.6,317.5 1367.0,325.0 1367.4,310.0 1367.8,315.0 1368.2,302.5 1368.6,305.0 1369.0,302.5 1369.4,307.5 1369.8,307.5 1370.2,315.0 1370.6,310.0 1371.0,290.0 1371.5,315.0 1371.7,463.0 1372.1,400.0 1372.7,378.0 1372.9,330.0 1373.3,316.0" fill="none" stroke="#ffff00" stroke-width="1.2"/></svg>
<svg style="position:absolute;left:0;top:0" width="1642" height="1037" shape-rendering="crispEdges"><rect x="30" y="174" width="1344" height="804" fill="none" stroke="#d8d8d8" stroke-width="2"/></svg>
<svg style="position:absolute;left:7px;top:296px" width="23" height="14"><path d="M0 0h15l7 7-7 7H0z" fill="#ffff00"/></svg><div class="t" style="left:7px;top:295px;width:20px;text-align:center;font-size:14px;font-weight:bold;color:#000">1</div>
<svg style="position:absolute;left:7px;top:469px" width="23" height="14"><path d="M0 0h15l7 7-7 7H0z" fill="#00e8ff"/></svg><div class="t" style="left:7px;top:468px;width:20px;text-align:center;font-size:14px;font-weight:bold;color:#000">2</div>
<svg style="position:absolute;left:7px;top:570px" width="23" height="14"><path d="M0 0h15l7 7-7 7H0z" fill="#ff0000"/></svg><div class="t" style="left:7px;top:569px;width:20px;text-align:center;font-size:14px;font-weight:bold;color:#000">M</div>
<svg style="position:absolute;left:7px;top:643px" width="23" height="14"><path d="M0 0h15l7 7-7 7H0z" fill="#ff00ff"/></svg><div class="t" style="left:7px;top:642px;width:20px;text-align:center;font-size:14px;font-weight:bold;color:#000">3</div>
<svg style="position:absolute;left:7px;top:838px" width="23" height="14"><path d="M0 0h15l7 7-7 7H0z" fill="#00ff00"/></svg><div class="t" style="left:7px;top:837px;width:20px;text-align:center;font-size:14px;font-weight:bold;color:#000">4</div>
<svg style="position:absolute;left:1377px;top:425px" width="22" height="14"><path d="M0 7l7-7h14v14H7z" fill="#ffff00"/><path d="M9.5 3.5h8M13.5 3.5v9" stroke="#000" stroke-width="1.5"/></svg>
<div class="t" style="left:56.5px;top:946.9px;font-size:15px;color:#e00000;">MATH Scale:&nbsp; 200mV</div>
<div style="position:absolute;left:31px;top:983px;width:115px;height:24px;background:#000"><div class="t" style="left:2.2px;top:2.6px;font-size:15.3px;color:#e6e600;">CH1</div><svg style="position:absolute;left:37px;top:6px" width="14" height="12"><path d="M1 8V4.5L4 1.5 6.8 5.2 9 9.5 11.8 6.5V3.5" stroke="#e6e600" stroke-width="1.3" fill="none"/></svg><div class="t" style="left:53.199999999999996px;top:2.6px;font-size:15.3px;color:#e6e600;">5.00mV</div></div>
<div style="position:absolute;left:168.2px;top:983px;width:115px;height:24px;background:#000"><div class="t" style="left:1.8px;top:2.6px;font-size:15.3px;color:#00d4f0;">CH2</div><svg style="position:absolute;left:37.4px;top:6px" width="14" height="12"><path d="M1 8V4.5L4 1.5 6.8 5.2 9 9.5 11.8 6.5V3.5" stroke="#00d4f0" stroke-width="1.3" fill="none"/></svg><div class="t" style="left:55.199999999999996px;top:2.6px;font-size:15.3px;color:#00d4f0;">500mV</div></div>
<div style="position:absolute;left:306px;top:983px;width:115px;height:24px;background:#000"><div class="t" style="left:1.4000000000000001px;top:2.6px;font-size:15.3px;color:#ff00ff;">CH3</div><svg style="position:absolute;left:37px;top:6px" width="14" height="12"><path d="M1 8V4.5L4 1.5 6.8 5.2 9 9.5 11.8 6.5V3.5" stroke="#ff00ff" stroke-width="1.3" fill="none"/></svg><div class="t" style="left:53.4px;top:2.6px;font-size:15.3px;color:#ff00ff;">2.00mV</div></div>
<div style="position:absolute;left:443.4px;top:983px;width:115px;height:24px;background:#000"><div style="position:absolute;left:1px;top:2.3px;width:34px;height:19px;background:#00ff00"></div><div class="t" style="left:2.0px;top:2.6px;font-size:15.3px;color:#000;">CH4</div><svg style="position:absolute;left:37.2px;top:6px" width="14" height="12"><path d="M1 8V4.5L4 1.5 6.8 5.2 9 9.5 11.8 6.5V3.5" stroke="#00e000" stroke-width="1.3" fill="none"/></svg><div class="t" style="left:59.699999999999996px;top:2.6px;font-size:15.3px;color:#00e000;">2.00V</div></div>
<div style="position:absolute;left:1262px;top:983px;width:111px;height:24px;background:#000"></div>
<div class="t" style="left:1263.5px;top:986.1px;font-size:15.9px;color:#ff8c00;">Time:20.00ms</div>
<div style="position:absolute;left:1402px;top:117px;width:240px;height:896px;background:#f0f0f0"></div>
<div style="position:absolute;left:1402px;top:153px;width:240px;height:1px;background:#dcdcdc"></div>
<div style="position:absolute;left:1402px;top:153px;width:1px;height:860px;background:#dcdcdc"></div>
<div class="t" style="left:1416px;top:127.8px;font-size:14px;color:#000;">Connect:</div>
<div style="position:absolute;left:1473px;top:121px;width:28px;height:28px;border-radius:50%;background:#ff7f00;border:1px solid #b05000;box-sizing:border-box"></div>
<div style="position:absolute;left:1625px;top:154px;width:17px;height:859px;background:#f0f0f0"></div>
<div style="position:absolute;left:1624px;top:154px;width:1.5px;height:859px;background:#fafafa"></div>
<svg style="position:absolute;left:1629px;top:159px" width="14" height="12"><path d="M2 9l4.5-4.5 4.5 4.5" stroke="#505050" stroke-width="2.2" fill="none"/></svg>
<div style="position:absolute;left:1626px;top:175px;width:16px;height:654px;background:#cdcdcd"></div>
<div style="position:absolute;left:1410px;top:168px;width:209px;height:138px;border:1px solid #dcdcdc;box-sizing:border-box"></div><div class="t" style="left:1418px;top:160px;padding:0 3px;background:#f0f0f0;font-size:13px;color:#000;line-height:15px">Horizontal</div>
<div class="t" style="left:1414px;top:187.2px;font-size:13px;color:#000;">Time / DIV</div>
<div style="position:absolute;left:1413px;top:209px;width:85px;height:27px;background:#e1e1e1;border:1px solid #adadad;box-sizing:border-box"></div><div class="t" style="left:1418px;top:215.0px;font-size:13px;color:#000">20.00ms</div><svg style="position:absolute;left:1481px;top:218.5px" width="12" height="8"><path d="M1.5 1.5l4.5 4.5 4.5-4.5" stroke="#404040" stroke-width="1.1" fill="none"/></svg>
<div class="t" style="left:1414px;top:245.7px;font-size:13px;color:#000;">Format</div>
<div style="position:absolute;left:1413px;top:270px;width:85px;height:28px;background:#e1e1e1;border:1px solid #adadad;box-sizing:border-box"></div><div class="t" style="left:1418px;top:276.5px;font-size:13px;color:#000">Y - T</div><svg style="position:absolute;left:1481px;top:280.0px" width="12" height="8"><path d="M1.5 1.5l4.5 4.5 4.5-4.5" stroke="#404040" stroke-width="1.1" fill="none"/></svg>
<svg style="position:absolute;left:1503.5px;top:182px" width="112" height="112"><defs><linearGradient id="g238" x1="0" y1="0" x2="0.4" y2="1"><stop offset="0" stop-color="#dcdcdc"/><stop offset="0.5" stop-color="#a8a8a8"/><stop offset="1" stop-color="#7a7a7a"/></linearGradient></defs><path d="M22.4 89.6A47.5 47.5 0 1 1 89.6 89.6" fill="none" stroke="#3a3a3a" stroke-width="1.1"/><path d="M23.8 88.2A45.5 45.5 0 1 1 88.2 88.2" fill="none" stroke="#fff" stroke-width="1.6"/><circle cx="56" cy="56" r="43.5" fill="url(#g238)" stroke="#8a8a8a" stroke-width="0.8"/><circle cx="56" cy="56" r="36" fill="#0000cc" stroke="#00007a" stroke-width="2.4"/><path d="M42.4 29.5L51.4 47.5" stroke="#d8d870" stroke-width="2" fill="none"/><path d="M24.9 87.1L17.5 94.5M87.1 87.1L94.5 94.5" stroke="#111" stroke-width="1.5"/></svg>
<div style="position:absolute;left:1410px;top:323px;width:209px;height:188px;border:1px solid #dcdcdc;box-sizing:border-box"></div><div class="t" style="left:1418px;top:315px;padding:0 3px;background:#f0f0f0;font-size:13px;color:#000;line-height:15px">Vertical</div>
<div style="position:absolute;left:1413.5px;top:344.5px;width:84.5px;height:27px;background:#e1e1e1;border:1px solid #adadad;box-sizing:border-box"></div><div class="t" style="left:1418.5px;top:350.5px;font-size:13px;color:#000">CH4</div><svg style="position:absolute;left:1481.0px;top:354.0px" width="12" height="8"><path d="M1.5 1.5l4.5 4.5 4.5-4.5" stroke="#404040" stroke-width="1.1" fill="none"/></svg>
<div style="position:absolute;left:1504px;top:347px;width:16px;height:16px;background:#fff;border:1px solid #333;box-sizing:border-box"></div>
<svg style="position:absolute;left:1504px;top:347px" width="16" height="16"><path d="M3.5 8l3 3.5 6-7.5" stroke="#222" stroke-width="1.3" fill="none"/></svg>
<div class="t" style="left:1525.5px;top:348.7px;font-size:13px;color:#000;">ON/OFF</div>
<div style="position:absolute;left:1413.5px;top:379.5px;width:84.5px;height:25.5px;background:#fff;border:1px solid #adadad;box-sizing:border-box"></div>
<div class="t" style="left:1420px;top:385.2px;font-size:13px;color:#000;">2.00V</div>
<div style="position:absolute;left:1477px;top:381px;width:19px;height:11px;background:#f0f0f0;border:1px solid #cfcfcf;box-sizing:border-box"></div>
<div style="position:absolute;left:1477px;top:392px;width:19px;height:11px;background:#f0f0f0;border:1px solid #cfcfcf;box-sizing:border-box"></div>
<svg style="position:absolute;left:1477px;top:381px" width="19" height="22"><path d="M6 8h7l-3.5-4z M6 15h7l-3.5 4z" fill="#222"/></svg>
<div style="position:absolute;left:1413.5px;top:413px;width:84.5px;height:27px;background:#e1e1e1;border:1px solid #adadad;box-sizing:border-box"></div><div class="t" style="left:1418.5px;top:419.0px;font-size:13px;color:#000">AC</div><svg style="position:absolute;left:1481.0px;top:422.5px" width="12" height="8"><path d="M1.5 1.5l4.5 4.5 4.5-4.5" stroke="#404040" stroke-width="1.1" fill="none"/></svg>
<div style="position:absolute;left:1413.5px;top:448px;width:84.5px;height:27px;background:#e1e1e1;border:1px solid #adadad;box-sizing:border-box"></div><div class="t" style="left:1418.5px;top:454.0px;font-size:13px;color:#000">x1</div><svg style="position:absolute;left:1481.0px;top:457.5px" width="12" height="8"><path d="M1.5 1.5l4.5 4.5 4.5-4.5" stroke="#404040" stroke-width="1.1" fill="none"/></svg>
<svg style="position:absolute;left:1503.5px;top:369px" width="112" height="112"><defs><linearGradient id="g425" x1="0" y1="0" x2="0.4" y2="1"><stop offset="0" stop-color="#dcdcdc"/><stop offset="0.5" stop-color="#a8a8a8"/><stop offset="1" stop-color="#7a7a7a"/></linearGradient></defs><path d="M22.4 89.6A47.5 47.5 0 1 1 89.6 89.6" fill="none" stroke="#3a3a3a" stroke-width="1.1"/><path d="M23.8 88.2A45.5 45.5 0 1 1 88.2 88.2" fill="none" stroke="#fff" stroke-width="1.6"/><circle cx="56" cy="56" r="43.5" fill="url(#g425)" stroke="#8a8a8a" stroke-width="0.8"/><circle cx="56" cy="56" r="36" fill="#00ff00" stroke="#007a00" stroke-width="2.4"/><path d="M26 54L46.3 55.8" stroke="#c040c0" stroke-width="2" fill="none"/><path d="M24.9 87.1L17.5 94.5M87.1 87.1L94.5 94.5" stroke="#111" stroke-width="1.5"/></svg>
<div style="position:absolute;left:1410px;top:527.5px;width:209px;height:300px;border:1px solid #dcdcdc;box-sizing:border-box"></div><div class="t" style="left:1418px;top:519.5px;padding:0 3px;background:#f0f0f0;font-size:13px;color:#000;line-height:15px">Trigger</div>
<div style="position:absolute;left:1522px;top:545.5px;width:85px;height:27.5px;background:#e1e1e1;border:1px solid #adadad;box-sizing:border-box"></div><div class="t" style="left:1527px;top:551.8px;font-size:13px;color:#000">Edge</div><svg style="position:absolute;left:1590px;top:555.2px" width="12" height="8"><path d="M1.5 1.5l4.5 4.5 4.5-4.5" stroke="#404040" stroke-width="1.1" fill="none"/></svg>
<div style="position:absolute;left:1522px;top:583px;width:85px;height:27.5px;background:#e1e1e1;border:1px solid #adadad;box-sizing:border-box"></div><div class="t" style="left:1527px;top:589.3px;font-size:13px;color:#000">AUTO</div><svg style="position:absolute;left:1590px;top:592.8px" width="12" height="8"><path d="M1.5 1.5l4.5 4.5 4.5-4.5" stroke="#404040" stroke-width="1.1" fill="none"/></svg>
<div style="position:absolute;left:1522px;top:620.5px;width:85px;height:27.5px;background:#e1e1e1;border:1px solid #adadad;box-sizing:border-box"></div><div class="t" style="left:1527px;top:626.8px;font-size:13px;color:#000">CH1</div><svg style="position:absolute;left:1590px;top:630.2px" width="12" height="8"><path d="M1.5 1.5l4.5 4.5 4.5-4.5" stroke="#404040" stroke-width="1.1" fill="none"/></svg>
<div style="position:absolute;left:1522px;top:659px;width:85px;height:27.5px;background:#e1e1e1;border:1px solid #adadad;box-sizing:border-box"></div><div class="t" style="left:1527px;top:665.3px;font-size:13px;color:#000">+</div><svg style="position:absolute;left:1590px;top:668.8px" width="12" height="8"><path d="M1.5 1.5l4.5 4.5 4.5-4.5" stroke="#404040" stroke-width="1.1" fill="none"/></svg>
<div class="t" style="left:1413.5px;top:552.7px;font-size:13px;color:#000;">Trigger Mode</div>
<div class="t" style="left:1413.5px;top:589.6px;font-size:13.7px;color:#000;">Trigger Sweep</div>
<div class="t" style="left:1413.5px;top:626.8px;font-size:13.5px;color:#000;">Trigger Source</div>
<div class="t" style="left:1413.5px;top:663.7px;font-size:13px;color:#000;">Trigger Slope</div>
<div style="position:absolute;left:1625px;top:829px;width:1px;height:184px;background:#dcdcdc"></div>
<div style="position:absolute;left:1403px;top:877px;width:210px;height:160px;border:1px solid #dcdcdc;box-sizing:border-box"></div><div class="t" style="left:1411px;top:869px;padding:0 3px;background:#f0f0f0;font-size:13px;color:#000;line-height:15px"></div>
<div class="t" style="left:1414.5px;top:869.3px;font-size:13.5px;color:#000;background:#f0f0f0;padding:0 3px;margin-left:-3px;-webkit-text-stroke:0.25px #000">Move Waveform</div>
<div class="t" style="left:1405.5px;top:893.7px;font-size:13px;color:#a0a0a0;">Length :</div>
<div style="position:absolute;left:1514px;top:885.5px;width:85px;height:23px;background:#f0f0f0;border-top:1px solid #a0a0a0;border-left:1px solid #a0a0a0;border-right:1px solid #fff;border-bottom:1px solid #fff;box-sizing:border-box"></div>
<div class="t" style="left:1543px;top:890.2px;font-size:13px;color:#a0a0a0;">4096</div>
<div class="t" style="left:1405.5px;top:935.7px;font-size:13px;color:#a0a0a0;">Step</div>
<div style="position:absolute;left:1512px;top:931px;width:86px;height:26px;background:#f0f0f0;border:1px solid #c8c8c8;box-sizing:border-box"></div>
<div class="t" style="left:1530.5px;top:936.7px;font-size:13px;color:#6d6d6d;">1000</div>
<svg style="position:absolute;left:1576px;top:932px" width="21" height="24"><path d="M0.5 0v24" stroke="#c8c8c8"/><path d="M1 12h20" stroke="#c8c8c8"/><path d="M7 9h7l-3.5-4z M7 15h7l-3.5 4z" fill="#6d6d6d"/></svg>
<div style="position:absolute;left:1419.5px;top:963px;width:35px;height:23px;background:#cccccc"></div>
<div class="t" style="left:1429px;top:968.7px;font-size:13px;color:#a0a0a0;">|&lt;</div>
<div style="position:absolute;left:1458px;top:962px;width:104px;height:26px;background:#f0f0f0;border:1px solid #c8c8c8;box-sizing:border-box"></div>
<div class="t" style="left:1485px;top:968.2px;font-size:13px;color:#6d6d6d;">2047</div>
<svg style="position:absolute;left:1540px;top:963px" width="21" height="24"><path d="M0.5 0v24" stroke="#c8c8c8"/><path d="M1 12h20" stroke="#c8c8c8"/><path d="M7 9h7l-3.5-4z M7 15h7l-3.5 4z" fill="#6d6d6d"/></svg>
<div style="position:absolute;left:1566px;top:963px;width:35px;height:23px;background:#cccccc"></div>
<div class="t" style="left:1576px;top:968.7px;font-size:13px;color:#a0a0a0;">&gt;|</div>
<div style="position:absolute;left:1641px;top:40px;width:1px;height:997px;background:#c4c4c4"></div>
<div style="position:absolute;left:2px;top:1013px;width:1640px;height:24px;background:#f0f0f0"></div>
<div style="position:absolute;left:2px;top:1013px;width:1640px;height:1px;background:#d7d7d7"></div>
<div style="position:absolute;left:0px;top:1036px;width:1642px;height:1px;background:#9a9a9a"></div>
<div style="position:absolute;left:1341px;top:1014px;width:1px;height:22px;background:#d0d0d0"></div>
<div class="t" style="left:5px;top:1018.2px;font-size:14.7px;color:#222;">Connected</div>
<div class="t" style="left:1348px;top:1020.0px;font-size:12.7px;color:#222;">12.50KSa</div>
<div class="t" style="left:1482.5px;top:1018.3px;font-size:14px;color:#222;">27-02-2017&nbsp; 13:59</div>
<svg style="position:absolute;left:1627px;top:1022px" width="12" height="12"><g fill="#bdbdbd"><rect x="8" y="0" width="2" height="2"/><rect x="4" y="4" width="2" height="2"/><rect x="8" y="4" width="2" height="2"/><rect x="0" y="8" width="2" height="2"/><rect x="4" y="8" width="2" height="2"/><rect x="8" y="8" width="2" height="2"/></g></svg>
<div style="position:absolute;left:883px;top:530px;width:462px;height:427px;background:#f0f0f0;border:1px solid #707070;box-sizing:border-box"></div>
<div style="position:absolute;left:884px;top:531px;width:460px;height:32px;background:#fff"></div>
<div class="t" style="left:888.5px;top:539.4px;font-size:14.5px;color:#000;">MATH Setup</div>
<svg style="position:absolute;left:1317px;top:539px" width="14" height="14"><path d="M1 1L13 13M13 1L1 13" stroke="#111" stroke-width="1.1"/></svg>
<div style="position:absolute;left:898px;top:579px;width:435px;height:330px;border:1px solid #dcdcdc;box-sizing:border-box"></div><div class="t" style="left:906px;top:571px;padding:0 3px;background:#f0f0f0;font-size:13px;color:#000;line-height:15px">Setting</div>
<div style="position:absolute;left:1079px;top:599.5px;width:16px;height:16px;background:#fff;border:1px solid #333;box-sizing:border-box"></div>
<svg style="position:absolute;left:1079px;top:599.5px" width="16" height="16"><path d="M3.5 8l3 3.5 6-7.5" stroke="#222" stroke-width="1.3" fill="none"/></svg>
<div class="t" style="left:1099px;top:600.2px;font-size:13px;color:#000;">ON/OFF</div>
<div class="t" style="left:947px;top:646.2px;font-size:13.6px;color:#000;">Source A</div>
<div style="position:absolute;left:1015px;top:639.5px;width:85px;height:27px;background:#e1e1e1;border:1px solid #adadad;box-sizing:border-box"></div><div class="t" style="left:1020px;top:645.5px;font-size:13px;color:#000">CH1</div><svg style="position:absolute;left:1083px;top:649.0px" width="12" height="8"><path d="M1.5 1.5l4.5 4.5 4.5-4.5" stroke="#404040" stroke-width="1.1" fill="none"/></svg>
<div class="t" style="left:945.5px;top:692.2px;font-size:13.6px;color:#000;">Source B</div>
<div style="position:absolute;left:1015px;top:686px;width:85px;height:27px;background:#e1e1e1;border:1px solid #adadad;box-sizing:border-box"></div><div class="t" style="left:1020px;top:692.0px;font-size:13px;color:#000">CH2</div><svg style="position:absolute;left:1083px;top:695.5px" width="12" height="8"><path d="M1.5 1.5l4.5 4.5 4.5-4.5" stroke="#404040" stroke-width="1.1" fill="none"/></svg>
<div class="t" style="left:928px;top:738.2px;font-size:13px;color:#000;">VOLTS / DIV</div>
<div style="position:absolute;left:1015px;top:732px;width:85px;height:27px;background:#e1e1e1;border:1px solid #adadad;box-sizing:border-box"></div><div class="t" style="left:1020px;top:738.0px;font-size:13px;color:#000">200mV</div><svg style="position:absolute;left:1083px;top:741.5px" width="12" height="8"><path d="M1.5 1.5l4.5 4.5 4.5-4.5" stroke="#404040" stroke-width="1.1" fill="none"/></svg>
<div style="position:absolute;left:1014px;top:831px;width:16px;height:16px;background:#fff;border:1px solid #333;box-sizing:border-box"></div>
<div class="t" style="left:1034px;top:833.7px;font-size:13px;color:#000;">Invert</div>
<div style="position:absolute;left:1069px;top:868.5px;width:91px;height:29px;background:#e1e1e1;border:1px solid #adadad;box-sizing:border-box"></div>
<div class="t" style="left:1083px;top:875.7px;font-size:13px;color:#000;">Save Data</div>
<div style="position:absolute;left:1157px;top:640px;width:167px;height:211px;border:1px solid #dcdcdc;box-sizing:border-box"></div><div class="t" style="left:1165px;top:632px;padding:0 3px;background:#f0f0f0;font-size:13px;color:#000;line-height:15px">Operate</div>
<div style="position:absolute;left:1214px;top:665.6px;width:16px;height:16px;border-radius:50%;background:#fff;border:1px solid #333;box-sizing:border-box"></div>
<div style="position:absolute;left:1218px;top:669.6px;width:8px;height:8px;border-radius:50%;background:#333"></div>
<div class="t" style="left:1234px;top:666.1px;font-size:13px;color:#000;">A + B</div>
<div style="position:absolute;left:1214px;top:702.8px;width:16px;height:16px;border-radius:50%;background:#fff;border:1px solid #333;box-sizing:border-box"></div>
<div class="t" style="left:1234px;top:703.3px;font-size:13px;color:#000;">A -&nbsp; B</div>
<div style="position:absolute;left:1214px;top:740.0px;width:16px;height:16px;border-radius:50%;background:#fff;border:1px solid #333;box-sizing:border-box"></div>
<div class="t" style="left:1234px;top:740.5px;font-size:13px;color:#000;">A x B</div>
<div style="position:absolute;left:1214px;top:777.2px;width:16px;height:16px;border-radius:50%;background:#fff;border:1px solid #333;box-sizing:border-box"></div>
<div class="t" style="left:1234px;top:777.7px;font-size:13px;color:#000;">A /&nbsp; B</div>
<div style="position:absolute;left:1214px;top:814.4px;width:16px;height:16px;border-radius:50%;background:#fff;border:1px solid #333;box-sizing:border-box"></div>
<div class="t" style="left:1234px;top:814.9px;font-size:13px;color:#000;">&nbsp;FFT</div>
<div style="position:absolute;left:944px;top:919.5px;width:91px;height:29px;background:#e1e1e1;border:2px solid #0078d7;box-sizing:border-box"></div>
<div class="t" style="left:980.5px;top:926.7px;font-size:13px;color:#000;">OK</div>
<div style="position:absolute;left:1192px;top:919.5px;width:91px;height:29px;background:#e1e1e1;border:1px solid #adadad;box-sizing:border-box"></div>
<div class="t" style="left:1216px;top:926.7px;font-size:13px;color:#000;">Cancel</div>
</body></html>
